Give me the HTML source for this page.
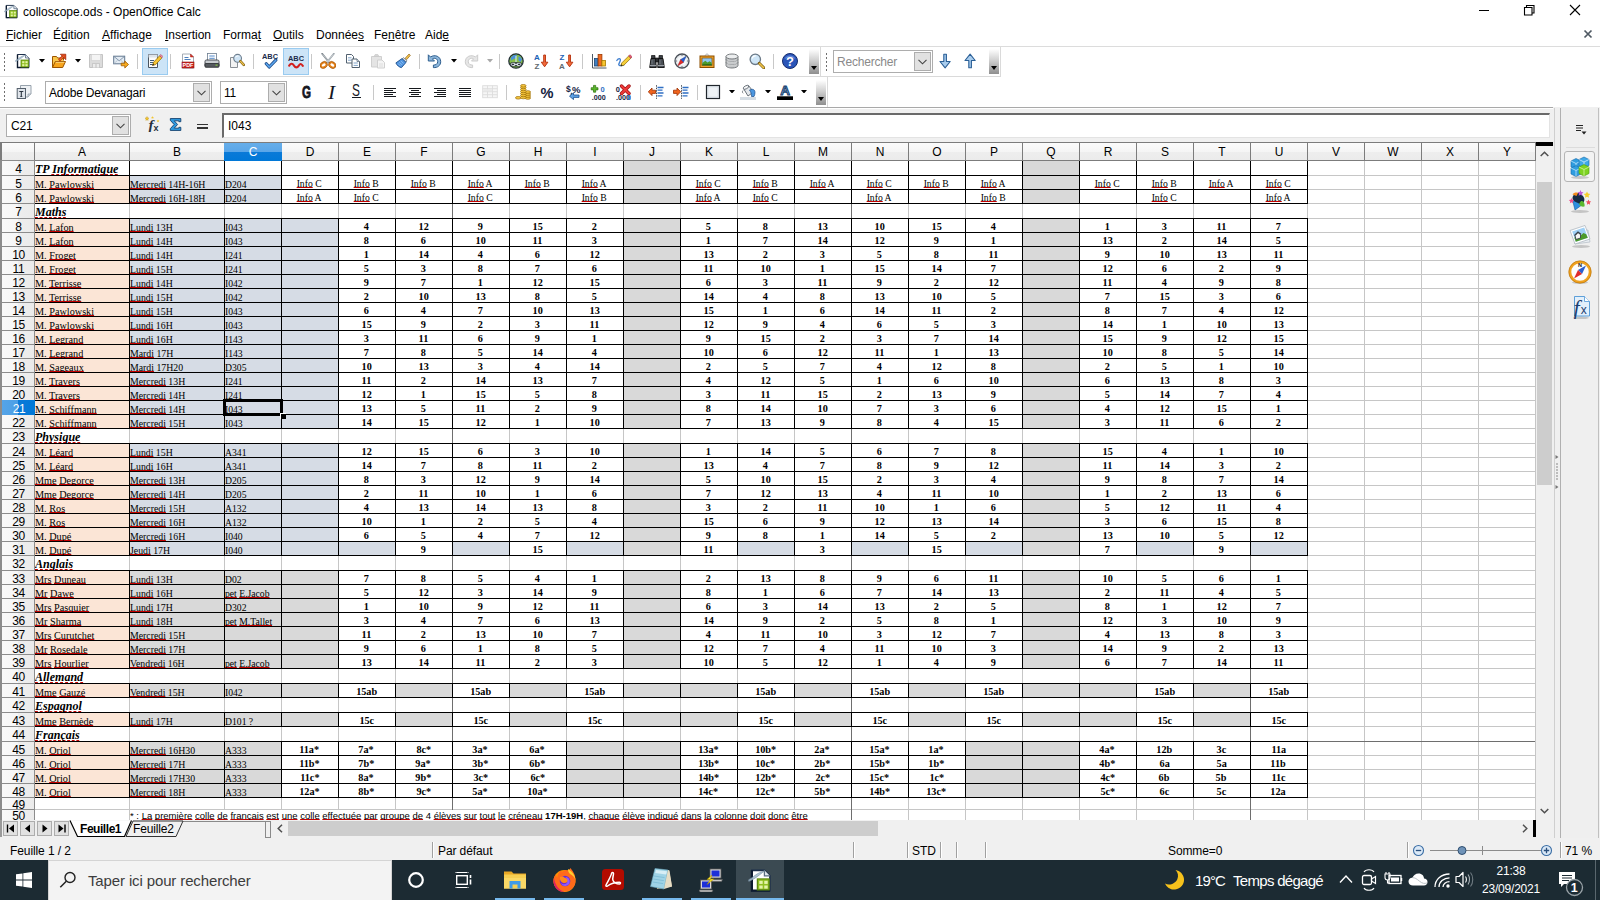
<!DOCTYPE html>
<html lang="fr"><head><meta charset="utf-8"><title>colloscope.ods - OpenOffice Calc</title>
<style>
html,body{margin:0;padding:0;background:#fff;}
#root{position:relative;width:1600px;height:900px;overflow:hidden;background:#f0f0f0;font-family:"Liberation Sans",sans-serif;font-size:12px;color:#000;}
.abs{position:absolute;box-sizing:border-box;}
#gridclip{position:absolute;left:0;top:0;width:1536px;height:820px;overflow:hidden;}
.vl{width:1px;background:#c6c6c6;}
.hl{height:1px;background:#c6c6c6;}
.bk{background:#000;}
.ct{font-family:"Liberation Serif",serif;font-size:9.4px;line-height:1;white-space:nowrap;overflow:visible;display:flex;align-items:flex-end;}
.ct span{display:block;transform:scaleX(1.09);transform-origin:50% 100%;}
.ct.l span{transform-origin:0 100%;position:relative;top:1px;}
.ct.sec span{transform:scaleX(.962);transform-origin:0 100%;}
.ct.lb span{transform:scaleX(1.045);}
.ct.lc span{transform:scaleX(1.03);}
.ct.i span{transform:scaleX(1.03);}
.ct.l{justify-content:flex-start;}
.ct.n{justify-content:center;font-weight:bold;}
.ct.i{justify-content:center;}
.ct.sec{font-weight:bold;font-style:italic;font-size:12.5px;}
.ct u, .note u{text-decoration:underline solid #c40000;text-decoration-thickness:1.2px;text-underline-offset:0.4px;text-decoration-skip-ink:none;}
.note{font-family:"Liberation Sans",sans-serif;font-size:9.5px;line-height:1;white-space:nowrap;display:flex;align-items:flex-end;}
.hdr{background:linear-gradient(#fbfbfb 0,#f5f5f5 50%,#eeeeee 50%,#ebebeb 100%);text-align:center;font-size:12px;line-height:19px;color:#000;}
.hdr.sel{background:linear-gradient(#66aeea 0,#5aa6e8 50%,#0a7ad8 50%,#0078d7 100%);color:#fff;}
.rh{background:linear-gradient(90deg,#f9f9f9 0,#f6f6f6 50%,#eeeeee 50%,#ebebeb 100%);text-align:center;font-size:12px;display:flex;align-items:center;justify-content:center;line-height:1;overflow:hidden;letter-spacing:-0.3px;}
.rh span{position:relative;top:1px;left:0.5px}
.rh.sel{background:linear-gradient(90deg,#55a4e8 0,#4a9fe6 50%,#0a7ad8 50%,#0078d7 100%);color:#fff;}
.title{font-size:12px;line-height:16px;white-space:nowrap;}
.menu{font-size:12px;line-height:16px;white-space:nowrap;}
.menu u{text-decoration:underline;}
.ui{font-size:12px;line-height:14px;white-space:nowrap;}
.tbt{font-size:17px;line-height:20px;color:#15181f;font-family:"Liberation Sans",sans-serif;}
.st{font-size:12px;line-height:16px;white-space:nowrap;letter-spacing:-0.1px}
.ct.sec u{text-decoration:underline dashed #c40000;text-decoration-thickness:1.2px;text-underline-offset:0.6px;}
.ct.n span,.ct.i span{position:relative;left:-0.6px;}

</style></head><body>
<div id="root">
<div id="gridclip">
<div class="abs" style="left:0;top:142px;width:1536px;height:678px;background:#fff"></div>
<div class="abs vl" style="left:34px;top:160px;height:660px"></div>
<div class="abs vl" style="left:129px;top:160px;height:660px"></div>
<div class="abs vl" style="left:224px;top:160px;height:660px"></div>
<div class="abs vl" style="left:281px;top:160px;height:660px"></div>
<div class="abs vl" style="left:338px;top:160px;height:660px"></div>
<div class="abs vl" style="left:395px;top:160px;height:660px"></div>
<div class="abs vl" style="left:452px;top:160px;height:660px"></div>
<div class="abs vl" style="left:509px;top:160px;height:660px"></div>
<div class="abs vl" style="left:566px;top:160px;height:660px"></div>
<div class="abs vl" style="left:623px;top:160px;height:660px"></div>
<div class="abs vl" style="left:680px;top:160px;height:660px"></div>
<div class="abs vl" style="left:737px;top:160px;height:660px"></div>
<div class="abs vl" style="left:794px;top:160px;height:660px"></div>
<div class="abs vl" style="left:851px;top:160px;height:660px"></div>
<div class="abs vl" style="left:908px;top:160px;height:660px"></div>
<div class="abs vl" style="left:965px;top:160px;height:660px"></div>
<div class="abs vl" style="left:1022px;top:160px;height:660px"></div>
<div class="abs vl" style="left:1079px;top:160px;height:660px"></div>
<div class="abs vl" style="left:1136px;top:160px;height:660px"></div>
<div class="abs vl" style="left:1193px;top:160px;height:660px"></div>
<div class="abs vl" style="left:1250px;top:160px;height:660px"></div>
<div class="abs vl" style="left:1307px;top:160px;height:660px"></div>
<div class="abs vl" style="left:1364px;top:160px;height:660px"></div>
<div class="abs vl" style="left:1421px;top:160px;height:660px"></div>
<div class="abs vl" style="left:1478px;top:160px;height:660px"></div>
<div class="abs vl" style="left:1535px;top:160px;height:660px"></div>
<div class="abs hl" style="left:34px;top:175px;width:1502px"></div>
<div class="abs hl" style="left:34px;top:189px;width:1502px"></div>
<div class="abs hl" style="left:34px;top:203px;width:1502px"></div>
<div class="abs hl" style="left:34px;top:218px;width:1502px"></div>
<div class="abs hl" style="left:34px;top:232px;width:1502px"></div>
<div class="abs hl" style="left:34px;top:246px;width:1502px"></div>
<div class="abs hl" style="left:34px;top:260px;width:1502px"></div>
<div class="abs hl" style="left:34px;top:274px;width:1502px"></div>
<div class="abs hl" style="left:34px;top:288px;width:1502px"></div>
<div class="abs hl" style="left:34px;top:302px;width:1502px"></div>
<div class="abs hl" style="left:34px;top:316px;width:1502px"></div>
<div class="abs hl" style="left:34px;top:330px;width:1502px"></div>
<div class="abs hl" style="left:34px;top:344px;width:1502px"></div>
<div class="abs hl" style="left:34px;top:358px;width:1502px"></div>
<div class="abs hl" style="left:34px;top:372px;width:1502px"></div>
<div class="abs hl" style="left:34px;top:386px;width:1502px"></div>
<div class="abs hl" style="left:34px;top:400px;width:1502px"></div>
<div class="abs hl" style="left:34px;top:414px;width:1502px"></div>
<div class="abs hl" style="left:34px;top:428px;width:1502px"></div>
<div class="abs hl" style="left:34px;top:443px;width:1502px"></div>
<div class="abs hl" style="left:34px;top:457px;width:1502px"></div>
<div class="abs hl" style="left:34px;top:471px;width:1502px"></div>
<div class="abs hl" style="left:34px;top:485px;width:1502px"></div>
<div class="abs hl" style="left:34px;top:499px;width:1502px"></div>
<div class="abs hl" style="left:34px;top:513px;width:1502px"></div>
<div class="abs hl" style="left:34px;top:527px;width:1502px"></div>
<div class="abs hl" style="left:34px;top:541px;width:1502px"></div>
<div class="abs hl" style="left:34px;top:555px;width:1502px"></div>
<div class="abs hl" style="left:34px;top:570px;width:1502px"></div>
<div class="abs hl" style="left:34px;top:584px;width:1502px"></div>
<div class="abs hl" style="left:34px;top:598px;width:1502px"></div>
<div class="abs hl" style="left:34px;top:612px;width:1502px"></div>
<div class="abs hl" style="left:34px;top:626px;width:1502px"></div>
<div class="abs hl" style="left:34px;top:640px;width:1502px"></div>
<div class="abs hl" style="left:34px;top:654px;width:1502px"></div>
<div class="abs hl" style="left:34px;top:668px;width:1502px"></div>
<div class="abs hl" style="left:34px;top:683px;width:1502px"></div>
<div class="abs hl" style="left:34px;top:697px;width:1502px"></div>
<div class="abs hl" style="left:34px;top:712px;width:1502px"></div>
<div class="abs hl" style="left:34px;top:726px;width:1502px"></div>
<div class="abs hl" style="left:34px;top:741px;width:1502px"></div>
<div class="abs hl" style="left:34px;top:755px;width:1502px"></div>
<div class="abs hl" style="left:34px;top:769px;width:1502px"></div>
<div class="abs hl" style="left:34px;top:783px;width:1502px"></div>
<div class="abs hl" style="left:34px;top:797px;width:1502px"></div>
<div class="abs hl" style="left:34px;top:809px;width:1502px"></div>
<div class="abs hl" style="left:34px;top:823px;width:1502px"></div>
<div class="abs" style="left:35px;top:176px;width:94px;height:13px;background:#fbe5d6"></div>
<div class="abs" style="left:35px;top:190px;width:94px;height:13px;background:#fbe5d6"></div>
<div class="abs" style="left:35px;top:219px;width:94px;height:13px;background:#fbe5d6"></div>
<div class="abs" style="left:35px;top:233px;width:94px;height:13px;background:#fbe5d6"></div>
<div class="abs" style="left:35px;top:247px;width:94px;height:13px;background:#fbe5d6"></div>
<div class="abs" style="left:35px;top:261px;width:94px;height:13px;background:#fbe5d6"></div>
<div class="abs" style="left:35px;top:275px;width:94px;height:13px;background:#fbe5d6"></div>
<div class="abs" style="left:35px;top:289px;width:94px;height:13px;background:#fbe5d6"></div>
<div class="abs" style="left:35px;top:303px;width:94px;height:13px;background:#fbe5d6"></div>
<div class="abs" style="left:35px;top:317px;width:94px;height:13px;background:#fbe5d6"></div>
<div class="abs" style="left:35px;top:331px;width:94px;height:13px;background:#fbe5d6"></div>
<div class="abs" style="left:35px;top:345px;width:94px;height:13px;background:#fbe5d6"></div>
<div class="abs" style="left:35px;top:359px;width:94px;height:13px;background:#fbe5d6"></div>
<div class="abs" style="left:35px;top:373px;width:94px;height:13px;background:#fbe5d6"></div>
<div class="abs" style="left:35px;top:387px;width:94px;height:13px;background:#fbe5d6"></div>
<div class="abs" style="left:35px;top:401px;width:94px;height:13px;background:#fbe5d6"></div>
<div class="abs" style="left:35px;top:415px;width:94px;height:13px;background:#fbe5d6"></div>
<div class="abs" style="left:35px;top:444px;width:94px;height:13px;background:#fbe5d6"></div>
<div class="abs" style="left:35px;top:458px;width:94px;height:13px;background:#fbe5d6"></div>
<div class="abs" style="left:35px;top:472px;width:94px;height:13px;background:#fbe5d6"></div>
<div class="abs" style="left:35px;top:486px;width:94px;height:13px;background:#fbe5d6"></div>
<div class="abs" style="left:35px;top:500px;width:94px;height:13px;background:#fbe5d6"></div>
<div class="abs" style="left:35px;top:514px;width:94px;height:13px;background:#fbe5d6"></div>
<div class="abs" style="left:35px;top:528px;width:94px;height:13px;background:#fbe5d6"></div>
<div class="abs" style="left:35px;top:542px;width:94px;height:13px;background:#fbe5d6"></div>
<div class="abs" style="left:35px;top:571px;width:94px;height:13px;background:#fbe5d6"></div>
<div class="abs" style="left:35px;top:585px;width:94px;height:13px;background:#fbe5d6"></div>
<div class="abs" style="left:35px;top:599px;width:94px;height:13px;background:#fbe5d6"></div>
<div class="abs" style="left:35px;top:613px;width:94px;height:13px;background:#fbe5d6"></div>
<div class="abs" style="left:35px;top:627px;width:94px;height:13px;background:#fbe5d6"></div>
<div class="abs" style="left:35px;top:641px;width:94px;height:13px;background:#fbe5d6"></div>
<div class="abs" style="left:35px;top:655px;width:94px;height:13px;background:#fbe5d6"></div>
<div class="abs" style="left:35px;top:684px;width:94px;height:13px;background:#fbe5d6"></div>
<div class="abs" style="left:35px;top:713px;width:94px;height:13px;background:#fbe5d6"></div>
<div class="abs" style="left:35px;top:742px;width:94px;height:13px;background:#fbe5d6"></div>
<div class="abs" style="left:35px;top:756px;width:94px;height:13px;background:#fbe5d6"></div>
<div class="abs" style="left:35px;top:770px;width:94px;height:13px;background:#fbe5d6"></div>
<div class="abs" style="left:35px;top:784px;width:94px;height:13px;background:#fbe5d6"></div>
<div class="abs" style="left:130px;top:176px;width:94px;height:13px;background:#d6dce5"></div>
<div class="abs" style="left:225px;top:176px;width:56px;height:13px;background:#d6dce5"></div>
<div class="abs" style="left:130px;top:190px;width:94px;height:13px;background:#d6dce5"></div>
<div class="abs" style="left:225px;top:190px;width:56px;height:13px;background:#d6dce5"></div>
<div class="abs" style="left:130px;top:219px;width:94px;height:13px;background:#d6dce5"></div>
<div class="abs" style="left:225px;top:219px;width:56px;height:13px;background:#d6dce5"></div>
<div class="abs" style="left:282px;top:219px;width:56px;height:13px;background:#d6dce5"></div>
<div class="abs" style="left:130px;top:233px;width:94px;height:13px;background:#d6dce5"></div>
<div class="abs" style="left:225px;top:233px;width:56px;height:13px;background:#d6dce5"></div>
<div class="abs" style="left:282px;top:233px;width:56px;height:13px;background:#d6dce5"></div>
<div class="abs" style="left:130px;top:247px;width:94px;height:13px;background:#d6dce5"></div>
<div class="abs" style="left:225px;top:247px;width:56px;height:13px;background:#d6dce5"></div>
<div class="abs" style="left:282px;top:247px;width:56px;height:13px;background:#d6dce5"></div>
<div class="abs" style="left:130px;top:261px;width:94px;height:13px;background:#d6dce5"></div>
<div class="abs" style="left:225px;top:261px;width:56px;height:13px;background:#d6dce5"></div>
<div class="abs" style="left:282px;top:261px;width:56px;height:13px;background:#d6dce5"></div>
<div class="abs" style="left:130px;top:275px;width:94px;height:13px;background:#d6dce5"></div>
<div class="abs" style="left:225px;top:275px;width:56px;height:13px;background:#d6dce5"></div>
<div class="abs" style="left:282px;top:275px;width:56px;height:13px;background:#d6dce5"></div>
<div class="abs" style="left:130px;top:289px;width:94px;height:13px;background:#d6dce5"></div>
<div class="abs" style="left:225px;top:289px;width:56px;height:13px;background:#d6dce5"></div>
<div class="abs" style="left:282px;top:289px;width:56px;height:13px;background:#d6dce5"></div>
<div class="abs" style="left:130px;top:303px;width:94px;height:13px;background:#d6dce5"></div>
<div class="abs" style="left:225px;top:303px;width:56px;height:13px;background:#d6dce5"></div>
<div class="abs" style="left:282px;top:303px;width:56px;height:13px;background:#d6dce5"></div>
<div class="abs" style="left:130px;top:317px;width:94px;height:13px;background:#d6dce5"></div>
<div class="abs" style="left:225px;top:317px;width:56px;height:13px;background:#d6dce5"></div>
<div class="abs" style="left:282px;top:317px;width:56px;height:13px;background:#d6dce5"></div>
<div class="abs" style="left:130px;top:331px;width:94px;height:13px;background:#d6dce5"></div>
<div class="abs" style="left:225px;top:331px;width:56px;height:13px;background:#d6dce5"></div>
<div class="abs" style="left:282px;top:331px;width:56px;height:13px;background:#d6dce5"></div>
<div class="abs" style="left:130px;top:345px;width:94px;height:13px;background:#d6dce5"></div>
<div class="abs" style="left:225px;top:345px;width:56px;height:13px;background:#d6dce5"></div>
<div class="abs" style="left:282px;top:345px;width:56px;height:13px;background:#d6dce5"></div>
<div class="abs" style="left:130px;top:359px;width:94px;height:13px;background:#d6dce5"></div>
<div class="abs" style="left:225px;top:359px;width:56px;height:13px;background:#d6dce5"></div>
<div class="abs" style="left:282px;top:359px;width:56px;height:13px;background:#d6dce5"></div>
<div class="abs" style="left:130px;top:373px;width:94px;height:13px;background:#d6dce5"></div>
<div class="abs" style="left:225px;top:373px;width:56px;height:13px;background:#d6dce5"></div>
<div class="abs" style="left:282px;top:373px;width:56px;height:13px;background:#d6dce5"></div>
<div class="abs" style="left:130px;top:387px;width:94px;height:13px;background:#d6dce5"></div>
<div class="abs" style="left:225px;top:387px;width:56px;height:13px;background:#d6dce5"></div>
<div class="abs" style="left:282px;top:387px;width:56px;height:13px;background:#d6dce5"></div>
<div class="abs" style="left:130px;top:401px;width:94px;height:13px;background:#d6dce5"></div>
<div class="abs" style="left:225px;top:401px;width:56px;height:13px;background:#d6dce5"></div>
<div class="abs" style="left:282px;top:401px;width:56px;height:13px;background:#d6dce5"></div>
<div class="abs" style="left:130px;top:415px;width:94px;height:13px;background:#d6dce5"></div>
<div class="abs" style="left:225px;top:415px;width:56px;height:13px;background:#d6dce5"></div>
<div class="abs" style="left:282px;top:415px;width:56px;height:13px;background:#d6dce5"></div>
<div class="abs" style="left:130px;top:444px;width:94px;height:13px;background:#d6dce5"></div>
<div class="abs" style="left:225px;top:444px;width:56px;height:13px;background:#d6dce5"></div>
<div class="abs" style="left:282px;top:444px;width:56px;height:13px;background:#d6dce5"></div>
<div class="abs" style="left:130px;top:458px;width:94px;height:13px;background:#d6dce5"></div>
<div class="abs" style="left:225px;top:458px;width:56px;height:13px;background:#d6dce5"></div>
<div class="abs" style="left:282px;top:458px;width:56px;height:13px;background:#d6dce5"></div>
<div class="abs" style="left:130px;top:472px;width:94px;height:13px;background:#d6dce5"></div>
<div class="abs" style="left:225px;top:472px;width:56px;height:13px;background:#d6dce5"></div>
<div class="abs" style="left:282px;top:472px;width:56px;height:13px;background:#d6dce5"></div>
<div class="abs" style="left:130px;top:486px;width:94px;height:13px;background:#d6dce5"></div>
<div class="abs" style="left:225px;top:486px;width:56px;height:13px;background:#d6dce5"></div>
<div class="abs" style="left:282px;top:486px;width:56px;height:13px;background:#d6dce5"></div>
<div class="abs" style="left:130px;top:500px;width:94px;height:13px;background:#d6dce5"></div>
<div class="abs" style="left:225px;top:500px;width:56px;height:13px;background:#d6dce5"></div>
<div class="abs" style="left:282px;top:500px;width:56px;height:13px;background:#d6dce5"></div>
<div class="abs" style="left:130px;top:514px;width:94px;height:13px;background:#d6dce5"></div>
<div class="abs" style="left:225px;top:514px;width:56px;height:13px;background:#d6dce5"></div>
<div class="abs" style="left:282px;top:514px;width:56px;height:13px;background:#d6dce5"></div>
<div class="abs" style="left:130px;top:528px;width:94px;height:13px;background:#d6dce5"></div>
<div class="abs" style="left:225px;top:528px;width:56px;height:13px;background:#d6dce5"></div>
<div class="abs" style="left:282px;top:528px;width:56px;height:13px;background:#d6dce5"></div>
<div class="abs" style="left:130px;top:542px;width:94px;height:13px;background:#d6dce5"></div>
<div class="abs" style="left:225px;top:542px;width:56px;height:13px;background:#d6dce5"></div>
<div class="abs" style="left:282px;top:542px;width:56px;height:13px;background:#d6dce5"></div>
<div class="abs" style="left:130px;top:571px;width:94px;height:13px;background:#d9d9d9"></div>
<div class="abs" style="left:225px;top:571px;width:56px;height:13px;background:#d9d9d9"></div>
<div class="abs" style="left:282px;top:571px;width:56px;height:13px;background:#d9d9d9"></div>
<div class="abs" style="left:130px;top:585px;width:94px;height:13px;background:#d9d9d9"></div>
<div class="abs" style="left:225px;top:585px;width:56px;height:13px;background:#d9d9d9"></div>
<div class="abs" style="left:282px;top:585px;width:56px;height:13px;background:#d9d9d9"></div>
<div class="abs" style="left:130px;top:599px;width:94px;height:13px;background:#d9d9d9"></div>
<div class="abs" style="left:225px;top:599px;width:56px;height:13px;background:#d9d9d9"></div>
<div class="abs" style="left:282px;top:599px;width:56px;height:13px;background:#d9d9d9"></div>
<div class="abs" style="left:130px;top:613px;width:94px;height:13px;background:#d9d9d9"></div>
<div class="abs" style="left:225px;top:613px;width:56px;height:13px;background:#d9d9d9"></div>
<div class="abs" style="left:282px;top:613px;width:56px;height:13px;background:#d9d9d9"></div>
<div class="abs" style="left:130px;top:627px;width:94px;height:13px;background:#d9d9d9"></div>
<div class="abs" style="left:225px;top:627px;width:56px;height:13px;background:#d9d9d9"></div>
<div class="abs" style="left:282px;top:627px;width:56px;height:13px;background:#d9d9d9"></div>
<div class="abs" style="left:130px;top:641px;width:94px;height:13px;background:#d9d9d9"></div>
<div class="abs" style="left:225px;top:641px;width:56px;height:13px;background:#d9d9d9"></div>
<div class="abs" style="left:282px;top:641px;width:56px;height:13px;background:#d9d9d9"></div>
<div class="abs" style="left:130px;top:655px;width:94px;height:13px;background:#d9d9d9"></div>
<div class="abs" style="left:225px;top:655px;width:56px;height:13px;background:#d9d9d9"></div>
<div class="abs" style="left:282px;top:655px;width:56px;height:13px;background:#d9d9d9"></div>
<div class="abs" style="left:130px;top:684px;width:94px;height:13px;background:#d9d9d9"></div>
<div class="abs" style="left:225px;top:684px;width:56px;height:13px;background:#d9d9d9"></div>
<div class="abs" style="left:282px;top:684px;width:56px;height:13px;background:#d9d9d9"></div>
<div class="abs" style="left:130px;top:713px;width:94px;height:13px;background:#d9d9d9"></div>
<div class="abs" style="left:225px;top:713px;width:56px;height:13px;background:#d9d9d9"></div>
<div class="abs" style="left:282px;top:713px;width:56px;height:13px;background:#d9d9d9"></div>
<div class="abs" style="left:130px;top:742px;width:94px;height:13px;background:#d9d9d9"></div>
<div class="abs" style="left:225px;top:742px;width:56px;height:13px;background:#d9d9d9"></div>
<div class="abs" style="left:130px;top:756px;width:94px;height:13px;background:#d9d9d9"></div>
<div class="abs" style="left:225px;top:756px;width:56px;height:13px;background:#d9d9d9"></div>
<div class="abs" style="left:130px;top:770px;width:94px;height:13px;background:#d9d9d9"></div>
<div class="abs" style="left:225px;top:770px;width:56px;height:13px;background:#d9d9d9"></div>
<div class="abs" style="left:130px;top:784px;width:94px;height:13px;background:#d9d9d9"></div>
<div class="abs" style="left:225px;top:784px;width:56px;height:13px;background:#d9d9d9"></div>
<div class="abs" style="left:624px;top:161px;width:56px;height:14px;background:#d9d9d9"></div>
<div class="abs" style="left:1023px;top:161px;width:56px;height:14px;background:#d9d9d9"></div>
<div class="abs" style="left:624px;top:176px;width:56px;height:13px;background:#d9d9d9"></div>
<div class="abs" style="left:1023px;top:176px;width:56px;height:13px;background:#d9d9d9"></div>
<div class="abs" style="left:624px;top:190px;width:56px;height:13px;background:#d9d9d9"></div>
<div class="abs" style="left:1023px;top:190px;width:56px;height:13px;background:#d9d9d9"></div>
<div class="abs" style="left:624px;top:219px;width:56px;height:13px;background:#d9d9d9"></div>
<div class="abs" style="left:1023px;top:219px;width:56px;height:13px;background:#d9d9d9"></div>
<div class="abs" style="left:624px;top:233px;width:56px;height:13px;background:#d9d9d9"></div>
<div class="abs" style="left:1023px;top:233px;width:56px;height:13px;background:#d9d9d9"></div>
<div class="abs" style="left:624px;top:247px;width:56px;height:13px;background:#d9d9d9"></div>
<div class="abs" style="left:1023px;top:247px;width:56px;height:13px;background:#d9d9d9"></div>
<div class="abs" style="left:624px;top:261px;width:56px;height:13px;background:#d9d9d9"></div>
<div class="abs" style="left:1023px;top:261px;width:56px;height:13px;background:#d9d9d9"></div>
<div class="abs" style="left:624px;top:275px;width:56px;height:13px;background:#d9d9d9"></div>
<div class="abs" style="left:1023px;top:275px;width:56px;height:13px;background:#d9d9d9"></div>
<div class="abs" style="left:624px;top:289px;width:56px;height:13px;background:#d9d9d9"></div>
<div class="abs" style="left:1023px;top:289px;width:56px;height:13px;background:#d9d9d9"></div>
<div class="abs" style="left:624px;top:303px;width:56px;height:13px;background:#d9d9d9"></div>
<div class="abs" style="left:1023px;top:303px;width:56px;height:13px;background:#d9d9d9"></div>
<div class="abs" style="left:624px;top:317px;width:56px;height:13px;background:#d9d9d9"></div>
<div class="abs" style="left:1023px;top:317px;width:56px;height:13px;background:#d9d9d9"></div>
<div class="abs" style="left:624px;top:331px;width:56px;height:13px;background:#d9d9d9"></div>
<div class="abs" style="left:1023px;top:331px;width:56px;height:13px;background:#d9d9d9"></div>
<div class="abs" style="left:624px;top:345px;width:56px;height:13px;background:#d9d9d9"></div>
<div class="abs" style="left:1023px;top:345px;width:56px;height:13px;background:#d9d9d9"></div>
<div class="abs" style="left:624px;top:359px;width:56px;height:13px;background:#d9d9d9"></div>
<div class="abs" style="left:1023px;top:359px;width:56px;height:13px;background:#d9d9d9"></div>
<div class="abs" style="left:624px;top:373px;width:56px;height:13px;background:#d9d9d9"></div>
<div class="abs" style="left:1023px;top:373px;width:56px;height:13px;background:#d9d9d9"></div>
<div class="abs" style="left:624px;top:387px;width:56px;height:13px;background:#d9d9d9"></div>
<div class="abs" style="left:1023px;top:387px;width:56px;height:13px;background:#d9d9d9"></div>
<div class="abs" style="left:624px;top:401px;width:56px;height:13px;background:#d9d9d9"></div>
<div class="abs" style="left:1023px;top:401px;width:56px;height:13px;background:#d9d9d9"></div>
<div class="abs" style="left:624px;top:415px;width:56px;height:13px;background:#d9d9d9"></div>
<div class="abs" style="left:1023px;top:415px;width:56px;height:13px;background:#d9d9d9"></div>
<div class="abs" style="left:624px;top:444px;width:56px;height:13px;background:#d9d9d9"></div>
<div class="abs" style="left:1023px;top:444px;width:56px;height:13px;background:#d9d9d9"></div>
<div class="abs" style="left:624px;top:458px;width:56px;height:13px;background:#d9d9d9"></div>
<div class="abs" style="left:1023px;top:458px;width:56px;height:13px;background:#d9d9d9"></div>
<div class="abs" style="left:624px;top:472px;width:56px;height:13px;background:#d9d9d9"></div>
<div class="abs" style="left:1023px;top:472px;width:56px;height:13px;background:#d9d9d9"></div>
<div class="abs" style="left:624px;top:486px;width:56px;height:13px;background:#d9d9d9"></div>
<div class="abs" style="left:1023px;top:486px;width:56px;height:13px;background:#d9d9d9"></div>
<div class="abs" style="left:624px;top:500px;width:56px;height:13px;background:#d9d9d9"></div>
<div class="abs" style="left:1023px;top:500px;width:56px;height:13px;background:#d9d9d9"></div>
<div class="abs" style="left:624px;top:514px;width:56px;height:13px;background:#d9d9d9"></div>
<div class="abs" style="left:1023px;top:514px;width:56px;height:13px;background:#d9d9d9"></div>
<div class="abs" style="left:624px;top:528px;width:56px;height:13px;background:#d9d9d9"></div>
<div class="abs" style="left:1023px;top:528px;width:56px;height:13px;background:#d9d9d9"></div>
<div class="abs" style="left:624px;top:542px;width:56px;height:13px;background:#d9d9d9"></div>
<div class="abs" style="left:1023px;top:542px;width:56px;height:13px;background:#d9d9d9"></div>
<div class="abs" style="left:624px;top:571px;width:56px;height:13px;background:#d9d9d9"></div>
<div class="abs" style="left:1023px;top:571px;width:56px;height:13px;background:#d9d9d9"></div>
<div class="abs" style="left:624px;top:585px;width:56px;height:13px;background:#d9d9d9"></div>
<div class="abs" style="left:1023px;top:585px;width:56px;height:13px;background:#d9d9d9"></div>
<div class="abs" style="left:624px;top:599px;width:56px;height:13px;background:#d9d9d9"></div>
<div class="abs" style="left:1023px;top:599px;width:56px;height:13px;background:#d9d9d9"></div>
<div class="abs" style="left:624px;top:613px;width:56px;height:13px;background:#d9d9d9"></div>
<div class="abs" style="left:1023px;top:613px;width:56px;height:13px;background:#d9d9d9"></div>
<div class="abs" style="left:624px;top:627px;width:56px;height:13px;background:#d9d9d9"></div>
<div class="abs" style="left:1023px;top:627px;width:56px;height:13px;background:#d9d9d9"></div>
<div class="abs" style="left:624px;top:641px;width:56px;height:13px;background:#d9d9d9"></div>
<div class="abs" style="left:1023px;top:641px;width:56px;height:13px;background:#d9d9d9"></div>
<div class="abs" style="left:624px;top:655px;width:56px;height:13px;background:#d9d9d9"></div>
<div class="abs" style="left:1023px;top:655px;width:56px;height:13px;background:#d9d9d9"></div>
<div class="abs" style="left:624px;top:684px;width:56px;height:13px;background:#d9d9d9"></div>
<div class="abs" style="left:1023px;top:684px;width:56px;height:13px;background:#d9d9d9"></div>
<div class="abs" style="left:624px;top:713px;width:56px;height:13px;background:#d9d9d9"></div>
<div class="abs" style="left:1023px;top:713px;width:56px;height:13px;background:#d9d9d9"></div>
<div class="abs" style="left:624px;top:742px;width:56px;height:13px;background:#d9d9d9"></div>
<div class="abs" style="left:1023px;top:742px;width:56px;height:13px;background:#d9d9d9"></div>
<div class="abs" style="left:624px;top:756px;width:56px;height:13px;background:#d9d9d9"></div>
<div class="abs" style="left:1023px;top:756px;width:56px;height:13px;background:#d9d9d9"></div>
<div class="abs" style="left:624px;top:770px;width:56px;height:13px;background:#d9d9d9"></div>
<div class="abs" style="left:1023px;top:770px;width:56px;height:13px;background:#d9d9d9"></div>
<div class="abs" style="left:624px;top:784px;width:56px;height:13px;background:#d9d9d9"></div>
<div class="abs" style="left:1023px;top:784px;width:56px;height:13px;background:#d9d9d9"></div>
<div class="abs" style="left:567px;top:742px;width:56px;height:13px;background:#d9d9d9"></div>
<div class="abs" style="left:966px;top:742px;width:56px;height:13px;background:#d9d9d9"></div>
<div class="abs" style="left:567px;top:756px;width:56px;height:13px;background:#d9d9d9"></div>
<div class="abs" style="left:966px;top:756px;width:56px;height:13px;background:#d9d9d9"></div>
<div class="abs" style="left:567px;top:770px;width:56px;height:13px;background:#d9d9d9"></div>
<div class="abs" style="left:966px;top:770px;width:56px;height:13px;background:#d9d9d9"></div>
<div class="abs" style="left:567px;top:784px;width:56px;height:13px;background:#d9d9d9"></div>
<div class="abs" style="left:966px;top:784px;width:56px;height:13px;background:#d9d9d9"></div>
<div class="abs" style="left:681px;top:684px;width:56px;height:13px;background:#d9d9d9"></div>
<div class="abs" style="left:1080px;top:684px;width:56px;height:13px;background:#d9d9d9"></div>
<div class="abs" style="left:681px;top:713px;width:56px;height:13px;background:#d9d9d9"></div>
<div class="abs" style="left:1080px;top:713px;width:56px;height:13px;background:#d9d9d9"></div>
<div class="abs" style="left:339px;top:542px;width:56px;height:13px;background:#d6dce5"></div>
<div class="abs" style="left:453px;top:542px;width:56px;height:13px;background:#d6dce5"></div>
<div class="abs" style="left:567px;top:542px;width:56px;height:13px;background:#d6dce5"></div>
<div class="abs" style="left:738px;top:542px;width:56px;height:13px;background:#d6dce5"></div>
<div class="abs" style="left:852px;top:542px;width:56px;height:13px;background:#d6dce5"></div>
<div class="abs" style="left:966px;top:542px;width:56px;height:13px;background:#d6dce5"></div>
<div class="abs" style="left:1137px;top:542px;width:56px;height:13px;background:#d6dce5"></div>
<div class="abs" style="left:1251px;top:542px;width:56px;height:13px;background:#d6dce5"></div>
<div class="abs" style="left:396px;top:684px;width:56px;height:13px;background:#d9d9d9"></div>
<div class="abs" style="left:510px;top:684px;width:56px;height:13px;background:#d9d9d9"></div>
<div class="abs" style="left:681px;top:684px;width:56px;height:13px;background:#d9d9d9"></div>
<div class="abs" style="left:795px;top:684px;width:56px;height:13px;background:#d9d9d9"></div>
<div class="abs" style="left:909px;top:684px;width:56px;height:13px;background:#d9d9d9"></div>
<div class="abs" style="left:1080px;top:684px;width:56px;height:13px;background:#d9d9d9"></div>
<div class="abs" style="left:1194px;top:684px;width:56px;height:13px;background:#d9d9d9"></div>
<div class="abs" style="left:396px;top:713px;width:56px;height:13px;background:#d9d9d9"></div>
<div class="abs" style="left:510px;top:713px;width:56px;height:13px;background:#d9d9d9"></div>
<div class="abs" style="left:681px;top:713px;width:56px;height:13px;background:#d9d9d9"></div>
<div class="abs" style="left:795px;top:713px;width:56px;height:13px;background:#d9d9d9"></div>
<div class="abs" style="left:909px;top:713px;width:56px;height:13px;background:#d9d9d9"></div>
<div class="abs" style="left:1080px;top:713px;width:56px;height:13px;background:#d9d9d9"></div>
<div class="abs" style="left:1194px;top:713px;width:56px;height:13px;background:#d9d9d9"></div>
<div class="abs" style="left:452px;top:160px;width:1px;height:660px;background:#6e6e6e;z-index:0"></div>
<div class="abs" style="left:851px;top:160px;width:1px;height:660px;background:#6e6e6e;z-index:0"></div>
<div class="abs" style="left:1250px;top:160px;width:1px;height:660px;background:#6e6e6e;z-index:0"></div>
<div class="abs bk" style="left:34px;top:160px;width:1274px;height:1px"></div>
<div class="abs bk" style="left:34px;top:175px;width:1274px;height:1px"></div>
<div class="abs bk" style="left:34px;top:160px;width:1px;height:16px"></div>
<div class="abs bk" style="left:129px;top:160px;width:1px;height:16px"></div>
<div class="abs bk" style="left:224px;top:160px;width:1px;height:16px"></div>
<div class="abs bk" style="left:281px;top:160px;width:1px;height:16px"></div>
<div class="abs bk" style="left:338px;top:160px;width:1px;height:16px"></div>
<div class="abs bk" style="left:395px;top:160px;width:1px;height:16px"></div>
<div class="abs bk" style="left:452px;top:160px;width:1px;height:16px"></div>
<div class="abs bk" style="left:509px;top:160px;width:1px;height:16px"></div>
<div class="abs bk" style="left:566px;top:160px;width:1px;height:16px"></div>
<div class="abs bk" style="left:623px;top:160px;width:1px;height:16px"></div>
<div class="abs bk" style="left:680px;top:160px;width:1px;height:16px"></div>
<div class="abs bk" style="left:737px;top:160px;width:1px;height:16px"></div>
<div class="abs bk" style="left:794px;top:160px;width:1px;height:16px"></div>
<div class="abs bk" style="left:851px;top:160px;width:1px;height:16px"></div>
<div class="abs bk" style="left:908px;top:160px;width:1px;height:16px"></div>
<div class="abs bk" style="left:965px;top:160px;width:1px;height:16px"></div>
<div class="abs bk" style="left:1022px;top:160px;width:1px;height:16px"></div>
<div class="abs bk" style="left:1079px;top:160px;width:1px;height:16px"></div>
<div class="abs bk" style="left:1136px;top:160px;width:1px;height:16px"></div>
<div class="abs bk" style="left:1193px;top:160px;width:1px;height:16px"></div>
<div class="abs bk" style="left:1250px;top:160px;width:1px;height:16px"></div>
<div class="abs bk" style="left:1307px;top:160px;width:1px;height:16px"></div>
<div class="abs bk" style="left:34px;top:175px;width:1274px;height:1px"></div>
<div class="abs bk" style="left:34px;top:189px;width:1274px;height:1px"></div>
<div class="abs bk" style="left:34px;top:175px;width:1px;height:15px"></div>
<div class="abs bk" style="left:129px;top:175px;width:1px;height:15px"></div>
<div class="abs bk" style="left:224px;top:175px;width:1px;height:15px"></div>
<div class="abs bk" style="left:281px;top:175px;width:1px;height:15px"></div>
<div class="abs bk" style="left:338px;top:175px;width:1px;height:15px"></div>
<div class="abs bk" style="left:395px;top:175px;width:1px;height:15px"></div>
<div class="abs bk" style="left:452px;top:175px;width:1px;height:15px"></div>
<div class="abs bk" style="left:509px;top:175px;width:1px;height:15px"></div>
<div class="abs bk" style="left:566px;top:175px;width:1px;height:15px"></div>
<div class="abs bk" style="left:623px;top:175px;width:1px;height:15px"></div>
<div class="abs bk" style="left:680px;top:175px;width:1px;height:15px"></div>
<div class="abs bk" style="left:737px;top:175px;width:1px;height:15px"></div>
<div class="abs bk" style="left:794px;top:175px;width:1px;height:15px"></div>
<div class="abs bk" style="left:851px;top:175px;width:1px;height:15px"></div>
<div class="abs bk" style="left:908px;top:175px;width:1px;height:15px"></div>
<div class="abs bk" style="left:965px;top:175px;width:1px;height:15px"></div>
<div class="abs bk" style="left:1022px;top:175px;width:1px;height:15px"></div>
<div class="abs bk" style="left:1079px;top:175px;width:1px;height:15px"></div>
<div class="abs bk" style="left:1136px;top:175px;width:1px;height:15px"></div>
<div class="abs bk" style="left:1193px;top:175px;width:1px;height:15px"></div>
<div class="abs bk" style="left:1250px;top:175px;width:1px;height:15px"></div>
<div class="abs bk" style="left:1307px;top:175px;width:1px;height:15px"></div>
<div class="abs bk" style="left:34px;top:189px;width:1274px;height:1px"></div>
<div class="abs bk" style="left:34px;top:203px;width:1274px;height:1px"></div>
<div class="abs bk" style="left:34px;top:189px;width:1px;height:15px"></div>
<div class="abs bk" style="left:129px;top:189px;width:1px;height:15px"></div>
<div class="abs bk" style="left:224px;top:189px;width:1px;height:15px"></div>
<div class="abs bk" style="left:281px;top:189px;width:1px;height:15px"></div>
<div class="abs bk" style="left:338px;top:189px;width:1px;height:15px"></div>
<div class="abs bk" style="left:395px;top:189px;width:1px;height:15px"></div>
<div class="abs bk" style="left:452px;top:189px;width:1px;height:15px"></div>
<div class="abs bk" style="left:509px;top:189px;width:1px;height:15px"></div>
<div class="abs bk" style="left:566px;top:189px;width:1px;height:15px"></div>
<div class="abs bk" style="left:623px;top:189px;width:1px;height:15px"></div>
<div class="abs bk" style="left:680px;top:189px;width:1px;height:15px"></div>
<div class="abs bk" style="left:737px;top:189px;width:1px;height:15px"></div>
<div class="abs bk" style="left:794px;top:189px;width:1px;height:15px"></div>
<div class="abs bk" style="left:851px;top:189px;width:1px;height:15px"></div>
<div class="abs bk" style="left:908px;top:189px;width:1px;height:15px"></div>
<div class="abs bk" style="left:965px;top:189px;width:1px;height:15px"></div>
<div class="abs bk" style="left:1022px;top:189px;width:1px;height:15px"></div>
<div class="abs bk" style="left:1079px;top:189px;width:1px;height:15px"></div>
<div class="abs bk" style="left:1136px;top:189px;width:1px;height:15px"></div>
<div class="abs bk" style="left:1193px;top:189px;width:1px;height:15px"></div>
<div class="abs bk" style="left:1250px;top:189px;width:1px;height:15px"></div>
<div class="abs bk" style="left:1307px;top:189px;width:1px;height:15px"></div>
<div class="abs bk" style="left:34px;top:218px;width:1274px;height:1px"></div>
<div class="abs bk" style="left:34px;top:232px;width:1274px;height:1px"></div>
<div class="abs bk" style="left:34px;top:218px;width:1px;height:15px"></div>
<div class="abs bk" style="left:129px;top:218px;width:1px;height:15px"></div>
<div class="abs bk" style="left:224px;top:218px;width:1px;height:15px"></div>
<div class="abs bk" style="left:281px;top:218px;width:1px;height:15px"></div>
<div class="abs bk" style="left:338px;top:218px;width:1px;height:15px"></div>
<div class="abs bk" style="left:395px;top:218px;width:1px;height:15px"></div>
<div class="abs bk" style="left:452px;top:218px;width:1px;height:15px"></div>
<div class="abs bk" style="left:509px;top:218px;width:1px;height:15px"></div>
<div class="abs bk" style="left:566px;top:218px;width:1px;height:15px"></div>
<div class="abs bk" style="left:623px;top:218px;width:1px;height:15px"></div>
<div class="abs bk" style="left:680px;top:218px;width:1px;height:15px"></div>
<div class="abs bk" style="left:737px;top:218px;width:1px;height:15px"></div>
<div class="abs bk" style="left:794px;top:218px;width:1px;height:15px"></div>
<div class="abs bk" style="left:851px;top:218px;width:1px;height:15px"></div>
<div class="abs bk" style="left:908px;top:218px;width:1px;height:15px"></div>
<div class="abs bk" style="left:965px;top:218px;width:1px;height:15px"></div>
<div class="abs bk" style="left:1022px;top:218px;width:1px;height:15px"></div>
<div class="abs bk" style="left:1079px;top:218px;width:1px;height:15px"></div>
<div class="abs bk" style="left:1136px;top:218px;width:1px;height:15px"></div>
<div class="abs bk" style="left:1193px;top:218px;width:1px;height:15px"></div>
<div class="abs bk" style="left:1250px;top:218px;width:1px;height:15px"></div>
<div class="abs bk" style="left:1307px;top:218px;width:1px;height:15px"></div>
<div class="abs bk" style="left:34px;top:232px;width:1274px;height:1px"></div>
<div class="abs bk" style="left:34px;top:246px;width:1274px;height:1px"></div>
<div class="abs bk" style="left:34px;top:232px;width:1px;height:15px"></div>
<div class="abs bk" style="left:129px;top:232px;width:1px;height:15px"></div>
<div class="abs bk" style="left:224px;top:232px;width:1px;height:15px"></div>
<div class="abs bk" style="left:281px;top:232px;width:1px;height:15px"></div>
<div class="abs bk" style="left:338px;top:232px;width:1px;height:15px"></div>
<div class="abs bk" style="left:395px;top:232px;width:1px;height:15px"></div>
<div class="abs bk" style="left:452px;top:232px;width:1px;height:15px"></div>
<div class="abs bk" style="left:509px;top:232px;width:1px;height:15px"></div>
<div class="abs bk" style="left:566px;top:232px;width:1px;height:15px"></div>
<div class="abs bk" style="left:623px;top:232px;width:1px;height:15px"></div>
<div class="abs bk" style="left:680px;top:232px;width:1px;height:15px"></div>
<div class="abs bk" style="left:737px;top:232px;width:1px;height:15px"></div>
<div class="abs bk" style="left:794px;top:232px;width:1px;height:15px"></div>
<div class="abs bk" style="left:851px;top:232px;width:1px;height:15px"></div>
<div class="abs bk" style="left:908px;top:232px;width:1px;height:15px"></div>
<div class="abs bk" style="left:965px;top:232px;width:1px;height:15px"></div>
<div class="abs bk" style="left:1022px;top:232px;width:1px;height:15px"></div>
<div class="abs bk" style="left:1079px;top:232px;width:1px;height:15px"></div>
<div class="abs bk" style="left:1136px;top:232px;width:1px;height:15px"></div>
<div class="abs bk" style="left:1193px;top:232px;width:1px;height:15px"></div>
<div class="abs bk" style="left:1250px;top:232px;width:1px;height:15px"></div>
<div class="abs bk" style="left:1307px;top:232px;width:1px;height:15px"></div>
<div class="abs bk" style="left:34px;top:246px;width:1274px;height:1px"></div>
<div class="abs bk" style="left:34px;top:260px;width:1274px;height:1px"></div>
<div class="abs bk" style="left:34px;top:246px;width:1px;height:15px"></div>
<div class="abs bk" style="left:129px;top:246px;width:1px;height:15px"></div>
<div class="abs bk" style="left:224px;top:246px;width:1px;height:15px"></div>
<div class="abs bk" style="left:281px;top:246px;width:1px;height:15px"></div>
<div class="abs bk" style="left:338px;top:246px;width:1px;height:15px"></div>
<div class="abs bk" style="left:395px;top:246px;width:1px;height:15px"></div>
<div class="abs bk" style="left:452px;top:246px;width:1px;height:15px"></div>
<div class="abs bk" style="left:509px;top:246px;width:1px;height:15px"></div>
<div class="abs bk" style="left:566px;top:246px;width:1px;height:15px"></div>
<div class="abs bk" style="left:623px;top:246px;width:1px;height:15px"></div>
<div class="abs bk" style="left:680px;top:246px;width:1px;height:15px"></div>
<div class="abs bk" style="left:737px;top:246px;width:1px;height:15px"></div>
<div class="abs bk" style="left:794px;top:246px;width:1px;height:15px"></div>
<div class="abs bk" style="left:851px;top:246px;width:1px;height:15px"></div>
<div class="abs bk" style="left:908px;top:246px;width:1px;height:15px"></div>
<div class="abs bk" style="left:965px;top:246px;width:1px;height:15px"></div>
<div class="abs bk" style="left:1022px;top:246px;width:1px;height:15px"></div>
<div class="abs bk" style="left:1079px;top:246px;width:1px;height:15px"></div>
<div class="abs bk" style="left:1136px;top:246px;width:1px;height:15px"></div>
<div class="abs bk" style="left:1193px;top:246px;width:1px;height:15px"></div>
<div class="abs bk" style="left:1250px;top:246px;width:1px;height:15px"></div>
<div class="abs bk" style="left:1307px;top:246px;width:1px;height:15px"></div>
<div class="abs bk" style="left:34px;top:260px;width:1274px;height:1px"></div>
<div class="abs bk" style="left:34px;top:274px;width:1274px;height:1px"></div>
<div class="abs bk" style="left:34px;top:260px;width:1px;height:15px"></div>
<div class="abs bk" style="left:129px;top:260px;width:1px;height:15px"></div>
<div class="abs bk" style="left:224px;top:260px;width:1px;height:15px"></div>
<div class="abs bk" style="left:281px;top:260px;width:1px;height:15px"></div>
<div class="abs bk" style="left:338px;top:260px;width:1px;height:15px"></div>
<div class="abs bk" style="left:395px;top:260px;width:1px;height:15px"></div>
<div class="abs bk" style="left:452px;top:260px;width:1px;height:15px"></div>
<div class="abs bk" style="left:509px;top:260px;width:1px;height:15px"></div>
<div class="abs bk" style="left:566px;top:260px;width:1px;height:15px"></div>
<div class="abs bk" style="left:623px;top:260px;width:1px;height:15px"></div>
<div class="abs bk" style="left:680px;top:260px;width:1px;height:15px"></div>
<div class="abs bk" style="left:737px;top:260px;width:1px;height:15px"></div>
<div class="abs bk" style="left:794px;top:260px;width:1px;height:15px"></div>
<div class="abs bk" style="left:851px;top:260px;width:1px;height:15px"></div>
<div class="abs bk" style="left:908px;top:260px;width:1px;height:15px"></div>
<div class="abs bk" style="left:965px;top:260px;width:1px;height:15px"></div>
<div class="abs bk" style="left:1022px;top:260px;width:1px;height:15px"></div>
<div class="abs bk" style="left:1079px;top:260px;width:1px;height:15px"></div>
<div class="abs bk" style="left:1136px;top:260px;width:1px;height:15px"></div>
<div class="abs bk" style="left:1193px;top:260px;width:1px;height:15px"></div>
<div class="abs bk" style="left:1250px;top:260px;width:1px;height:15px"></div>
<div class="abs bk" style="left:1307px;top:260px;width:1px;height:15px"></div>
<div class="abs bk" style="left:34px;top:274px;width:1274px;height:1px"></div>
<div class="abs bk" style="left:34px;top:288px;width:1274px;height:1px"></div>
<div class="abs bk" style="left:34px;top:274px;width:1px;height:15px"></div>
<div class="abs bk" style="left:129px;top:274px;width:1px;height:15px"></div>
<div class="abs bk" style="left:224px;top:274px;width:1px;height:15px"></div>
<div class="abs bk" style="left:281px;top:274px;width:1px;height:15px"></div>
<div class="abs bk" style="left:338px;top:274px;width:1px;height:15px"></div>
<div class="abs bk" style="left:395px;top:274px;width:1px;height:15px"></div>
<div class="abs bk" style="left:452px;top:274px;width:1px;height:15px"></div>
<div class="abs bk" style="left:509px;top:274px;width:1px;height:15px"></div>
<div class="abs bk" style="left:566px;top:274px;width:1px;height:15px"></div>
<div class="abs bk" style="left:623px;top:274px;width:1px;height:15px"></div>
<div class="abs bk" style="left:680px;top:274px;width:1px;height:15px"></div>
<div class="abs bk" style="left:737px;top:274px;width:1px;height:15px"></div>
<div class="abs bk" style="left:794px;top:274px;width:1px;height:15px"></div>
<div class="abs bk" style="left:851px;top:274px;width:1px;height:15px"></div>
<div class="abs bk" style="left:908px;top:274px;width:1px;height:15px"></div>
<div class="abs bk" style="left:965px;top:274px;width:1px;height:15px"></div>
<div class="abs bk" style="left:1022px;top:274px;width:1px;height:15px"></div>
<div class="abs bk" style="left:1079px;top:274px;width:1px;height:15px"></div>
<div class="abs bk" style="left:1136px;top:274px;width:1px;height:15px"></div>
<div class="abs bk" style="left:1193px;top:274px;width:1px;height:15px"></div>
<div class="abs bk" style="left:1250px;top:274px;width:1px;height:15px"></div>
<div class="abs bk" style="left:1307px;top:274px;width:1px;height:15px"></div>
<div class="abs bk" style="left:34px;top:288px;width:1274px;height:1px"></div>
<div class="abs bk" style="left:34px;top:302px;width:1274px;height:1px"></div>
<div class="abs bk" style="left:34px;top:288px;width:1px;height:15px"></div>
<div class="abs bk" style="left:129px;top:288px;width:1px;height:15px"></div>
<div class="abs bk" style="left:224px;top:288px;width:1px;height:15px"></div>
<div class="abs bk" style="left:281px;top:288px;width:1px;height:15px"></div>
<div class="abs bk" style="left:338px;top:288px;width:1px;height:15px"></div>
<div class="abs bk" style="left:395px;top:288px;width:1px;height:15px"></div>
<div class="abs bk" style="left:452px;top:288px;width:1px;height:15px"></div>
<div class="abs bk" style="left:509px;top:288px;width:1px;height:15px"></div>
<div class="abs bk" style="left:566px;top:288px;width:1px;height:15px"></div>
<div class="abs bk" style="left:623px;top:288px;width:1px;height:15px"></div>
<div class="abs bk" style="left:680px;top:288px;width:1px;height:15px"></div>
<div class="abs bk" style="left:737px;top:288px;width:1px;height:15px"></div>
<div class="abs bk" style="left:794px;top:288px;width:1px;height:15px"></div>
<div class="abs bk" style="left:851px;top:288px;width:1px;height:15px"></div>
<div class="abs bk" style="left:908px;top:288px;width:1px;height:15px"></div>
<div class="abs bk" style="left:965px;top:288px;width:1px;height:15px"></div>
<div class="abs bk" style="left:1022px;top:288px;width:1px;height:15px"></div>
<div class="abs bk" style="left:1079px;top:288px;width:1px;height:15px"></div>
<div class="abs bk" style="left:1136px;top:288px;width:1px;height:15px"></div>
<div class="abs bk" style="left:1193px;top:288px;width:1px;height:15px"></div>
<div class="abs bk" style="left:1250px;top:288px;width:1px;height:15px"></div>
<div class="abs bk" style="left:1307px;top:288px;width:1px;height:15px"></div>
<div class="abs bk" style="left:34px;top:302px;width:1274px;height:1px"></div>
<div class="abs bk" style="left:34px;top:316px;width:1274px;height:1px"></div>
<div class="abs bk" style="left:34px;top:302px;width:1px;height:15px"></div>
<div class="abs bk" style="left:129px;top:302px;width:1px;height:15px"></div>
<div class="abs bk" style="left:224px;top:302px;width:1px;height:15px"></div>
<div class="abs bk" style="left:281px;top:302px;width:1px;height:15px"></div>
<div class="abs bk" style="left:338px;top:302px;width:1px;height:15px"></div>
<div class="abs bk" style="left:395px;top:302px;width:1px;height:15px"></div>
<div class="abs bk" style="left:452px;top:302px;width:1px;height:15px"></div>
<div class="abs bk" style="left:509px;top:302px;width:1px;height:15px"></div>
<div class="abs bk" style="left:566px;top:302px;width:1px;height:15px"></div>
<div class="abs bk" style="left:623px;top:302px;width:1px;height:15px"></div>
<div class="abs bk" style="left:680px;top:302px;width:1px;height:15px"></div>
<div class="abs bk" style="left:737px;top:302px;width:1px;height:15px"></div>
<div class="abs bk" style="left:794px;top:302px;width:1px;height:15px"></div>
<div class="abs bk" style="left:851px;top:302px;width:1px;height:15px"></div>
<div class="abs bk" style="left:908px;top:302px;width:1px;height:15px"></div>
<div class="abs bk" style="left:965px;top:302px;width:1px;height:15px"></div>
<div class="abs bk" style="left:1022px;top:302px;width:1px;height:15px"></div>
<div class="abs bk" style="left:1079px;top:302px;width:1px;height:15px"></div>
<div class="abs bk" style="left:1136px;top:302px;width:1px;height:15px"></div>
<div class="abs bk" style="left:1193px;top:302px;width:1px;height:15px"></div>
<div class="abs bk" style="left:1250px;top:302px;width:1px;height:15px"></div>
<div class="abs bk" style="left:1307px;top:302px;width:1px;height:15px"></div>
<div class="abs bk" style="left:34px;top:316px;width:1274px;height:1px"></div>
<div class="abs bk" style="left:34px;top:330px;width:1274px;height:1px"></div>
<div class="abs bk" style="left:34px;top:316px;width:1px;height:15px"></div>
<div class="abs bk" style="left:129px;top:316px;width:1px;height:15px"></div>
<div class="abs bk" style="left:224px;top:316px;width:1px;height:15px"></div>
<div class="abs bk" style="left:281px;top:316px;width:1px;height:15px"></div>
<div class="abs bk" style="left:338px;top:316px;width:1px;height:15px"></div>
<div class="abs bk" style="left:395px;top:316px;width:1px;height:15px"></div>
<div class="abs bk" style="left:452px;top:316px;width:1px;height:15px"></div>
<div class="abs bk" style="left:509px;top:316px;width:1px;height:15px"></div>
<div class="abs bk" style="left:566px;top:316px;width:1px;height:15px"></div>
<div class="abs bk" style="left:623px;top:316px;width:1px;height:15px"></div>
<div class="abs bk" style="left:680px;top:316px;width:1px;height:15px"></div>
<div class="abs bk" style="left:737px;top:316px;width:1px;height:15px"></div>
<div class="abs bk" style="left:794px;top:316px;width:1px;height:15px"></div>
<div class="abs bk" style="left:851px;top:316px;width:1px;height:15px"></div>
<div class="abs bk" style="left:908px;top:316px;width:1px;height:15px"></div>
<div class="abs bk" style="left:965px;top:316px;width:1px;height:15px"></div>
<div class="abs bk" style="left:1022px;top:316px;width:1px;height:15px"></div>
<div class="abs bk" style="left:1079px;top:316px;width:1px;height:15px"></div>
<div class="abs bk" style="left:1136px;top:316px;width:1px;height:15px"></div>
<div class="abs bk" style="left:1193px;top:316px;width:1px;height:15px"></div>
<div class="abs bk" style="left:1250px;top:316px;width:1px;height:15px"></div>
<div class="abs bk" style="left:1307px;top:316px;width:1px;height:15px"></div>
<div class="abs bk" style="left:34px;top:330px;width:1274px;height:1px"></div>
<div class="abs bk" style="left:34px;top:344px;width:1274px;height:1px"></div>
<div class="abs bk" style="left:34px;top:330px;width:1px;height:15px"></div>
<div class="abs bk" style="left:129px;top:330px;width:1px;height:15px"></div>
<div class="abs bk" style="left:224px;top:330px;width:1px;height:15px"></div>
<div class="abs bk" style="left:281px;top:330px;width:1px;height:15px"></div>
<div class="abs bk" style="left:338px;top:330px;width:1px;height:15px"></div>
<div class="abs bk" style="left:395px;top:330px;width:1px;height:15px"></div>
<div class="abs bk" style="left:452px;top:330px;width:1px;height:15px"></div>
<div class="abs bk" style="left:509px;top:330px;width:1px;height:15px"></div>
<div class="abs bk" style="left:566px;top:330px;width:1px;height:15px"></div>
<div class="abs bk" style="left:623px;top:330px;width:1px;height:15px"></div>
<div class="abs bk" style="left:680px;top:330px;width:1px;height:15px"></div>
<div class="abs bk" style="left:737px;top:330px;width:1px;height:15px"></div>
<div class="abs bk" style="left:794px;top:330px;width:1px;height:15px"></div>
<div class="abs bk" style="left:851px;top:330px;width:1px;height:15px"></div>
<div class="abs bk" style="left:908px;top:330px;width:1px;height:15px"></div>
<div class="abs bk" style="left:965px;top:330px;width:1px;height:15px"></div>
<div class="abs bk" style="left:1022px;top:330px;width:1px;height:15px"></div>
<div class="abs bk" style="left:1079px;top:330px;width:1px;height:15px"></div>
<div class="abs bk" style="left:1136px;top:330px;width:1px;height:15px"></div>
<div class="abs bk" style="left:1193px;top:330px;width:1px;height:15px"></div>
<div class="abs bk" style="left:1250px;top:330px;width:1px;height:15px"></div>
<div class="abs bk" style="left:1307px;top:330px;width:1px;height:15px"></div>
<div class="abs bk" style="left:34px;top:344px;width:1274px;height:1px"></div>
<div class="abs bk" style="left:34px;top:358px;width:1274px;height:1px"></div>
<div class="abs bk" style="left:34px;top:344px;width:1px;height:15px"></div>
<div class="abs bk" style="left:129px;top:344px;width:1px;height:15px"></div>
<div class="abs bk" style="left:224px;top:344px;width:1px;height:15px"></div>
<div class="abs bk" style="left:281px;top:344px;width:1px;height:15px"></div>
<div class="abs bk" style="left:338px;top:344px;width:1px;height:15px"></div>
<div class="abs bk" style="left:395px;top:344px;width:1px;height:15px"></div>
<div class="abs bk" style="left:452px;top:344px;width:1px;height:15px"></div>
<div class="abs bk" style="left:509px;top:344px;width:1px;height:15px"></div>
<div class="abs bk" style="left:566px;top:344px;width:1px;height:15px"></div>
<div class="abs bk" style="left:623px;top:344px;width:1px;height:15px"></div>
<div class="abs bk" style="left:680px;top:344px;width:1px;height:15px"></div>
<div class="abs bk" style="left:737px;top:344px;width:1px;height:15px"></div>
<div class="abs bk" style="left:794px;top:344px;width:1px;height:15px"></div>
<div class="abs bk" style="left:851px;top:344px;width:1px;height:15px"></div>
<div class="abs bk" style="left:908px;top:344px;width:1px;height:15px"></div>
<div class="abs bk" style="left:965px;top:344px;width:1px;height:15px"></div>
<div class="abs bk" style="left:1022px;top:344px;width:1px;height:15px"></div>
<div class="abs bk" style="left:1079px;top:344px;width:1px;height:15px"></div>
<div class="abs bk" style="left:1136px;top:344px;width:1px;height:15px"></div>
<div class="abs bk" style="left:1193px;top:344px;width:1px;height:15px"></div>
<div class="abs bk" style="left:1250px;top:344px;width:1px;height:15px"></div>
<div class="abs bk" style="left:1307px;top:344px;width:1px;height:15px"></div>
<div class="abs bk" style="left:34px;top:358px;width:1274px;height:1px"></div>
<div class="abs bk" style="left:34px;top:372px;width:1274px;height:1px"></div>
<div class="abs bk" style="left:34px;top:358px;width:1px;height:15px"></div>
<div class="abs bk" style="left:129px;top:358px;width:1px;height:15px"></div>
<div class="abs bk" style="left:224px;top:358px;width:1px;height:15px"></div>
<div class="abs bk" style="left:281px;top:358px;width:1px;height:15px"></div>
<div class="abs bk" style="left:338px;top:358px;width:1px;height:15px"></div>
<div class="abs bk" style="left:395px;top:358px;width:1px;height:15px"></div>
<div class="abs bk" style="left:452px;top:358px;width:1px;height:15px"></div>
<div class="abs bk" style="left:509px;top:358px;width:1px;height:15px"></div>
<div class="abs bk" style="left:566px;top:358px;width:1px;height:15px"></div>
<div class="abs bk" style="left:623px;top:358px;width:1px;height:15px"></div>
<div class="abs bk" style="left:680px;top:358px;width:1px;height:15px"></div>
<div class="abs bk" style="left:737px;top:358px;width:1px;height:15px"></div>
<div class="abs bk" style="left:794px;top:358px;width:1px;height:15px"></div>
<div class="abs bk" style="left:851px;top:358px;width:1px;height:15px"></div>
<div class="abs bk" style="left:908px;top:358px;width:1px;height:15px"></div>
<div class="abs bk" style="left:965px;top:358px;width:1px;height:15px"></div>
<div class="abs bk" style="left:1022px;top:358px;width:1px;height:15px"></div>
<div class="abs bk" style="left:1079px;top:358px;width:1px;height:15px"></div>
<div class="abs bk" style="left:1136px;top:358px;width:1px;height:15px"></div>
<div class="abs bk" style="left:1193px;top:358px;width:1px;height:15px"></div>
<div class="abs bk" style="left:1250px;top:358px;width:1px;height:15px"></div>
<div class="abs bk" style="left:1307px;top:358px;width:1px;height:15px"></div>
<div class="abs bk" style="left:34px;top:372px;width:1274px;height:1px"></div>
<div class="abs bk" style="left:34px;top:386px;width:1274px;height:1px"></div>
<div class="abs bk" style="left:34px;top:372px;width:1px;height:15px"></div>
<div class="abs bk" style="left:129px;top:372px;width:1px;height:15px"></div>
<div class="abs bk" style="left:224px;top:372px;width:1px;height:15px"></div>
<div class="abs bk" style="left:281px;top:372px;width:1px;height:15px"></div>
<div class="abs bk" style="left:338px;top:372px;width:1px;height:15px"></div>
<div class="abs bk" style="left:395px;top:372px;width:1px;height:15px"></div>
<div class="abs bk" style="left:452px;top:372px;width:1px;height:15px"></div>
<div class="abs bk" style="left:509px;top:372px;width:1px;height:15px"></div>
<div class="abs bk" style="left:566px;top:372px;width:1px;height:15px"></div>
<div class="abs bk" style="left:623px;top:372px;width:1px;height:15px"></div>
<div class="abs bk" style="left:680px;top:372px;width:1px;height:15px"></div>
<div class="abs bk" style="left:737px;top:372px;width:1px;height:15px"></div>
<div class="abs bk" style="left:794px;top:372px;width:1px;height:15px"></div>
<div class="abs bk" style="left:851px;top:372px;width:1px;height:15px"></div>
<div class="abs bk" style="left:908px;top:372px;width:1px;height:15px"></div>
<div class="abs bk" style="left:965px;top:372px;width:1px;height:15px"></div>
<div class="abs bk" style="left:1022px;top:372px;width:1px;height:15px"></div>
<div class="abs bk" style="left:1079px;top:372px;width:1px;height:15px"></div>
<div class="abs bk" style="left:1136px;top:372px;width:1px;height:15px"></div>
<div class="abs bk" style="left:1193px;top:372px;width:1px;height:15px"></div>
<div class="abs bk" style="left:1250px;top:372px;width:1px;height:15px"></div>
<div class="abs bk" style="left:1307px;top:372px;width:1px;height:15px"></div>
<div class="abs bk" style="left:34px;top:386px;width:1274px;height:1px"></div>
<div class="abs bk" style="left:34px;top:400px;width:1274px;height:1px"></div>
<div class="abs bk" style="left:34px;top:386px;width:1px;height:15px"></div>
<div class="abs bk" style="left:129px;top:386px;width:1px;height:15px"></div>
<div class="abs bk" style="left:224px;top:386px;width:1px;height:15px"></div>
<div class="abs bk" style="left:281px;top:386px;width:1px;height:15px"></div>
<div class="abs bk" style="left:338px;top:386px;width:1px;height:15px"></div>
<div class="abs bk" style="left:395px;top:386px;width:1px;height:15px"></div>
<div class="abs bk" style="left:452px;top:386px;width:1px;height:15px"></div>
<div class="abs bk" style="left:509px;top:386px;width:1px;height:15px"></div>
<div class="abs bk" style="left:566px;top:386px;width:1px;height:15px"></div>
<div class="abs bk" style="left:623px;top:386px;width:1px;height:15px"></div>
<div class="abs bk" style="left:680px;top:386px;width:1px;height:15px"></div>
<div class="abs bk" style="left:737px;top:386px;width:1px;height:15px"></div>
<div class="abs bk" style="left:794px;top:386px;width:1px;height:15px"></div>
<div class="abs bk" style="left:851px;top:386px;width:1px;height:15px"></div>
<div class="abs bk" style="left:908px;top:386px;width:1px;height:15px"></div>
<div class="abs bk" style="left:965px;top:386px;width:1px;height:15px"></div>
<div class="abs bk" style="left:1022px;top:386px;width:1px;height:15px"></div>
<div class="abs bk" style="left:1079px;top:386px;width:1px;height:15px"></div>
<div class="abs bk" style="left:1136px;top:386px;width:1px;height:15px"></div>
<div class="abs bk" style="left:1193px;top:386px;width:1px;height:15px"></div>
<div class="abs bk" style="left:1250px;top:386px;width:1px;height:15px"></div>
<div class="abs bk" style="left:1307px;top:386px;width:1px;height:15px"></div>
<div class="abs bk" style="left:34px;top:400px;width:1274px;height:1px"></div>
<div class="abs bk" style="left:34px;top:414px;width:1274px;height:1px"></div>
<div class="abs bk" style="left:34px;top:400px;width:1px;height:15px"></div>
<div class="abs bk" style="left:129px;top:400px;width:1px;height:15px"></div>
<div class="abs bk" style="left:224px;top:400px;width:1px;height:15px"></div>
<div class="abs bk" style="left:281px;top:400px;width:1px;height:15px"></div>
<div class="abs bk" style="left:338px;top:400px;width:1px;height:15px"></div>
<div class="abs bk" style="left:395px;top:400px;width:1px;height:15px"></div>
<div class="abs bk" style="left:452px;top:400px;width:1px;height:15px"></div>
<div class="abs bk" style="left:509px;top:400px;width:1px;height:15px"></div>
<div class="abs bk" style="left:566px;top:400px;width:1px;height:15px"></div>
<div class="abs bk" style="left:623px;top:400px;width:1px;height:15px"></div>
<div class="abs bk" style="left:680px;top:400px;width:1px;height:15px"></div>
<div class="abs bk" style="left:737px;top:400px;width:1px;height:15px"></div>
<div class="abs bk" style="left:794px;top:400px;width:1px;height:15px"></div>
<div class="abs bk" style="left:851px;top:400px;width:1px;height:15px"></div>
<div class="abs bk" style="left:908px;top:400px;width:1px;height:15px"></div>
<div class="abs bk" style="left:965px;top:400px;width:1px;height:15px"></div>
<div class="abs bk" style="left:1022px;top:400px;width:1px;height:15px"></div>
<div class="abs bk" style="left:1079px;top:400px;width:1px;height:15px"></div>
<div class="abs bk" style="left:1136px;top:400px;width:1px;height:15px"></div>
<div class="abs bk" style="left:1193px;top:400px;width:1px;height:15px"></div>
<div class="abs bk" style="left:1250px;top:400px;width:1px;height:15px"></div>
<div class="abs bk" style="left:1307px;top:400px;width:1px;height:15px"></div>
<div class="abs bk" style="left:34px;top:414px;width:1274px;height:1px"></div>
<div class="abs bk" style="left:34px;top:428px;width:1274px;height:1px"></div>
<div class="abs bk" style="left:34px;top:414px;width:1px;height:15px"></div>
<div class="abs bk" style="left:129px;top:414px;width:1px;height:15px"></div>
<div class="abs bk" style="left:224px;top:414px;width:1px;height:15px"></div>
<div class="abs bk" style="left:281px;top:414px;width:1px;height:15px"></div>
<div class="abs bk" style="left:338px;top:414px;width:1px;height:15px"></div>
<div class="abs bk" style="left:395px;top:414px;width:1px;height:15px"></div>
<div class="abs bk" style="left:452px;top:414px;width:1px;height:15px"></div>
<div class="abs bk" style="left:509px;top:414px;width:1px;height:15px"></div>
<div class="abs bk" style="left:566px;top:414px;width:1px;height:15px"></div>
<div class="abs bk" style="left:623px;top:414px;width:1px;height:15px"></div>
<div class="abs bk" style="left:680px;top:414px;width:1px;height:15px"></div>
<div class="abs bk" style="left:737px;top:414px;width:1px;height:15px"></div>
<div class="abs bk" style="left:794px;top:414px;width:1px;height:15px"></div>
<div class="abs bk" style="left:851px;top:414px;width:1px;height:15px"></div>
<div class="abs bk" style="left:908px;top:414px;width:1px;height:15px"></div>
<div class="abs bk" style="left:965px;top:414px;width:1px;height:15px"></div>
<div class="abs bk" style="left:1022px;top:414px;width:1px;height:15px"></div>
<div class="abs bk" style="left:1079px;top:414px;width:1px;height:15px"></div>
<div class="abs bk" style="left:1136px;top:414px;width:1px;height:15px"></div>
<div class="abs bk" style="left:1193px;top:414px;width:1px;height:15px"></div>
<div class="abs bk" style="left:1250px;top:414px;width:1px;height:15px"></div>
<div class="abs bk" style="left:1307px;top:414px;width:1px;height:15px"></div>
<div class="abs bk" style="left:34px;top:443px;width:1274px;height:1px"></div>
<div class="abs bk" style="left:34px;top:457px;width:1274px;height:1px"></div>
<div class="abs bk" style="left:34px;top:443px;width:1px;height:15px"></div>
<div class="abs bk" style="left:129px;top:443px;width:1px;height:15px"></div>
<div class="abs bk" style="left:224px;top:443px;width:1px;height:15px"></div>
<div class="abs bk" style="left:281px;top:443px;width:1px;height:15px"></div>
<div class="abs bk" style="left:338px;top:443px;width:1px;height:15px"></div>
<div class="abs bk" style="left:395px;top:443px;width:1px;height:15px"></div>
<div class="abs bk" style="left:452px;top:443px;width:1px;height:15px"></div>
<div class="abs bk" style="left:509px;top:443px;width:1px;height:15px"></div>
<div class="abs bk" style="left:566px;top:443px;width:1px;height:15px"></div>
<div class="abs bk" style="left:623px;top:443px;width:1px;height:15px"></div>
<div class="abs bk" style="left:680px;top:443px;width:1px;height:15px"></div>
<div class="abs bk" style="left:737px;top:443px;width:1px;height:15px"></div>
<div class="abs bk" style="left:794px;top:443px;width:1px;height:15px"></div>
<div class="abs bk" style="left:851px;top:443px;width:1px;height:15px"></div>
<div class="abs bk" style="left:908px;top:443px;width:1px;height:15px"></div>
<div class="abs bk" style="left:965px;top:443px;width:1px;height:15px"></div>
<div class="abs bk" style="left:1022px;top:443px;width:1px;height:15px"></div>
<div class="abs bk" style="left:1079px;top:443px;width:1px;height:15px"></div>
<div class="abs bk" style="left:1136px;top:443px;width:1px;height:15px"></div>
<div class="abs bk" style="left:1193px;top:443px;width:1px;height:15px"></div>
<div class="abs bk" style="left:1250px;top:443px;width:1px;height:15px"></div>
<div class="abs bk" style="left:1307px;top:443px;width:1px;height:15px"></div>
<div class="abs bk" style="left:34px;top:457px;width:1274px;height:1px"></div>
<div class="abs bk" style="left:34px;top:471px;width:1274px;height:1px"></div>
<div class="abs bk" style="left:34px;top:457px;width:1px;height:15px"></div>
<div class="abs bk" style="left:129px;top:457px;width:1px;height:15px"></div>
<div class="abs bk" style="left:224px;top:457px;width:1px;height:15px"></div>
<div class="abs bk" style="left:281px;top:457px;width:1px;height:15px"></div>
<div class="abs bk" style="left:338px;top:457px;width:1px;height:15px"></div>
<div class="abs bk" style="left:395px;top:457px;width:1px;height:15px"></div>
<div class="abs bk" style="left:452px;top:457px;width:1px;height:15px"></div>
<div class="abs bk" style="left:509px;top:457px;width:1px;height:15px"></div>
<div class="abs bk" style="left:566px;top:457px;width:1px;height:15px"></div>
<div class="abs bk" style="left:623px;top:457px;width:1px;height:15px"></div>
<div class="abs bk" style="left:680px;top:457px;width:1px;height:15px"></div>
<div class="abs bk" style="left:737px;top:457px;width:1px;height:15px"></div>
<div class="abs bk" style="left:794px;top:457px;width:1px;height:15px"></div>
<div class="abs bk" style="left:851px;top:457px;width:1px;height:15px"></div>
<div class="abs bk" style="left:908px;top:457px;width:1px;height:15px"></div>
<div class="abs bk" style="left:965px;top:457px;width:1px;height:15px"></div>
<div class="abs bk" style="left:1022px;top:457px;width:1px;height:15px"></div>
<div class="abs bk" style="left:1079px;top:457px;width:1px;height:15px"></div>
<div class="abs bk" style="left:1136px;top:457px;width:1px;height:15px"></div>
<div class="abs bk" style="left:1193px;top:457px;width:1px;height:15px"></div>
<div class="abs bk" style="left:1250px;top:457px;width:1px;height:15px"></div>
<div class="abs bk" style="left:1307px;top:457px;width:1px;height:15px"></div>
<div class="abs bk" style="left:34px;top:471px;width:1274px;height:1px"></div>
<div class="abs bk" style="left:34px;top:485px;width:1274px;height:1px"></div>
<div class="abs bk" style="left:34px;top:471px;width:1px;height:15px"></div>
<div class="abs bk" style="left:129px;top:471px;width:1px;height:15px"></div>
<div class="abs bk" style="left:224px;top:471px;width:1px;height:15px"></div>
<div class="abs bk" style="left:281px;top:471px;width:1px;height:15px"></div>
<div class="abs bk" style="left:338px;top:471px;width:1px;height:15px"></div>
<div class="abs bk" style="left:395px;top:471px;width:1px;height:15px"></div>
<div class="abs bk" style="left:452px;top:471px;width:1px;height:15px"></div>
<div class="abs bk" style="left:509px;top:471px;width:1px;height:15px"></div>
<div class="abs bk" style="left:566px;top:471px;width:1px;height:15px"></div>
<div class="abs bk" style="left:623px;top:471px;width:1px;height:15px"></div>
<div class="abs bk" style="left:680px;top:471px;width:1px;height:15px"></div>
<div class="abs bk" style="left:737px;top:471px;width:1px;height:15px"></div>
<div class="abs bk" style="left:794px;top:471px;width:1px;height:15px"></div>
<div class="abs bk" style="left:851px;top:471px;width:1px;height:15px"></div>
<div class="abs bk" style="left:908px;top:471px;width:1px;height:15px"></div>
<div class="abs bk" style="left:965px;top:471px;width:1px;height:15px"></div>
<div class="abs bk" style="left:1022px;top:471px;width:1px;height:15px"></div>
<div class="abs bk" style="left:1079px;top:471px;width:1px;height:15px"></div>
<div class="abs bk" style="left:1136px;top:471px;width:1px;height:15px"></div>
<div class="abs bk" style="left:1193px;top:471px;width:1px;height:15px"></div>
<div class="abs bk" style="left:1250px;top:471px;width:1px;height:15px"></div>
<div class="abs bk" style="left:1307px;top:471px;width:1px;height:15px"></div>
<div class="abs bk" style="left:34px;top:485px;width:1274px;height:1px"></div>
<div class="abs bk" style="left:34px;top:499px;width:1274px;height:1px"></div>
<div class="abs bk" style="left:34px;top:485px;width:1px;height:15px"></div>
<div class="abs bk" style="left:129px;top:485px;width:1px;height:15px"></div>
<div class="abs bk" style="left:224px;top:485px;width:1px;height:15px"></div>
<div class="abs bk" style="left:281px;top:485px;width:1px;height:15px"></div>
<div class="abs bk" style="left:338px;top:485px;width:1px;height:15px"></div>
<div class="abs bk" style="left:395px;top:485px;width:1px;height:15px"></div>
<div class="abs bk" style="left:452px;top:485px;width:1px;height:15px"></div>
<div class="abs bk" style="left:509px;top:485px;width:1px;height:15px"></div>
<div class="abs bk" style="left:566px;top:485px;width:1px;height:15px"></div>
<div class="abs bk" style="left:623px;top:485px;width:1px;height:15px"></div>
<div class="abs bk" style="left:680px;top:485px;width:1px;height:15px"></div>
<div class="abs bk" style="left:737px;top:485px;width:1px;height:15px"></div>
<div class="abs bk" style="left:794px;top:485px;width:1px;height:15px"></div>
<div class="abs bk" style="left:851px;top:485px;width:1px;height:15px"></div>
<div class="abs bk" style="left:908px;top:485px;width:1px;height:15px"></div>
<div class="abs bk" style="left:965px;top:485px;width:1px;height:15px"></div>
<div class="abs bk" style="left:1022px;top:485px;width:1px;height:15px"></div>
<div class="abs bk" style="left:1079px;top:485px;width:1px;height:15px"></div>
<div class="abs bk" style="left:1136px;top:485px;width:1px;height:15px"></div>
<div class="abs bk" style="left:1193px;top:485px;width:1px;height:15px"></div>
<div class="abs bk" style="left:1250px;top:485px;width:1px;height:15px"></div>
<div class="abs bk" style="left:1307px;top:485px;width:1px;height:15px"></div>
<div class="abs bk" style="left:34px;top:499px;width:1274px;height:1px"></div>
<div class="abs bk" style="left:34px;top:513px;width:1274px;height:1px"></div>
<div class="abs bk" style="left:34px;top:499px;width:1px;height:15px"></div>
<div class="abs bk" style="left:129px;top:499px;width:1px;height:15px"></div>
<div class="abs bk" style="left:224px;top:499px;width:1px;height:15px"></div>
<div class="abs bk" style="left:281px;top:499px;width:1px;height:15px"></div>
<div class="abs bk" style="left:338px;top:499px;width:1px;height:15px"></div>
<div class="abs bk" style="left:395px;top:499px;width:1px;height:15px"></div>
<div class="abs bk" style="left:452px;top:499px;width:1px;height:15px"></div>
<div class="abs bk" style="left:509px;top:499px;width:1px;height:15px"></div>
<div class="abs bk" style="left:566px;top:499px;width:1px;height:15px"></div>
<div class="abs bk" style="left:623px;top:499px;width:1px;height:15px"></div>
<div class="abs bk" style="left:680px;top:499px;width:1px;height:15px"></div>
<div class="abs bk" style="left:737px;top:499px;width:1px;height:15px"></div>
<div class="abs bk" style="left:794px;top:499px;width:1px;height:15px"></div>
<div class="abs bk" style="left:851px;top:499px;width:1px;height:15px"></div>
<div class="abs bk" style="left:908px;top:499px;width:1px;height:15px"></div>
<div class="abs bk" style="left:965px;top:499px;width:1px;height:15px"></div>
<div class="abs bk" style="left:1022px;top:499px;width:1px;height:15px"></div>
<div class="abs bk" style="left:1079px;top:499px;width:1px;height:15px"></div>
<div class="abs bk" style="left:1136px;top:499px;width:1px;height:15px"></div>
<div class="abs bk" style="left:1193px;top:499px;width:1px;height:15px"></div>
<div class="abs bk" style="left:1250px;top:499px;width:1px;height:15px"></div>
<div class="abs bk" style="left:1307px;top:499px;width:1px;height:15px"></div>
<div class="abs bk" style="left:34px;top:513px;width:1274px;height:1px"></div>
<div class="abs bk" style="left:34px;top:527px;width:1274px;height:1px"></div>
<div class="abs bk" style="left:34px;top:513px;width:1px;height:15px"></div>
<div class="abs bk" style="left:129px;top:513px;width:1px;height:15px"></div>
<div class="abs bk" style="left:224px;top:513px;width:1px;height:15px"></div>
<div class="abs bk" style="left:281px;top:513px;width:1px;height:15px"></div>
<div class="abs bk" style="left:338px;top:513px;width:1px;height:15px"></div>
<div class="abs bk" style="left:395px;top:513px;width:1px;height:15px"></div>
<div class="abs bk" style="left:452px;top:513px;width:1px;height:15px"></div>
<div class="abs bk" style="left:509px;top:513px;width:1px;height:15px"></div>
<div class="abs bk" style="left:566px;top:513px;width:1px;height:15px"></div>
<div class="abs bk" style="left:623px;top:513px;width:1px;height:15px"></div>
<div class="abs bk" style="left:680px;top:513px;width:1px;height:15px"></div>
<div class="abs bk" style="left:737px;top:513px;width:1px;height:15px"></div>
<div class="abs bk" style="left:794px;top:513px;width:1px;height:15px"></div>
<div class="abs bk" style="left:851px;top:513px;width:1px;height:15px"></div>
<div class="abs bk" style="left:908px;top:513px;width:1px;height:15px"></div>
<div class="abs bk" style="left:965px;top:513px;width:1px;height:15px"></div>
<div class="abs bk" style="left:1022px;top:513px;width:1px;height:15px"></div>
<div class="abs bk" style="left:1079px;top:513px;width:1px;height:15px"></div>
<div class="abs bk" style="left:1136px;top:513px;width:1px;height:15px"></div>
<div class="abs bk" style="left:1193px;top:513px;width:1px;height:15px"></div>
<div class="abs bk" style="left:1250px;top:513px;width:1px;height:15px"></div>
<div class="abs bk" style="left:1307px;top:513px;width:1px;height:15px"></div>
<div class="abs bk" style="left:34px;top:527px;width:1274px;height:1px"></div>
<div class="abs bk" style="left:34px;top:541px;width:1274px;height:1px"></div>
<div class="abs bk" style="left:34px;top:527px;width:1px;height:15px"></div>
<div class="abs bk" style="left:129px;top:527px;width:1px;height:15px"></div>
<div class="abs bk" style="left:224px;top:527px;width:1px;height:15px"></div>
<div class="abs bk" style="left:281px;top:527px;width:1px;height:15px"></div>
<div class="abs bk" style="left:338px;top:527px;width:1px;height:15px"></div>
<div class="abs bk" style="left:395px;top:527px;width:1px;height:15px"></div>
<div class="abs bk" style="left:452px;top:527px;width:1px;height:15px"></div>
<div class="abs bk" style="left:509px;top:527px;width:1px;height:15px"></div>
<div class="abs bk" style="left:566px;top:527px;width:1px;height:15px"></div>
<div class="abs bk" style="left:623px;top:527px;width:1px;height:15px"></div>
<div class="abs bk" style="left:680px;top:527px;width:1px;height:15px"></div>
<div class="abs bk" style="left:737px;top:527px;width:1px;height:15px"></div>
<div class="abs bk" style="left:794px;top:527px;width:1px;height:15px"></div>
<div class="abs bk" style="left:851px;top:527px;width:1px;height:15px"></div>
<div class="abs bk" style="left:908px;top:527px;width:1px;height:15px"></div>
<div class="abs bk" style="left:965px;top:527px;width:1px;height:15px"></div>
<div class="abs bk" style="left:1022px;top:527px;width:1px;height:15px"></div>
<div class="abs bk" style="left:1079px;top:527px;width:1px;height:15px"></div>
<div class="abs bk" style="left:1136px;top:527px;width:1px;height:15px"></div>
<div class="abs bk" style="left:1193px;top:527px;width:1px;height:15px"></div>
<div class="abs bk" style="left:1250px;top:527px;width:1px;height:15px"></div>
<div class="abs bk" style="left:1307px;top:527px;width:1px;height:15px"></div>
<div class="abs bk" style="left:34px;top:541px;width:1274px;height:1px"></div>
<div class="abs bk" style="left:34px;top:555px;width:1274px;height:1px"></div>
<div class="abs bk" style="left:34px;top:541px;width:1px;height:15px"></div>
<div class="abs bk" style="left:129px;top:541px;width:1px;height:15px"></div>
<div class="abs bk" style="left:224px;top:541px;width:1px;height:15px"></div>
<div class="abs bk" style="left:281px;top:541px;width:1px;height:15px"></div>
<div class="abs bk" style="left:338px;top:541px;width:1px;height:15px"></div>
<div class="abs bk" style="left:395px;top:541px;width:1px;height:15px"></div>
<div class="abs bk" style="left:452px;top:541px;width:1px;height:15px"></div>
<div class="abs bk" style="left:509px;top:541px;width:1px;height:15px"></div>
<div class="abs bk" style="left:566px;top:541px;width:1px;height:15px"></div>
<div class="abs bk" style="left:623px;top:541px;width:1px;height:15px"></div>
<div class="abs bk" style="left:680px;top:541px;width:1px;height:15px"></div>
<div class="abs bk" style="left:737px;top:541px;width:1px;height:15px"></div>
<div class="abs bk" style="left:794px;top:541px;width:1px;height:15px"></div>
<div class="abs bk" style="left:851px;top:541px;width:1px;height:15px"></div>
<div class="abs bk" style="left:908px;top:541px;width:1px;height:15px"></div>
<div class="abs bk" style="left:965px;top:541px;width:1px;height:15px"></div>
<div class="abs bk" style="left:1022px;top:541px;width:1px;height:15px"></div>
<div class="abs bk" style="left:1079px;top:541px;width:1px;height:15px"></div>
<div class="abs bk" style="left:1136px;top:541px;width:1px;height:15px"></div>
<div class="abs bk" style="left:1193px;top:541px;width:1px;height:15px"></div>
<div class="abs bk" style="left:1250px;top:541px;width:1px;height:15px"></div>
<div class="abs bk" style="left:1307px;top:541px;width:1px;height:15px"></div>
<div class="abs bk" style="left:34px;top:570px;width:1274px;height:1px"></div>
<div class="abs bk" style="left:34px;top:584px;width:1274px;height:1px"></div>
<div class="abs bk" style="left:34px;top:570px;width:1px;height:15px"></div>
<div class="abs bk" style="left:129px;top:570px;width:1px;height:15px"></div>
<div class="abs bk" style="left:224px;top:570px;width:1px;height:15px"></div>
<div class="abs bk" style="left:281px;top:570px;width:1px;height:15px"></div>
<div class="abs bk" style="left:338px;top:570px;width:1px;height:15px"></div>
<div class="abs bk" style="left:395px;top:570px;width:1px;height:15px"></div>
<div class="abs bk" style="left:452px;top:570px;width:1px;height:15px"></div>
<div class="abs bk" style="left:509px;top:570px;width:1px;height:15px"></div>
<div class="abs bk" style="left:566px;top:570px;width:1px;height:15px"></div>
<div class="abs bk" style="left:623px;top:570px;width:1px;height:15px"></div>
<div class="abs bk" style="left:680px;top:570px;width:1px;height:15px"></div>
<div class="abs bk" style="left:737px;top:570px;width:1px;height:15px"></div>
<div class="abs bk" style="left:794px;top:570px;width:1px;height:15px"></div>
<div class="abs bk" style="left:851px;top:570px;width:1px;height:15px"></div>
<div class="abs bk" style="left:908px;top:570px;width:1px;height:15px"></div>
<div class="abs bk" style="left:965px;top:570px;width:1px;height:15px"></div>
<div class="abs bk" style="left:1022px;top:570px;width:1px;height:15px"></div>
<div class="abs bk" style="left:1079px;top:570px;width:1px;height:15px"></div>
<div class="abs bk" style="left:1136px;top:570px;width:1px;height:15px"></div>
<div class="abs bk" style="left:1193px;top:570px;width:1px;height:15px"></div>
<div class="abs bk" style="left:1250px;top:570px;width:1px;height:15px"></div>
<div class="abs bk" style="left:1307px;top:570px;width:1px;height:15px"></div>
<div class="abs bk" style="left:34px;top:584px;width:1274px;height:1px"></div>
<div class="abs bk" style="left:34px;top:598px;width:1274px;height:1px"></div>
<div class="abs bk" style="left:34px;top:584px;width:1px;height:15px"></div>
<div class="abs bk" style="left:129px;top:584px;width:1px;height:15px"></div>
<div class="abs bk" style="left:224px;top:584px;width:1px;height:15px"></div>
<div class="abs bk" style="left:281px;top:584px;width:1px;height:15px"></div>
<div class="abs bk" style="left:338px;top:584px;width:1px;height:15px"></div>
<div class="abs bk" style="left:395px;top:584px;width:1px;height:15px"></div>
<div class="abs bk" style="left:452px;top:584px;width:1px;height:15px"></div>
<div class="abs bk" style="left:509px;top:584px;width:1px;height:15px"></div>
<div class="abs bk" style="left:566px;top:584px;width:1px;height:15px"></div>
<div class="abs bk" style="left:623px;top:584px;width:1px;height:15px"></div>
<div class="abs bk" style="left:680px;top:584px;width:1px;height:15px"></div>
<div class="abs bk" style="left:737px;top:584px;width:1px;height:15px"></div>
<div class="abs bk" style="left:794px;top:584px;width:1px;height:15px"></div>
<div class="abs bk" style="left:851px;top:584px;width:1px;height:15px"></div>
<div class="abs bk" style="left:908px;top:584px;width:1px;height:15px"></div>
<div class="abs bk" style="left:965px;top:584px;width:1px;height:15px"></div>
<div class="abs bk" style="left:1022px;top:584px;width:1px;height:15px"></div>
<div class="abs bk" style="left:1079px;top:584px;width:1px;height:15px"></div>
<div class="abs bk" style="left:1136px;top:584px;width:1px;height:15px"></div>
<div class="abs bk" style="left:1193px;top:584px;width:1px;height:15px"></div>
<div class="abs bk" style="left:1250px;top:584px;width:1px;height:15px"></div>
<div class="abs bk" style="left:1307px;top:584px;width:1px;height:15px"></div>
<div class="abs bk" style="left:34px;top:598px;width:1274px;height:1px"></div>
<div class="abs bk" style="left:34px;top:612px;width:1274px;height:1px"></div>
<div class="abs bk" style="left:34px;top:598px;width:1px;height:15px"></div>
<div class="abs bk" style="left:129px;top:598px;width:1px;height:15px"></div>
<div class="abs bk" style="left:224px;top:598px;width:1px;height:15px"></div>
<div class="abs bk" style="left:281px;top:598px;width:1px;height:15px"></div>
<div class="abs bk" style="left:338px;top:598px;width:1px;height:15px"></div>
<div class="abs bk" style="left:395px;top:598px;width:1px;height:15px"></div>
<div class="abs bk" style="left:452px;top:598px;width:1px;height:15px"></div>
<div class="abs bk" style="left:509px;top:598px;width:1px;height:15px"></div>
<div class="abs bk" style="left:566px;top:598px;width:1px;height:15px"></div>
<div class="abs bk" style="left:623px;top:598px;width:1px;height:15px"></div>
<div class="abs bk" style="left:680px;top:598px;width:1px;height:15px"></div>
<div class="abs bk" style="left:737px;top:598px;width:1px;height:15px"></div>
<div class="abs bk" style="left:794px;top:598px;width:1px;height:15px"></div>
<div class="abs bk" style="left:851px;top:598px;width:1px;height:15px"></div>
<div class="abs bk" style="left:908px;top:598px;width:1px;height:15px"></div>
<div class="abs bk" style="left:965px;top:598px;width:1px;height:15px"></div>
<div class="abs bk" style="left:1022px;top:598px;width:1px;height:15px"></div>
<div class="abs bk" style="left:1079px;top:598px;width:1px;height:15px"></div>
<div class="abs bk" style="left:1136px;top:598px;width:1px;height:15px"></div>
<div class="abs bk" style="left:1193px;top:598px;width:1px;height:15px"></div>
<div class="abs bk" style="left:1250px;top:598px;width:1px;height:15px"></div>
<div class="abs bk" style="left:1307px;top:598px;width:1px;height:15px"></div>
<div class="abs bk" style="left:34px;top:612px;width:1274px;height:1px"></div>
<div class="abs bk" style="left:34px;top:626px;width:1274px;height:1px"></div>
<div class="abs bk" style="left:34px;top:612px;width:1px;height:15px"></div>
<div class="abs bk" style="left:129px;top:612px;width:1px;height:15px"></div>
<div class="abs bk" style="left:224px;top:612px;width:1px;height:15px"></div>
<div class="abs bk" style="left:281px;top:612px;width:1px;height:15px"></div>
<div class="abs bk" style="left:338px;top:612px;width:1px;height:15px"></div>
<div class="abs bk" style="left:395px;top:612px;width:1px;height:15px"></div>
<div class="abs bk" style="left:452px;top:612px;width:1px;height:15px"></div>
<div class="abs bk" style="left:509px;top:612px;width:1px;height:15px"></div>
<div class="abs bk" style="left:566px;top:612px;width:1px;height:15px"></div>
<div class="abs bk" style="left:623px;top:612px;width:1px;height:15px"></div>
<div class="abs bk" style="left:680px;top:612px;width:1px;height:15px"></div>
<div class="abs bk" style="left:737px;top:612px;width:1px;height:15px"></div>
<div class="abs bk" style="left:794px;top:612px;width:1px;height:15px"></div>
<div class="abs bk" style="left:851px;top:612px;width:1px;height:15px"></div>
<div class="abs bk" style="left:908px;top:612px;width:1px;height:15px"></div>
<div class="abs bk" style="left:965px;top:612px;width:1px;height:15px"></div>
<div class="abs bk" style="left:1022px;top:612px;width:1px;height:15px"></div>
<div class="abs bk" style="left:1079px;top:612px;width:1px;height:15px"></div>
<div class="abs bk" style="left:1136px;top:612px;width:1px;height:15px"></div>
<div class="abs bk" style="left:1193px;top:612px;width:1px;height:15px"></div>
<div class="abs bk" style="left:1250px;top:612px;width:1px;height:15px"></div>
<div class="abs bk" style="left:1307px;top:612px;width:1px;height:15px"></div>
<div class="abs bk" style="left:34px;top:626px;width:1274px;height:1px"></div>
<div class="abs bk" style="left:34px;top:640px;width:1274px;height:1px"></div>
<div class="abs bk" style="left:34px;top:626px;width:1px;height:15px"></div>
<div class="abs bk" style="left:129px;top:626px;width:1px;height:15px"></div>
<div class="abs bk" style="left:224px;top:626px;width:1px;height:15px"></div>
<div class="abs bk" style="left:281px;top:626px;width:1px;height:15px"></div>
<div class="abs bk" style="left:338px;top:626px;width:1px;height:15px"></div>
<div class="abs bk" style="left:395px;top:626px;width:1px;height:15px"></div>
<div class="abs bk" style="left:452px;top:626px;width:1px;height:15px"></div>
<div class="abs bk" style="left:509px;top:626px;width:1px;height:15px"></div>
<div class="abs bk" style="left:566px;top:626px;width:1px;height:15px"></div>
<div class="abs bk" style="left:623px;top:626px;width:1px;height:15px"></div>
<div class="abs bk" style="left:680px;top:626px;width:1px;height:15px"></div>
<div class="abs bk" style="left:737px;top:626px;width:1px;height:15px"></div>
<div class="abs bk" style="left:794px;top:626px;width:1px;height:15px"></div>
<div class="abs bk" style="left:851px;top:626px;width:1px;height:15px"></div>
<div class="abs bk" style="left:908px;top:626px;width:1px;height:15px"></div>
<div class="abs bk" style="left:965px;top:626px;width:1px;height:15px"></div>
<div class="abs bk" style="left:1022px;top:626px;width:1px;height:15px"></div>
<div class="abs bk" style="left:1079px;top:626px;width:1px;height:15px"></div>
<div class="abs bk" style="left:1136px;top:626px;width:1px;height:15px"></div>
<div class="abs bk" style="left:1193px;top:626px;width:1px;height:15px"></div>
<div class="abs bk" style="left:1250px;top:626px;width:1px;height:15px"></div>
<div class="abs bk" style="left:1307px;top:626px;width:1px;height:15px"></div>
<div class="abs bk" style="left:34px;top:640px;width:1274px;height:1px"></div>
<div class="abs bk" style="left:34px;top:654px;width:1274px;height:1px"></div>
<div class="abs bk" style="left:34px;top:640px;width:1px;height:15px"></div>
<div class="abs bk" style="left:129px;top:640px;width:1px;height:15px"></div>
<div class="abs bk" style="left:224px;top:640px;width:1px;height:15px"></div>
<div class="abs bk" style="left:281px;top:640px;width:1px;height:15px"></div>
<div class="abs bk" style="left:338px;top:640px;width:1px;height:15px"></div>
<div class="abs bk" style="left:395px;top:640px;width:1px;height:15px"></div>
<div class="abs bk" style="left:452px;top:640px;width:1px;height:15px"></div>
<div class="abs bk" style="left:509px;top:640px;width:1px;height:15px"></div>
<div class="abs bk" style="left:566px;top:640px;width:1px;height:15px"></div>
<div class="abs bk" style="left:623px;top:640px;width:1px;height:15px"></div>
<div class="abs bk" style="left:680px;top:640px;width:1px;height:15px"></div>
<div class="abs bk" style="left:737px;top:640px;width:1px;height:15px"></div>
<div class="abs bk" style="left:794px;top:640px;width:1px;height:15px"></div>
<div class="abs bk" style="left:851px;top:640px;width:1px;height:15px"></div>
<div class="abs bk" style="left:908px;top:640px;width:1px;height:15px"></div>
<div class="abs bk" style="left:965px;top:640px;width:1px;height:15px"></div>
<div class="abs bk" style="left:1022px;top:640px;width:1px;height:15px"></div>
<div class="abs bk" style="left:1079px;top:640px;width:1px;height:15px"></div>
<div class="abs bk" style="left:1136px;top:640px;width:1px;height:15px"></div>
<div class="abs bk" style="left:1193px;top:640px;width:1px;height:15px"></div>
<div class="abs bk" style="left:1250px;top:640px;width:1px;height:15px"></div>
<div class="abs bk" style="left:1307px;top:640px;width:1px;height:15px"></div>
<div class="abs bk" style="left:34px;top:654px;width:1274px;height:1px"></div>
<div class="abs bk" style="left:34px;top:668px;width:1274px;height:1px"></div>
<div class="abs bk" style="left:34px;top:654px;width:1px;height:15px"></div>
<div class="abs bk" style="left:129px;top:654px;width:1px;height:15px"></div>
<div class="abs bk" style="left:224px;top:654px;width:1px;height:15px"></div>
<div class="abs bk" style="left:281px;top:654px;width:1px;height:15px"></div>
<div class="abs bk" style="left:338px;top:654px;width:1px;height:15px"></div>
<div class="abs bk" style="left:395px;top:654px;width:1px;height:15px"></div>
<div class="abs bk" style="left:452px;top:654px;width:1px;height:15px"></div>
<div class="abs bk" style="left:509px;top:654px;width:1px;height:15px"></div>
<div class="abs bk" style="left:566px;top:654px;width:1px;height:15px"></div>
<div class="abs bk" style="left:623px;top:654px;width:1px;height:15px"></div>
<div class="abs bk" style="left:680px;top:654px;width:1px;height:15px"></div>
<div class="abs bk" style="left:737px;top:654px;width:1px;height:15px"></div>
<div class="abs bk" style="left:794px;top:654px;width:1px;height:15px"></div>
<div class="abs bk" style="left:851px;top:654px;width:1px;height:15px"></div>
<div class="abs bk" style="left:908px;top:654px;width:1px;height:15px"></div>
<div class="abs bk" style="left:965px;top:654px;width:1px;height:15px"></div>
<div class="abs bk" style="left:1022px;top:654px;width:1px;height:15px"></div>
<div class="abs bk" style="left:1079px;top:654px;width:1px;height:15px"></div>
<div class="abs bk" style="left:1136px;top:654px;width:1px;height:15px"></div>
<div class="abs bk" style="left:1193px;top:654px;width:1px;height:15px"></div>
<div class="abs bk" style="left:1250px;top:654px;width:1px;height:15px"></div>
<div class="abs bk" style="left:1307px;top:654px;width:1px;height:15px"></div>
<div class="abs bk" style="left:34px;top:683px;width:1274px;height:1px"></div>
<div class="abs bk" style="left:34px;top:697px;width:1274px;height:1px"></div>
<div class="abs bk" style="left:34px;top:683px;width:1px;height:15px"></div>
<div class="abs bk" style="left:129px;top:683px;width:1px;height:15px"></div>
<div class="abs bk" style="left:224px;top:683px;width:1px;height:15px"></div>
<div class="abs bk" style="left:281px;top:683px;width:1px;height:15px"></div>
<div class="abs bk" style="left:338px;top:683px;width:1px;height:15px"></div>
<div class="abs bk" style="left:395px;top:683px;width:1px;height:15px"></div>
<div class="abs bk" style="left:452px;top:683px;width:1px;height:15px"></div>
<div class="abs bk" style="left:509px;top:683px;width:1px;height:15px"></div>
<div class="abs bk" style="left:566px;top:683px;width:1px;height:15px"></div>
<div class="abs bk" style="left:623px;top:683px;width:1px;height:15px"></div>
<div class="abs bk" style="left:680px;top:683px;width:1px;height:15px"></div>
<div class="abs bk" style="left:737px;top:683px;width:1px;height:15px"></div>
<div class="abs bk" style="left:794px;top:683px;width:1px;height:15px"></div>
<div class="abs bk" style="left:851px;top:683px;width:1px;height:15px"></div>
<div class="abs bk" style="left:908px;top:683px;width:1px;height:15px"></div>
<div class="abs bk" style="left:965px;top:683px;width:1px;height:15px"></div>
<div class="abs bk" style="left:1022px;top:683px;width:1px;height:15px"></div>
<div class="abs bk" style="left:1079px;top:683px;width:1px;height:15px"></div>
<div class="abs bk" style="left:1136px;top:683px;width:1px;height:15px"></div>
<div class="abs bk" style="left:1193px;top:683px;width:1px;height:15px"></div>
<div class="abs bk" style="left:1250px;top:683px;width:1px;height:15px"></div>
<div class="abs bk" style="left:1307px;top:683px;width:1px;height:15px"></div>
<div class="abs bk" style="left:34px;top:712px;width:1274px;height:1px"></div>
<div class="abs bk" style="left:34px;top:726px;width:1274px;height:1px"></div>
<div class="abs bk" style="left:34px;top:712px;width:1px;height:15px"></div>
<div class="abs bk" style="left:129px;top:712px;width:1px;height:15px"></div>
<div class="abs bk" style="left:224px;top:712px;width:1px;height:15px"></div>
<div class="abs bk" style="left:281px;top:712px;width:1px;height:15px"></div>
<div class="abs bk" style="left:338px;top:712px;width:1px;height:15px"></div>
<div class="abs bk" style="left:395px;top:712px;width:1px;height:15px"></div>
<div class="abs bk" style="left:452px;top:712px;width:1px;height:15px"></div>
<div class="abs bk" style="left:509px;top:712px;width:1px;height:15px"></div>
<div class="abs bk" style="left:566px;top:712px;width:1px;height:15px"></div>
<div class="abs bk" style="left:623px;top:712px;width:1px;height:15px"></div>
<div class="abs bk" style="left:680px;top:712px;width:1px;height:15px"></div>
<div class="abs bk" style="left:737px;top:712px;width:1px;height:15px"></div>
<div class="abs bk" style="left:794px;top:712px;width:1px;height:15px"></div>
<div class="abs bk" style="left:851px;top:712px;width:1px;height:15px"></div>
<div class="abs bk" style="left:908px;top:712px;width:1px;height:15px"></div>
<div class="abs bk" style="left:965px;top:712px;width:1px;height:15px"></div>
<div class="abs bk" style="left:1022px;top:712px;width:1px;height:15px"></div>
<div class="abs bk" style="left:1079px;top:712px;width:1px;height:15px"></div>
<div class="abs bk" style="left:1136px;top:712px;width:1px;height:15px"></div>
<div class="abs bk" style="left:1193px;top:712px;width:1px;height:15px"></div>
<div class="abs bk" style="left:1250px;top:712px;width:1px;height:15px"></div>
<div class="abs bk" style="left:1307px;top:712px;width:1px;height:15px"></div>
<div class="abs bk" style="left:34px;top:741px;width:1274px;height:1px"></div>
<div class="abs bk" style="left:34px;top:755px;width:1274px;height:1px"></div>
<div class="abs bk" style="left:34px;top:741px;width:1px;height:15px"></div>
<div class="abs bk" style="left:129px;top:741px;width:1px;height:15px"></div>
<div class="abs bk" style="left:224px;top:741px;width:1px;height:15px"></div>
<div class="abs bk" style="left:281px;top:741px;width:1px;height:15px"></div>
<div class="abs bk" style="left:338px;top:741px;width:1px;height:15px"></div>
<div class="abs bk" style="left:395px;top:741px;width:1px;height:15px"></div>
<div class="abs bk" style="left:452px;top:741px;width:1px;height:15px"></div>
<div class="abs bk" style="left:509px;top:741px;width:1px;height:15px"></div>
<div class="abs bk" style="left:566px;top:741px;width:1px;height:15px"></div>
<div class="abs bk" style="left:623px;top:741px;width:1px;height:15px"></div>
<div class="abs bk" style="left:680px;top:741px;width:1px;height:15px"></div>
<div class="abs bk" style="left:737px;top:741px;width:1px;height:15px"></div>
<div class="abs bk" style="left:794px;top:741px;width:1px;height:15px"></div>
<div class="abs bk" style="left:851px;top:741px;width:1px;height:15px"></div>
<div class="abs bk" style="left:908px;top:741px;width:1px;height:15px"></div>
<div class="abs bk" style="left:965px;top:741px;width:1px;height:15px"></div>
<div class="abs bk" style="left:1022px;top:741px;width:1px;height:15px"></div>
<div class="abs bk" style="left:1079px;top:741px;width:1px;height:15px"></div>
<div class="abs bk" style="left:1136px;top:741px;width:1px;height:15px"></div>
<div class="abs bk" style="left:1193px;top:741px;width:1px;height:15px"></div>
<div class="abs bk" style="left:1250px;top:741px;width:1px;height:15px"></div>
<div class="abs bk" style="left:1307px;top:741px;width:1px;height:15px"></div>
<div class="abs bk" style="left:34px;top:755px;width:1274px;height:1px"></div>
<div class="abs bk" style="left:34px;top:769px;width:1274px;height:1px"></div>
<div class="abs bk" style="left:34px;top:755px;width:1px;height:15px"></div>
<div class="abs bk" style="left:129px;top:755px;width:1px;height:15px"></div>
<div class="abs bk" style="left:224px;top:755px;width:1px;height:15px"></div>
<div class="abs bk" style="left:281px;top:755px;width:1px;height:15px"></div>
<div class="abs bk" style="left:338px;top:755px;width:1px;height:15px"></div>
<div class="abs bk" style="left:395px;top:755px;width:1px;height:15px"></div>
<div class="abs bk" style="left:452px;top:755px;width:1px;height:15px"></div>
<div class="abs bk" style="left:509px;top:755px;width:1px;height:15px"></div>
<div class="abs bk" style="left:566px;top:755px;width:1px;height:15px"></div>
<div class="abs bk" style="left:623px;top:755px;width:1px;height:15px"></div>
<div class="abs bk" style="left:680px;top:755px;width:1px;height:15px"></div>
<div class="abs bk" style="left:737px;top:755px;width:1px;height:15px"></div>
<div class="abs bk" style="left:794px;top:755px;width:1px;height:15px"></div>
<div class="abs bk" style="left:851px;top:755px;width:1px;height:15px"></div>
<div class="abs bk" style="left:908px;top:755px;width:1px;height:15px"></div>
<div class="abs bk" style="left:965px;top:755px;width:1px;height:15px"></div>
<div class="abs bk" style="left:1022px;top:755px;width:1px;height:15px"></div>
<div class="abs bk" style="left:1079px;top:755px;width:1px;height:15px"></div>
<div class="abs bk" style="left:1136px;top:755px;width:1px;height:15px"></div>
<div class="abs bk" style="left:1193px;top:755px;width:1px;height:15px"></div>
<div class="abs bk" style="left:1250px;top:755px;width:1px;height:15px"></div>
<div class="abs bk" style="left:1307px;top:755px;width:1px;height:15px"></div>
<div class="abs bk" style="left:34px;top:769px;width:1274px;height:1px"></div>
<div class="abs bk" style="left:34px;top:783px;width:1274px;height:1px"></div>
<div class="abs bk" style="left:34px;top:769px;width:1px;height:15px"></div>
<div class="abs bk" style="left:129px;top:769px;width:1px;height:15px"></div>
<div class="abs bk" style="left:224px;top:769px;width:1px;height:15px"></div>
<div class="abs bk" style="left:281px;top:769px;width:1px;height:15px"></div>
<div class="abs bk" style="left:338px;top:769px;width:1px;height:15px"></div>
<div class="abs bk" style="left:395px;top:769px;width:1px;height:15px"></div>
<div class="abs bk" style="left:452px;top:769px;width:1px;height:15px"></div>
<div class="abs bk" style="left:509px;top:769px;width:1px;height:15px"></div>
<div class="abs bk" style="left:566px;top:769px;width:1px;height:15px"></div>
<div class="abs bk" style="left:623px;top:769px;width:1px;height:15px"></div>
<div class="abs bk" style="left:680px;top:769px;width:1px;height:15px"></div>
<div class="abs bk" style="left:737px;top:769px;width:1px;height:15px"></div>
<div class="abs bk" style="left:794px;top:769px;width:1px;height:15px"></div>
<div class="abs bk" style="left:851px;top:769px;width:1px;height:15px"></div>
<div class="abs bk" style="left:908px;top:769px;width:1px;height:15px"></div>
<div class="abs bk" style="left:965px;top:769px;width:1px;height:15px"></div>
<div class="abs bk" style="left:1022px;top:769px;width:1px;height:15px"></div>
<div class="abs bk" style="left:1079px;top:769px;width:1px;height:15px"></div>
<div class="abs bk" style="left:1136px;top:769px;width:1px;height:15px"></div>
<div class="abs bk" style="left:1193px;top:769px;width:1px;height:15px"></div>
<div class="abs bk" style="left:1250px;top:769px;width:1px;height:15px"></div>
<div class="abs bk" style="left:1307px;top:769px;width:1px;height:15px"></div>
<div class="abs bk" style="left:34px;top:783px;width:1274px;height:1px"></div>
<div class="abs bk" style="left:34px;top:797px;width:1274px;height:1px"></div>
<div class="abs bk" style="left:34px;top:783px;width:1px;height:15px"></div>
<div class="abs bk" style="left:129px;top:783px;width:1px;height:15px"></div>
<div class="abs bk" style="left:224px;top:783px;width:1px;height:15px"></div>
<div class="abs bk" style="left:281px;top:783px;width:1px;height:15px"></div>
<div class="abs bk" style="left:338px;top:783px;width:1px;height:15px"></div>
<div class="abs bk" style="left:395px;top:783px;width:1px;height:15px"></div>
<div class="abs bk" style="left:452px;top:783px;width:1px;height:15px"></div>
<div class="abs bk" style="left:509px;top:783px;width:1px;height:15px"></div>
<div class="abs bk" style="left:566px;top:783px;width:1px;height:15px"></div>
<div class="abs bk" style="left:623px;top:783px;width:1px;height:15px"></div>
<div class="abs bk" style="left:680px;top:783px;width:1px;height:15px"></div>
<div class="abs bk" style="left:737px;top:783px;width:1px;height:15px"></div>
<div class="abs bk" style="left:794px;top:783px;width:1px;height:15px"></div>
<div class="abs bk" style="left:851px;top:783px;width:1px;height:15px"></div>
<div class="abs bk" style="left:908px;top:783px;width:1px;height:15px"></div>
<div class="abs bk" style="left:965px;top:783px;width:1px;height:15px"></div>
<div class="abs bk" style="left:1022px;top:783px;width:1px;height:15px"></div>
<div class="abs bk" style="left:1079px;top:783px;width:1px;height:15px"></div>
<div class="abs bk" style="left:1136px;top:783px;width:1px;height:15px"></div>
<div class="abs bk" style="left:1193px;top:783px;width:1px;height:15px"></div>
<div class="abs bk" style="left:1250px;top:783px;width:1px;height:15px"></div>
<div class="abs bk" style="left:1307px;top:783px;width:1px;height:15px"></div>
<div class="abs" style="left:1308px;top:741px;width:227px;height:1px;background:#6e6e6e"></div>
<div class="abs ct sec" style="left:34.5px;top:160px;width:200px;height:15px"><span>TP <u>Informatique</u></span></div>
<div class="abs ct sec" style="left:34.5px;top:203px;width:200px;height:15px"><span><u>Maths</u></span></div>
<div class="abs ct sec" style="left:34.5px;top:428px;width:200px;height:15px"><span><u>Physique</u></span></div>
<div class="abs ct sec" style="left:34.5px;top:555px;width:200px;height:15px"><span><u>Anglais</u></span></div>
<div class="abs ct sec" style="left:34.5px;top:668px;width:200px;height:15px"><span><u>Allemand</u></span></div>
<div class="abs ct sec" style="left:34.5px;top:697px;width:200px;height:15px"><span><u>Espagnol</u></span></div>
<div class="abs ct sec" style="left:34.5px;top:726px;width:200px;height:15px"><span><u>Français</u></span></div>
<div class="abs ct l" style="left:35px;top:175px;width:94px;height:14px"><span>M. <u>Pawlowski</u></span></div>
<div class="abs ct l lb" style="left:130px;top:175px;width:94px;height:14px"><span><u>Mercredi</u> 14H-16H</span></div>
<div class="abs ct l lc" style="left:225px;top:175px;width:56px;height:14px"><span>D204</span></div>
<div class="abs ct l" style="left:35px;top:189px;width:94px;height:14px"><span>M. <u>Pawlowski</u></span></div>
<div class="abs ct l lb" style="left:130px;top:189px;width:94px;height:14px"><span><u>Mercredi</u> 16H-18H</span></div>
<div class="abs ct l lc" style="left:225px;top:189px;width:56px;height:14px"><span>D204</span></div>
<div class="abs ct l" style="left:35px;top:218px;width:94px;height:14px"><span>M. <u>Lafon</u></span></div>
<div class="abs ct l lb" style="left:130px;top:218px;width:94px;height:14px"><span><u>Lundi</u> 13H</span></div>
<div class="abs ct l lc" style="left:225px;top:218px;width:56px;height:14px"><span>I043</span></div>
<div class="abs ct l" style="left:35px;top:232px;width:94px;height:14px"><span>M. <u>Lafon</u></span></div>
<div class="abs ct l lb" style="left:130px;top:232px;width:94px;height:14px"><span><u>Lundi</u> 14H</span></div>
<div class="abs ct l lc" style="left:225px;top:232px;width:56px;height:14px"><span>I043</span></div>
<div class="abs ct l" style="left:35px;top:246px;width:94px;height:14px"><span>M. <u>Froget</u></span></div>
<div class="abs ct l lb" style="left:130px;top:246px;width:94px;height:14px"><span><u>Lundi</u> 14H</span></div>
<div class="abs ct l lc" style="left:225px;top:246px;width:56px;height:14px"><span>I241</span></div>
<div class="abs ct l" style="left:35px;top:260px;width:94px;height:14px"><span>M. <u>Froget</u></span></div>
<div class="abs ct l lb" style="left:130px;top:260px;width:94px;height:14px"><span><u>Lundi</u> 15H</span></div>
<div class="abs ct l lc" style="left:225px;top:260px;width:56px;height:14px"><span>I241</span></div>
<div class="abs ct l" style="left:35px;top:274px;width:94px;height:14px"><span>M. <u>Terrisse</u></span></div>
<div class="abs ct l lb" style="left:130px;top:274px;width:94px;height:14px"><span><u>Lundi</u> 14H</span></div>
<div class="abs ct l lc" style="left:225px;top:274px;width:56px;height:14px"><span>I042</span></div>
<div class="abs ct l" style="left:35px;top:288px;width:94px;height:14px"><span>M. <u>Terrisse</u></span></div>
<div class="abs ct l lb" style="left:130px;top:288px;width:94px;height:14px"><span><u>Lundi</u> 15H</span></div>
<div class="abs ct l lc" style="left:225px;top:288px;width:56px;height:14px"><span>I042</span></div>
<div class="abs ct l" style="left:35px;top:302px;width:94px;height:14px"><span>M. <u>Pawlowski</u></span></div>
<div class="abs ct l lb" style="left:130px;top:302px;width:94px;height:14px"><span><u>Lundi</u> 15H</span></div>
<div class="abs ct l lc" style="left:225px;top:302px;width:56px;height:14px"><span>I043</span></div>
<div class="abs ct l" style="left:35px;top:316px;width:94px;height:14px"><span>M. <u>Pawlowski</u></span></div>
<div class="abs ct l lb" style="left:130px;top:316px;width:94px;height:14px"><span><u>Lundi</u> 16H</span></div>
<div class="abs ct l lc" style="left:225px;top:316px;width:56px;height:14px"><span>I043</span></div>
<div class="abs ct l" style="left:35px;top:330px;width:94px;height:14px"><span>M. <u>Legrand</u></span></div>
<div class="abs ct l lb" style="left:130px;top:330px;width:94px;height:14px"><span><u>Lundi</u> 16H</span></div>
<div class="abs ct l lc" style="left:225px;top:330px;width:56px;height:14px"><span>I143</span></div>
<div class="abs ct l" style="left:35px;top:344px;width:94px;height:14px"><span>M. <u>Legrand</u></span></div>
<div class="abs ct l lb" style="left:130px;top:344px;width:94px;height:14px"><span><u>Mardi</u> 17H</span></div>
<div class="abs ct l lc" style="left:225px;top:344px;width:56px;height:14px"><span>I143</span></div>
<div class="abs ct l" style="left:35px;top:358px;width:94px;height:14px"><span>M. <u>Sageaux</u></span></div>
<div class="abs ct l lb" style="left:130px;top:358px;width:94px;height:14px"><span><u>Mardi</u> 17H20</span></div>
<div class="abs ct l lc" style="left:225px;top:358px;width:56px;height:14px"><span>D305</span></div>
<div class="abs ct l" style="left:35px;top:372px;width:94px;height:14px"><span>M. <u>Travers</u></span></div>
<div class="abs ct l lb" style="left:130px;top:372px;width:94px;height:14px"><span><u>Mercredi</u> 13H</span></div>
<div class="abs ct l lc" style="left:225px;top:372px;width:56px;height:14px"><span>I241</span></div>
<div class="abs ct l" style="left:35px;top:386px;width:94px;height:14px"><span>M. <u>Travers</u></span></div>
<div class="abs ct l lb" style="left:130px;top:386px;width:94px;height:14px"><span><u>Mercredi</u> 14H</span></div>
<div class="abs ct l lc" style="left:225px;top:386px;width:56px;height:14px"><span>I241</span></div>
<div class="abs ct l" style="left:35px;top:400px;width:94px;height:14px"><span>M. <u>Schiffmann</u></span></div>
<div class="abs ct l lb" style="left:130px;top:400px;width:94px;height:14px"><span><u>Mercredi</u> 14H</span></div>
<div class="abs ct l lc" style="left:225px;top:400px;width:56px;height:14px"><span>I043</span></div>
<div class="abs ct l" style="left:35px;top:414px;width:94px;height:14px"><span>M. <u>Schiffmann</u></span></div>
<div class="abs ct l lb" style="left:130px;top:414px;width:94px;height:14px"><span><u>Mercredi</u> 15H</span></div>
<div class="abs ct l lc" style="left:225px;top:414px;width:56px;height:14px"><span>I043</span></div>
<div class="abs ct l" style="left:35px;top:443px;width:94px;height:14px"><span>M. <u>Léard</u></span></div>
<div class="abs ct l lb" style="left:130px;top:443px;width:94px;height:14px"><span><u>Lundi</u> 15H</span></div>
<div class="abs ct l lc" style="left:225px;top:443px;width:56px;height:14px"><span>A341</span></div>
<div class="abs ct l" style="left:35px;top:457px;width:94px;height:14px"><span>M. <u>Léard</u></span></div>
<div class="abs ct l lb" style="left:130px;top:457px;width:94px;height:14px"><span><u>Lundi</u> 16H</span></div>
<div class="abs ct l lc" style="left:225px;top:457px;width:56px;height:14px"><span>A341</span></div>
<div class="abs ct l" style="left:35px;top:471px;width:94px;height:14px"><span><u>Mme</u> <u>Degorce</u></span></div>
<div class="abs ct l lb" style="left:130px;top:471px;width:94px;height:14px"><span><u>Mercredi</u> 13H</span></div>
<div class="abs ct l lc" style="left:225px;top:471px;width:56px;height:14px"><span>D205</span></div>
<div class="abs ct l" style="left:35px;top:485px;width:94px;height:14px"><span><u>Mme</u> <u>Degorce</u></span></div>
<div class="abs ct l lb" style="left:130px;top:485px;width:94px;height:14px"><span><u>Mercredi</u> 14H</span></div>
<div class="abs ct l lc" style="left:225px;top:485px;width:56px;height:14px"><span>D205</span></div>
<div class="abs ct l" style="left:35px;top:499px;width:94px;height:14px"><span>M. <u>Ros</u></span></div>
<div class="abs ct l lb" style="left:130px;top:499px;width:94px;height:14px"><span><u>Mercredi</u> 15H</span></div>
<div class="abs ct l lc" style="left:225px;top:499px;width:56px;height:14px"><span>A132</span></div>
<div class="abs ct l" style="left:35px;top:513px;width:94px;height:14px"><span>M. <u>Ros</u></span></div>
<div class="abs ct l lb" style="left:130px;top:513px;width:94px;height:14px"><span><u>Mercredi</u> 16H</span></div>
<div class="abs ct l lc" style="left:225px;top:513px;width:56px;height:14px"><span>A132</span></div>
<div class="abs ct l" style="left:35px;top:527px;width:94px;height:14px"><span>M. <u>Dupé</u></span></div>
<div class="abs ct l lb" style="left:130px;top:527px;width:94px;height:14px"><span><u>Mercredi</u> 16H</span></div>
<div class="abs ct l lc" style="left:225px;top:527px;width:56px;height:14px"><span>I040</span></div>
<div class="abs ct l" style="left:35px;top:541px;width:94px;height:14px"><span>M. <u>Dupé</u></span></div>
<div class="abs ct l lb" style="left:130px;top:541px;width:94px;height:14px"><span><u>Jeudi</u> 17H</span></div>
<div class="abs ct l lc" style="left:225px;top:541px;width:56px;height:14px"><span>I040</span></div>
<div class="abs ct l" style="left:35px;top:570px;width:94px;height:14px"><span><u>Mrs</u> <u>Duneau</u></span></div>
<div class="abs ct l lb" style="left:130px;top:570px;width:94px;height:14px"><span><u>Lundi</u> 13H</span></div>
<div class="abs ct l lc" style="left:225px;top:570px;width:56px;height:14px"><span>D02</span></div>
<div class="abs ct l" style="left:35px;top:584px;width:94px;height:14px"><span><u>Mr</u> <u>Dawe</u></span></div>
<div class="abs ct l lb" style="left:130px;top:584px;width:94px;height:14px"><span><u>Lundi</u> 16H</span></div>
<div class="abs ct l lc" style="left:225px;top:584px;width:56px;height:14px"><span><u>pet</u> <u>E.Jacob</u></span></div>
<div class="abs ct l" style="left:35px;top:598px;width:94px;height:14px"><span><u>Mrs</u> <u>Pasquier</u></span></div>
<div class="abs ct l lb" style="left:130px;top:598px;width:94px;height:14px"><span><u>Lundi</u> 17H</span></div>
<div class="abs ct l lc" style="left:225px;top:598px;width:56px;height:14px"><span>D302</span></div>
<div class="abs ct l" style="left:35px;top:612px;width:94px;height:14px"><span><u>Mr</u> <u>Sharma</u></span></div>
<div class="abs ct l lb" style="left:130px;top:612px;width:94px;height:14px"><span><u>Lundi</u> 18H</span></div>
<div class="abs ct l lc" style="left:225px;top:612px;width:56px;height:14px"><span><u>pet</u> <u>M.Tallet</u></span></div>
<div class="abs ct l" style="left:35px;top:626px;width:94px;height:14px"><span><u>Mrs</u> <u>Curutchet</u></span></div>
<div class="abs ct l lb" style="left:130px;top:626px;width:94px;height:14px"><span><u>Mercredi</u> 15H</span></div>
<div class="abs ct l" style="left:35px;top:640px;width:94px;height:14px"><span><u>Mr</u> <u>Rosedale</u></span></div>
<div class="abs ct l lb" style="left:130px;top:640px;width:94px;height:14px"><span><u>Mercredi</u> 17H</span></div>
<div class="abs ct l" style="left:35px;top:654px;width:94px;height:14px"><span><u>Mrs</u> <u>Hourlier</u></span></div>
<div class="abs ct l lb" style="left:130px;top:654px;width:94px;height:14px"><span><u>Vendredi</u> 16H</span></div>
<div class="abs ct l lc" style="left:225px;top:654px;width:56px;height:14px"><span><u>pet</u> <u>E.Jacob</u></span></div>
<div class="abs ct l" style="left:35px;top:683px;width:94px;height:14px"><span><u>Mme</u> <u>Gauzé</u></span></div>
<div class="abs ct l lb" style="left:130px;top:683px;width:94px;height:14px"><span><u>Vendredi</u> 15H</span></div>
<div class="abs ct l lc" style="left:225px;top:683px;width:56px;height:14px"><span>I042</span></div>
<div class="abs ct l" style="left:35px;top:712px;width:94px;height:14px"><span><u>Mme</u> <u>Bernède</u></span></div>
<div class="abs ct l lb" style="left:130px;top:712px;width:94px;height:14px"><span><u>Lundi</u> 17H</span></div>
<div class="abs ct l lc" style="left:225px;top:712px;width:56px;height:14px"><span>D101 ?</span></div>
<div class="abs ct l" style="left:35px;top:741px;width:94px;height:14px"><span>M. <u>Oriol</u></span></div>
<div class="abs ct l lb" style="left:130px;top:741px;width:94px;height:14px"><span><u>Mercredi</u> 16H30</span></div>
<div class="abs ct l lc" style="left:225px;top:741px;width:56px;height:14px"><span>A333</span></div>
<div class="abs ct l" style="left:35px;top:755px;width:94px;height:14px"><span>M. <u>Oriol</u></span></div>
<div class="abs ct l lb" style="left:130px;top:755px;width:94px;height:14px"><span><u>Mercredi</u> 17H</span></div>
<div class="abs ct l lc" style="left:225px;top:755px;width:56px;height:14px"><span>A333</span></div>
<div class="abs ct l" style="left:35px;top:769px;width:94px;height:14px"><span>M. <u>Oriol</u></span></div>
<div class="abs ct l lb" style="left:130px;top:769px;width:94px;height:14px"><span><u>Mercredi</u> 17H30</span></div>
<div class="abs ct l lc" style="left:225px;top:769px;width:56px;height:14px"><span>A333</span></div>
<div class="abs ct l" style="left:35px;top:783px;width:94px;height:14px"><span>M. <u>Oriol</u></span></div>
<div class="abs ct l lb" style="left:130px;top:783px;width:94px;height:14px"><span><u>Mercredi</u> 18H</span></div>
<div class="abs ct l lc" style="left:225px;top:783px;width:56px;height:14px"><span>A333</span></div>
<div class="abs ct n" style="left:339px;top:218px;width:56px;height:14px"><span>4</span></div>
<div class="abs ct n" style="left:396px;top:218px;width:56px;height:14px"><span>12</span></div>
<div class="abs ct n" style="left:453px;top:218px;width:56px;height:14px"><span>9</span></div>
<div class="abs ct n" style="left:510px;top:218px;width:56px;height:14px"><span>15</span></div>
<div class="abs ct n" style="left:567px;top:218px;width:56px;height:14px"><span>2</span></div>
<div class="abs ct n" style="left:681px;top:218px;width:56px;height:14px"><span>5</span></div>
<div class="abs ct n" style="left:738px;top:218px;width:56px;height:14px"><span>8</span></div>
<div class="abs ct n" style="left:795px;top:218px;width:56px;height:14px"><span>13</span></div>
<div class="abs ct n" style="left:852px;top:218px;width:56px;height:14px"><span>10</span></div>
<div class="abs ct n" style="left:909px;top:218px;width:56px;height:14px"><span>15</span></div>
<div class="abs ct n" style="left:966px;top:218px;width:56px;height:14px"><span>4</span></div>
<div class="abs ct n" style="left:1080px;top:218px;width:56px;height:14px"><span>1</span></div>
<div class="abs ct n" style="left:1137px;top:218px;width:56px;height:14px"><span>3</span></div>
<div class="abs ct n" style="left:1194px;top:218px;width:56px;height:14px"><span>11</span></div>
<div class="abs ct n" style="left:1251px;top:218px;width:56px;height:14px"><span>7</span></div>
<div class="abs ct n" style="left:339px;top:232px;width:56px;height:14px"><span>8</span></div>
<div class="abs ct n" style="left:396px;top:232px;width:56px;height:14px"><span>6</span></div>
<div class="abs ct n" style="left:453px;top:232px;width:56px;height:14px"><span>10</span></div>
<div class="abs ct n" style="left:510px;top:232px;width:56px;height:14px"><span>11</span></div>
<div class="abs ct n" style="left:567px;top:232px;width:56px;height:14px"><span>3</span></div>
<div class="abs ct n" style="left:681px;top:232px;width:56px;height:14px"><span>1</span></div>
<div class="abs ct n" style="left:738px;top:232px;width:56px;height:14px"><span>7</span></div>
<div class="abs ct n" style="left:795px;top:232px;width:56px;height:14px"><span>14</span></div>
<div class="abs ct n" style="left:852px;top:232px;width:56px;height:14px"><span>12</span></div>
<div class="abs ct n" style="left:909px;top:232px;width:56px;height:14px"><span>9</span></div>
<div class="abs ct n" style="left:966px;top:232px;width:56px;height:14px"><span>1</span></div>
<div class="abs ct n" style="left:1080px;top:232px;width:56px;height:14px"><span>13</span></div>
<div class="abs ct n" style="left:1137px;top:232px;width:56px;height:14px"><span>2</span></div>
<div class="abs ct n" style="left:1194px;top:232px;width:56px;height:14px"><span>14</span></div>
<div class="abs ct n" style="left:1251px;top:232px;width:56px;height:14px"><span>5</span></div>
<div class="abs ct n" style="left:339px;top:246px;width:56px;height:14px"><span>1</span></div>
<div class="abs ct n" style="left:396px;top:246px;width:56px;height:14px"><span>14</span></div>
<div class="abs ct n" style="left:453px;top:246px;width:56px;height:14px"><span>4</span></div>
<div class="abs ct n" style="left:510px;top:246px;width:56px;height:14px"><span>6</span></div>
<div class="abs ct n" style="left:567px;top:246px;width:56px;height:14px"><span>12</span></div>
<div class="abs ct n" style="left:681px;top:246px;width:56px;height:14px"><span>13</span></div>
<div class="abs ct n" style="left:738px;top:246px;width:56px;height:14px"><span>2</span></div>
<div class="abs ct n" style="left:795px;top:246px;width:56px;height:14px"><span>3</span></div>
<div class="abs ct n" style="left:852px;top:246px;width:56px;height:14px"><span>5</span></div>
<div class="abs ct n" style="left:909px;top:246px;width:56px;height:14px"><span>8</span></div>
<div class="abs ct n" style="left:966px;top:246px;width:56px;height:14px"><span>11</span></div>
<div class="abs ct n" style="left:1080px;top:246px;width:56px;height:14px"><span>9</span></div>
<div class="abs ct n" style="left:1137px;top:246px;width:56px;height:14px"><span>10</span></div>
<div class="abs ct n" style="left:1194px;top:246px;width:56px;height:14px"><span>13</span></div>
<div class="abs ct n" style="left:1251px;top:246px;width:56px;height:14px"><span>11</span></div>
<div class="abs ct n" style="left:339px;top:260px;width:56px;height:14px"><span>5</span></div>
<div class="abs ct n" style="left:396px;top:260px;width:56px;height:14px"><span>3</span></div>
<div class="abs ct n" style="left:453px;top:260px;width:56px;height:14px"><span>8</span></div>
<div class="abs ct n" style="left:510px;top:260px;width:56px;height:14px"><span>7</span></div>
<div class="abs ct n" style="left:567px;top:260px;width:56px;height:14px"><span>6</span></div>
<div class="abs ct n" style="left:681px;top:260px;width:56px;height:14px"><span>11</span></div>
<div class="abs ct n" style="left:738px;top:260px;width:56px;height:14px"><span>10</span></div>
<div class="abs ct n" style="left:795px;top:260px;width:56px;height:14px"><span>1</span></div>
<div class="abs ct n" style="left:852px;top:260px;width:56px;height:14px"><span>15</span></div>
<div class="abs ct n" style="left:909px;top:260px;width:56px;height:14px"><span>14</span></div>
<div class="abs ct n" style="left:966px;top:260px;width:56px;height:14px"><span>7</span></div>
<div class="abs ct n" style="left:1080px;top:260px;width:56px;height:14px"><span>12</span></div>
<div class="abs ct n" style="left:1137px;top:260px;width:56px;height:14px"><span>6</span></div>
<div class="abs ct n" style="left:1194px;top:260px;width:56px;height:14px"><span>2</span></div>
<div class="abs ct n" style="left:1251px;top:260px;width:56px;height:14px"><span>9</span></div>
<div class="abs ct n" style="left:339px;top:274px;width:56px;height:14px"><span>9</span></div>
<div class="abs ct n" style="left:396px;top:274px;width:56px;height:14px"><span>7</span></div>
<div class="abs ct n" style="left:453px;top:274px;width:56px;height:14px"><span>1</span></div>
<div class="abs ct n" style="left:510px;top:274px;width:56px;height:14px"><span>12</span></div>
<div class="abs ct n" style="left:567px;top:274px;width:56px;height:14px"><span>15</span></div>
<div class="abs ct n" style="left:681px;top:274px;width:56px;height:14px"><span>6</span></div>
<div class="abs ct n" style="left:738px;top:274px;width:56px;height:14px"><span>3</span></div>
<div class="abs ct n" style="left:795px;top:274px;width:56px;height:14px"><span>11</span></div>
<div class="abs ct n" style="left:852px;top:274px;width:56px;height:14px"><span>9</span></div>
<div class="abs ct n" style="left:909px;top:274px;width:56px;height:14px"><span>2</span></div>
<div class="abs ct n" style="left:966px;top:274px;width:56px;height:14px"><span>12</span></div>
<div class="abs ct n" style="left:1080px;top:274px;width:56px;height:14px"><span>11</span></div>
<div class="abs ct n" style="left:1137px;top:274px;width:56px;height:14px"><span>4</span></div>
<div class="abs ct n" style="left:1194px;top:274px;width:56px;height:14px"><span>9</span></div>
<div class="abs ct n" style="left:1251px;top:274px;width:56px;height:14px"><span>8</span></div>
<div class="abs ct n" style="left:339px;top:288px;width:56px;height:14px"><span>2</span></div>
<div class="abs ct n" style="left:396px;top:288px;width:56px;height:14px"><span>10</span></div>
<div class="abs ct n" style="left:453px;top:288px;width:56px;height:14px"><span>13</span></div>
<div class="abs ct n" style="left:510px;top:288px;width:56px;height:14px"><span>8</span></div>
<div class="abs ct n" style="left:567px;top:288px;width:56px;height:14px"><span>5</span></div>
<div class="abs ct n" style="left:681px;top:288px;width:56px;height:14px"><span>14</span></div>
<div class="abs ct n" style="left:738px;top:288px;width:56px;height:14px"><span>4</span></div>
<div class="abs ct n" style="left:795px;top:288px;width:56px;height:14px"><span>8</span></div>
<div class="abs ct n" style="left:852px;top:288px;width:56px;height:14px"><span>13</span></div>
<div class="abs ct n" style="left:909px;top:288px;width:56px;height:14px"><span>10</span></div>
<div class="abs ct n" style="left:966px;top:288px;width:56px;height:14px"><span>5</span></div>
<div class="abs ct n" style="left:1080px;top:288px;width:56px;height:14px"><span>7</span></div>
<div class="abs ct n" style="left:1137px;top:288px;width:56px;height:14px"><span>15</span></div>
<div class="abs ct n" style="left:1194px;top:288px;width:56px;height:14px"><span>3</span></div>
<div class="abs ct n" style="left:1251px;top:288px;width:56px;height:14px"><span>6</span></div>
<div class="abs ct n" style="left:339px;top:302px;width:56px;height:14px"><span>6</span></div>
<div class="abs ct n" style="left:396px;top:302px;width:56px;height:14px"><span>4</span></div>
<div class="abs ct n" style="left:453px;top:302px;width:56px;height:14px"><span>7</span></div>
<div class="abs ct n" style="left:510px;top:302px;width:56px;height:14px"><span>10</span></div>
<div class="abs ct n" style="left:567px;top:302px;width:56px;height:14px"><span>13</span></div>
<div class="abs ct n" style="left:681px;top:302px;width:56px;height:14px"><span>15</span></div>
<div class="abs ct n" style="left:738px;top:302px;width:56px;height:14px"><span>1</span></div>
<div class="abs ct n" style="left:795px;top:302px;width:56px;height:14px"><span>6</span></div>
<div class="abs ct n" style="left:852px;top:302px;width:56px;height:14px"><span>14</span></div>
<div class="abs ct n" style="left:909px;top:302px;width:56px;height:14px"><span>11</span></div>
<div class="abs ct n" style="left:966px;top:302px;width:56px;height:14px"><span>2</span></div>
<div class="abs ct n" style="left:1080px;top:302px;width:56px;height:14px"><span>8</span></div>
<div class="abs ct n" style="left:1137px;top:302px;width:56px;height:14px"><span>7</span></div>
<div class="abs ct n" style="left:1194px;top:302px;width:56px;height:14px"><span>4</span></div>
<div class="abs ct n" style="left:1251px;top:302px;width:56px;height:14px"><span>12</span></div>
<div class="abs ct n" style="left:339px;top:316px;width:56px;height:14px"><span>15</span></div>
<div class="abs ct n" style="left:396px;top:316px;width:56px;height:14px"><span>9</span></div>
<div class="abs ct n" style="left:453px;top:316px;width:56px;height:14px"><span>2</span></div>
<div class="abs ct n" style="left:510px;top:316px;width:56px;height:14px"><span>3</span></div>
<div class="abs ct n" style="left:567px;top:316px;width:56px;height:14px"><span>11</span></div>
<div class="abs ct n" style="left:681px;top:316px;width:56px;height:14px"><span>12</span></div>
<div class="abs ct n" style="left:738px;top:316px;width:56px;height:14px"><span>9</span></div>
<div class="abs ct n" style="left:795px;top:316px;width:56px;height:14px"><span>4</span></div>
<div class="abs ct n" style="left:852px;top:316px;width:56px;height:14px"><span>6</span></div>
<div class="abs ct n" style="left:909px;top:316px;width:56px;height:14px"><span>5</span></div>
<div class="abs ct n" style="left:966px;top:316px;width:56px;height:14px"><span>3</span></div>
<div class="abs ct n" style="left:1080px;top:316px;width:56px;height:14px"><span>14</span></div>
<div class="abs ct n" style="left:1137px;top:316px;width:56px;height:14px"><span>1</span></div>
<div class="abs ct n" style="left:1194px;top:316px;width:56px;height:14px"><span>10</span></div>
<div class="abs ct n" style="left:1251px;top:316px;width:56px;height:14px"><span>13</span></div>
<div class="abs ct n" style="left:339px;top:330px;width:56px;height:14px"><span>3</span></div>
<div class="abs ct n" style="left:396px;top:330px;width:56px;height:14px"><span>11</span></div>
<div class="abs ct n" style="left:453px;top:330px;width:56px;height:14px"><span>6</span></div>
<div class="abs ct n" style="left:510px;top:330px;width:56px;height:14px"><span>9</span></div>
<div class="abs ct n" style="left:567px;top:330px;width:56px;height:14px"><span>1</span></div>
<div class="abs ct n" style="left:681px;top:330px;width:56px;height:14px"><span>9</span></div>
<div class="abs ct n" style="left:738px;top:330px;width:56px;height:14px"><span>15</span></div>
<div class="abs ct n" style="left:795px;top:330px;width:56px;height:14px"><span>2</span></div>
<div class="abs ct n" style="left:852px;top:330px;width:56px;height:14px"><span>3</span></div>
<div class="abs ct n" style="left:909px;top:330px;width:56px;height:14px"><span>7</span></div>
<div class="abs ct n" style="left:966px;top:330px;width:56px;height:14px"><span>14</span></div>
<div class="abs ct n" style="left:1080px;top:330px;width:56px;height:14px"><span>15</span></div>
<div class="abs ct n" style="left:1137px;top:330px;width:56px;height:14px"><span>9</span></div>
<div class="abs ct n" style="left:1194px;top:330px;width:56px;height:14px"><span>12</span></div>
<div class="abs ct n" style="left:1251px;top:330px;width:56px;height:14px"><span>15</span></div>
<div class="abs ct n" style="left:339px;top:344px;width:56px;height:14px"><span>7</span></div>
<div class="abs ct n" style="left:396px;top:344px;width:56px;height:14px"><span>8</span></div>
<div class="abs ct n" style="left:453px;top:344px;width:56px;height:14px"><span>5</span></div>
<div class="abs ct n" style="left:510px;top:344px;width:56px;height:14px"><span>14</span></div>
<div class="abs ct n" style="left:567px;top:344px;width:56px;height:14px"><span>4</span></div>
<div class="abs ct n" style="left:681px;top:344px;width:56px;height:14px"><span>10</span></div>
<div class="abs ct n" style="left:738px;top:344px;width:56px;height:14px"><span>6</span></div>
<div class="abs ct n" style="left:795px;top:344px;width:56px;height:14px"><span>12</span></div>
<div class="abs ct n" style="left:852px;top:344px;width:56px;height:14px"><span>11</span></div>
<div class="abs ct n" style="left:909px;top:344px;width:56px;height:14px"><span>1</span></div>
<div class="abs ct n" style="left:966px;top:344px;width:56px;height:14px"><span>13</span></div>
<div class="abs ct n" style="left:1080px;top:344px;width:56px;height:14px"><span>10</span></div>
<div class="abs ct n" style="left:1137px;top:344px;width:56px;height:14px"><span>8</span></div>
<div class="abs ct n" style="left:1194px;top:344px;width:56px;height:14px"><span>5</span></div>
<div class="abs ct n" style="left:1251px;top:344px;width:56px;height:14px"><span>14</span></div>
<div class="abs ct n" style="left:339px;top:358px;width:56px;height:14px"><span>10</span></div>
<div class="abs ct n" style="left:396px;top:358px;width:56px;height:14px"><span>13</span></div>
<div class="abs ct n" style="left:453px;top:358px;width:56px;height:14px"><span>3</span></div>
<div class="abs ct n" style="left:510px;top:358px;width:56px;height:14px"><span>4</span></div>
<div class="abs ct n" style="left:567px;top:358px;width:56px;height:14px"><span>14</span></div>
<div class="abs ct n" style="left:681px;top:358px;width:56px;height:14px"><span>2</span></div>
<div class="abs ct n" style="left:738px;top:358px;width:56px;height:14px"><span>5</span></div>
<div class="abs ct n" style="left:795px;top:358px;width:56px;height:14px"><span>7</span></div>
<div class="abs ct n" style="left:852px;top:358px;width:56px;height:14px"><span>4</span></div>
<div class="abs ct n" style="left:909px;top:358px;width:56px;height:14px"><span>12</span></div>
<div class="abs ct n" style="left:966px;top:358px;width:56px;height:14px"><span>8</span></div>
<div class="abs ct n" style="left:1080px;top:358px;width:56px;height:14px"><span>2</span></div>
<div class="abs ct n" style="left:1137px;top:358px;width:56px;height:14px"><span>5</span></div>
<div class="abs ct n" style="left:1194px;top:358px;width:56px;height:14px"><span>1</span></div>
<div class="abs ct n" style="left:1251px;top:358px;width:56px;height:14px"><span>10</span></div>
<div class="abs ct n" style="left:339px;top:372px;width:56px;height:14px"><span>11</span></div>
<div class="abs ct n" style="left:396px;top:372px;width:56px;height:14px"><span>2</span></div>
<div class="abs ct n" style="left:453px;top:372px;width:56px;height:14px"><span>14</span></div>
<div class="abs ct n" style="left:510px;top:372px;width:56px;height:14px"><span>13</span></div>
<div class="abs ct n" style="left:567px;top:372px;width:56px;height:14px"><span>7</span></div>
<div class="abs ct n" style="left:681px;top:372px;width:56px;height:14px"><span>4</span></div>
<div class="abs ct n" style="left:738px;top:372px;width:56px;height:14px"><span>12</span></div>
<div class="abs ct n" style="left:795px;top:372px;width:56px;height:14px"><span>5</span></div>
<div class="abs ct n" style="left:852px;top:372px;width:56px;height:14px"><span>1</span></div>
<div class="abs ct n" style="left:909px;top:372px;width:56px;height:14px"><span>6</span></div>
<div class="abs ct n" style="left:966px;top:372px;width:56px;height:14px"><span>10</span></div>
<div class="abs ct n" style="left:1080px;top:372px;width:56px;height:14px"><span>6</span></div>
<div class="abs ct n" style="left:1137px;top:372px;width:56px;height:14px"><span>13</span></div>
<div class="abs ct n" style="left:1194px;top:372px;width:56px;height:14px"><span>8</span></div>
<div class="abs ct n" style="left:1251px;top:372px;width:56px;height:14px"><span>3</span></div>
<div class="abs ct n" style="left:339px;top:386px;width:56px;height:14px"><span>12</span></div>
<div class="abs ct n" style="left:396px;top:386px;width:56px;height:14px"><span>1</span></div>
<div class="abs ct n" style="left:453px;top:386px;width:56px;height:14px"><span>15</span></div>
<div class="abs ct n" style="left:510px;top:386px;width:56px;height:14px"><span>5</span></div>
<div class="abs ct n" style="left:567px;top:386px;width:56px;height:14px"><span>8</span></div>
<div class="abs ct n" style="left:681px;top:386px;width:56px;height:14px"><span>3</span></div>
<div class="abs ct n" style="left:738px;top:386px;width:56px;height:14px"><span>11</span></div>
<div class="abs ct n" style="left:795px;top:386px;width:56px;height:14px"><span>15</span></div>
<div class="abs ct n" style="left:852px;top:386px;width:56px;height:14px"><span>2</span></div>
<div class="abs ct n" style="left:909px;top:386px;width:56px;height:14px"><span>13</span></div>
<div class="abs ct n" style="left:966px;top:386px;width:56px;height:14px"><span>9</span></div>
<div class="abs ct n" style="left:1080px;top:386px;width:56px;height:14px"><span>5</span></div>
<div class="abs ct n" style="left:1137px;top:386px;width:56px;height:14px"><span>14</span></div>
<div class="abs ct n" style="left:1194px;top:386px;width:56px;height:14px"><span>7</span></div>
<div class="abs ct n" style="left:1251px;top:386px;width:56px;height:14px"><span>4</span></div>
<div class="abs ct n" style="left:339px;top:400px;width:56px;height:14px"><span>13</span></div>
<div class="abs ct n" style="left:396px;top:400px;width:56px;height:14px"><span>5</span></div>
<div class="abs ct n" style="left:453px;top:400px;width:56px;height:14px"><span>11</span></div>
<div class="abs ct n" style="left:510px;top:400px;width:56px;height:14px"><span>2</span></div>
<div class="abs ct n" style="left:567px;top:400px;width:56px;height:14px"><span>9</span></div>
<div class="abs ct n" style="left:681px;top:400px;width:56px;height:14px"><span>8</span></div>
<div class="abs ct n" style="left:738px;top:400px;width:56px;height:14px"><span>14</span></div>
<div class="abs ct n" style="left:795px;top:400px;width:56px;height:14px"><span>10</span></div>
<div class="abs ct n" style="left:852px;top:400px;width:56px;height:14px"><span>7</span></div>
<div class="abs ct n" style="left:909px;top:400px;width:56px;height:14px"><span>3</span></div>
<div class="abs ct n" style="left:966px;top:400px;width:56px;height:14px"><span>6</span></div>
<div class="abs ct n" style="left:1080px;top:400px;width:56px;height:14px"><span>4</span></div>
<div class="abs ct n" style="left:1137px;top:400px;width:56px;height:14px"><span>12</span></div>
<div class="abs ct n" style="left:1194px;top:400px;width:56px;height:14px"><span>15</span></div>
<div class="abs ct n" style="left:1251px;top:400px;width:56px;height:14px"><span>1</span></div>
<div class="abs ct n" style="left:339px;top:414px;width:56px;height:14px"><span>14</span></div>
<div class="abs ct n" style="left:396px;top:414px;width:56px;height:14px"><span>15</span></div>
<div class="abs ct n" style="left:453px;top:414px;width:56px;height:14px"><span>12</span></div>
<div class="abs ct n" style="left:510px;top:414px;width:56px;height:14px"><span>1</span></div>
<div class="abs ct n" style="left:567px;top:414px;width:56px;height:14px"><span>10</span></div>
<div class="abs ct n" style="left:681px;top:414px;width:56px;height:14px"><span>7</span></div>
<div class="abs ct n" style="left:738px;top:414px;width:56px;height:14px"><span>13</span></div>
<div class="abs ct n" style="left:795px;top:414px;width:56px;height:14px"><span>9</span></div>
<div class="abs ct n" style="left:852px;top:414px;width:56px;height:14px"><span>8</span></div>
<div class="abs ct n" style="left:909px;top:414px;width:56px;height:14px"><span>4</span></div>
<div class="abs ct n" style="left:966px;top:414px;width:56px;height:14px"><span>15</span></div>
<div class="abs ct n" style="left:1080px;top:414px;width:56px;height:14px"><span>3</span></div>
<div class="abs ct n" style="left:1137px;top:414px;width:56px;height:14px"><span>11</span></div>
<div class="abs ct n" style="left:1194px;top:414px;width:56px;height:14px"><span>6</span></div>
<div class="abs ct n" style="left:1251px;top:414px;width:56px;height:14px"><span>2</span></div>
<div class="abs ct n" style="left:339px;top:443px;width:56px;height:14px"><span>12</span></div>
<div class="abs ct n" style="left:396px;top:443px;width:56px;height:14px"><span>15</span></div>
<div class="abs ct n" style="left:453px;top:443px;width:56px;height:14px"><span>6</span></div>
<div class="abs ct n" style="left:510px;top:443px;width:56px;height:14px"><span>3</span></div>
<div class="abs ct n" style="left:567px;top:443px;width:56px;height:14px"><span>10</span></div>
<div class="abs ct n" style="left:681px;top:443px;width:56px;height:14px"><span>1</span></div>
<div class="abs ct n" style="left:738px;top:443px;width:56px;height:14px"><span>14</span></div>
<div class="abs ct n" style="left:795px;top:443px;width:56px;height:14px"><span>5</span></div>
<div class="abs ct n" style="left:852px;top:443px;width:56px;height:14px"><span>6</span></div>
<div class="abs ct n" style="left:909px;top:443px;width:56px;height:14px"><span>7</span></div>
<div class="abs ct n" style="left:966px;top:443px;width:56px;height:14px"><span>8</span></div>
<div class="abs ct n" style="left:1080px;top:443px;width:56px;height:14px"><span>15</span></div>
<div class="abs ct n" style="left:1137px;top:443px;width:56px;height:14px"><span>4</span></div>
<div class="abs ct n" style="left:1194px;top:443px;width:56px;height:14px"><span>1</span></div>
<div class="abs ct n" style="left:1251px;top:443px;width:56px;height:14px"><span>10</span></div>
<div class="abs ct n" style="left:339px;top:457px;width:56px;height:14px"><span>14</span></div>
<div class="abs ct n" style="left:396px;top:457px;width:56px;height:14px"><span>7</span></div>
<div class="abs ct n" style="left:453px;top:457px;width:56px;height:14px"><span>8</span></div>
<div class="abs ct n" style="left:510px;top:457px;width:56px;height:14px"><span>11</span></div>
<div class="abs ct n" style="left:567px;top:457px;width:56px;height:14px"><span>2</span></div>
<div class="abs ct n" style="left:681px;top:457px;width:56px;height:14px"><span>13</span></div>
<div class="abs ct n" style="left:738px;top:457px;width:56px;height:14px"><span>4</span></div>
<div class="abs ct n" style="left:795px;top:457px;width:56px;height:14px"><span>7</span></div>
<div class="abs ct n" style="left:852px;top:457px;width:56px;height:14px"><span>8</span></div>
<div class="abs ct n" style="left:909px;top:457px;width:56px;height:14px"><span>9</span></div>
<div class="abs ct n" style="left:966px;top:457px;width:56px;height:14px"><span>12</span></div>
<div class="abs ct n" style="left:1080px;top:457px;width:56px;height:14px"><span>11</span></div>
<div class="abs ct n" style="left:1137px;top:457px;width:56px;height:14px"><span>14</span></div>
<div class="abs ct n" style="left:1194px;top:457px;width:56px;height:14px"><span>3</span></div>
<div class="abs ct n" style="left:1251px;top:457px;width:56px;height:14px"><span>2</span></div>
<div class="abs ct n" style="left:339px;top:471px;width:56px;height:14px"><span>8</span></div>
<div class="abs ct n" style="left:396px;top:471px;width:56px;height:14px"><span>3</span></div>
<div class="abs ct n" style="left:453px;top:471px;width:56px;height:14px"><span>12</span></div>
<div class="abs ct n" style="left:510px;top:471px;width:56px;height:14px"><span>9</span></div>
<div class="abs ct n" style="left:567px;top:471px;width:56px;height:14px"><span>14</span></div>
<div class="abs ct n" style="left:681px;top:471px;width:56px;height:14px"><span>5</span></div>
<div class="abs ct n" style="left:738px;top:471px;width:56px;height:14px"><span>10</span></div>
<div class="abs ct n" style="left:795px;top:471px;width:56px;height:14px"><span>15</span></div>
<div class="abs ct n" style="left:852px;top:471px;width:56px;height:14px"><span>2</span></div>
<div class="abs ct n" style="left:909px;top:471px;width:56px;height:14px"><span>3</span></div>
<div class="abs ct n" style="left:966px;top:471px;width:56px;height:14px"><span>4</span></div>
<div class="abs ct n" style="left:1080px;top:471px;width:56px;height:14px"><span>9</span></div>
<div class="abs ct n" style="left:1137px;top:471px;width:56px;height:14px"><span>8</span></div>
<div class="abs ct n" style="left:1194px;top:471px;width:56px;height:14px"><span>7</span></div>
<div class="abs ct n" style="left:1251px;top:471px;width:56px;height:14px"><span>14</span></div>
<div class="abs ct n" style="left:339px;top:485px;width:56px;height:14px"><span>2</span></div>
<div class="abs ct n" style="left:396px;top:485px;width:56px;height:14px"><span>11</span></div>
<div class="abs ct n" style="left:453px;top:485px;width:56px;height:14px"><span>10</span></div>
<div class="abs ct n" style="left:510px;top:485px;width:56px;height:14px"><span>1</span></div>
<div class="abs ct n" style="left:567px;top:485px;width:56px;height:14px"><span>6</span></div>
<div class="abs ct n" style="left:681px;top:485px;width:56px;height:14px"><span>7</span></div>
<div class="abs ct n" style="left:738px;top:485px;width:56px;height:14px"><span>12</span></div>
<div class="abs ct n" style="left:795px;top:485px;width:56px;height:14px"><span>13</span></div>
<div class="abs ct n" style="left:852px;top:485px;width:56px;height:14px"><span>4</span></div>
<div class="abs ct n" style="left:909px;top:485px;width:56px;height:14px"><span>11</span></div>
<div class="abs ct n" style="left:966px;top:485px;width:56px;height:14px"><span>10</span></div>
<div class="abs ct n" style="left:1080px;top:485px;width:56px;height:14px"><span>1</span></div>
<div class="abs ct n" style="left:1137px;top:485px;width:56px;height:14px"><span>2</span></div>
<div class="abs ct n" style="left:1194px;top:485px;width:56px;height:14px"><span>13</span></div>
<div class="abs ct n" style="left:1251px;top:485px;width:56px;height:14px"><span>6</span></div>
<div class="abs ct n" style="left:339px;top:499px;width:56px;height:14px"><span>4</span></div>
<div class="abs ct n" style="left:396px;top:499px;width:56px;height:14px"><span>13</span></div>
<div class="abs ct n" style="left:453px;top:499px;width:56px;height:14px"><span>14</span></div>
<div class="abs ct n" style="left:510px;top:499px;width:56px;height:14px"><span>13</span></div>
<div class="abs ct n" style="left:567px;top:499px;width:56px;height:14px"><span>8</span></div>
<div class="abs ct n" style="left:681px;top:499px;width:56px;height:14px"><span>3</span></div>
<div class="abs ct n" style="left:738px;top:499px;width:56px;height:14px"><span>2</span></div>
<div class="abs ct n" style="left:795px;top:499px;width:56px;height:14px"><span>11</span></div>
<div class="abs ct n" style="left:852px;top:499px;width:56px;height:14px"><span>10</span></div>
<div class="abs ct n" style="left:909px;top:499px;width:56px;height:14px"><span>1</span></div>
<div class="abs ct n" style="left:966px;top:499px;width:56px;height:14px"><span>6</span></div>
<div class="abs ct n" style="left:1080px;top:499px;width:56px;height:14px"><span>5</span></div>
<div class="abs ct n" style="left:1137px;top:499px;width:56px;height:14px"><span>12</span></div>
<div class="abs ct n" style="left:1194px;top:499px;width:56px;height:14px"><span>11</span></div>
<div class="abs ct n" style="left:1251px;top:499px;width:56px;height:14px"><span>4</span></div>
<div class="abs ct n" style="left:339px;top:513px;width:56px;height:14px"><span>10</span></div>
<div class="abs ct n" style="left:396px;top:513px;width:56px;height:14px"><span>1</span></div>
<div class="abs ct n" style="left:453px;top:513px;width:56px;height:14px"><span>2</span></div>
<div class="abs ct n" style="left:510px;top:513px;width:56px;height:14px"><span>5</span></div>
<div class="abs ct n" style="left:567px;top:513px;width:56px;height:14px"><span>4</span></div>
<div class="abs ct n" style="left:681px;top:513px;width:56px;height:14px"><span>15</span></div>
<div class="abs ct n" style="left:738px;top:513px;width:56px;height:14px"><span>6</span></div>
<div class="abs ct n" style="left:795px;top:513px;width:56px;height:14px"><span>9</span></div>
<div class="abs ct n" style="left:852px;top:513px;width:56px;height:14px"><span>12</span></div>
<div class="abs ct n" style="left:909px;top:513px;width:56px;height:14px"><span>13</span></div>
<div class="abs ct n" style="left:966px;top:513px;width:56px;height:14px"><span>14</span></div>
<div class="abs ct n" style="left:1080px;top:513px;width:56px;height:14px"><span>3</span></div>
<div class="abs ct n" style="left:1137px;top:513px;width:56px;height:14px"><span>6</span></div>
<div class="abs ct n" style="left:1194px;top:513px;width:56px;height:14px"><span>15</span></div>
<div class="abs ct n" style="left:1251px;top:513px;width:56px;height:14px"><span>8</span></div>
<div class="abs ct n" style="left:339px;top:527px;width:56px;height:14px"><span>6</span></div>
<div class="abs ct n" style="left:396px;top:527px;width:56px;height:14px"><span>5</span></div>
<div class="abs ct n" style="left:453px;top:527px;width:56px;height:14px"><span>4</span></div>
<div class="abs ct n" style="left:510px;top:527px;width:56px;height:14px"><span>7</span></div>
<div class="abs ct n" style="left:567px;top:527px;width:56px;height:14px"><span>12</span></div>
<div class="abs ct n" style="left:681px;top:527px;width:56px;height:14px"><span>9</span></div>
<div class="abs ct n" style="left:738px;top:527px;width:56px;height:14px"><span>8</span></div>
<div class="abs ct n" style="left:795px;top:527px;width:56px;height:14px"><span>1</span></div>
<div class="abs ct n" style="left:852px;top:527px;width:56px;height:14px"><span>14</span></div>
<div class="abs ct n" style="left:909px;top:527px;width:56px;height:14px"><span>5</span></div>
<div class="abs ct n" style="left:966px;top:527px;width:56px;height:14px"><span>2</span></div>
<div class="abs ct n" style="left:1080px;top:527px;width:56px;height:14px"><span>13</span></div>
<div class="abs ct n" style="left:1137px;top:527px;width:56px;height:14px"><span>10</span></div>
<div class="abs ct n" style="left:1194px;top:527px;width:56px;height:14px"><span>5</span></div>
<div class="abs ct n" style="left:1251px;top:527px;width:56px;height:14px"><span>12</span></div>
<div class="abs ct n" style="left:396px;top:541px;width:56px;height:14px"><span>9</span></div>
<div class="abs ct n" style="left:510px;top:541px;width:56px;height:14px"><span>15</span></div>
<div class="abs ct n" style="left:681px;top:541px;width:56px;height:14px"><span>11</span></div>
<div class="abs ct n" style="left:795px;top:541px;width:56px;height:14px"><span>3</span></div>
<div class="abs ct n" style="left:909px;top:541px;width:56px;height:14px"><span>15</span></div>
<div class="abs ct n" style="left:1080px;top:541px;width:56px;height:14px"><span>7</span></div>
<div class="abs ct n" style="left:1194px;top:541px;width:56px;height:14px"><span>9</span></div>
<div class="abs ct n" style="left:339px;top:570px;width:56px;height:14px"><span>7</span></div>
<div class="abs ct n" style="left:396px;top:570px;width:56px;height:14px"><span>8</span></div>
<div class="abs ct n" style="left:453px;top:570px;width:56px;height:14px"><span>5</span></div>
<div class="abs ct n" style="left:510px;top:570px;width:56px;height:14px"><span>4</span></div>
<div class="abs ct n" style="left:567px;top:570px;width:56px;height:14px"><span>1</span></div>
<div class="abs ct n" style="left:681px;top:570px;width:56px;height:14px"><span>2</span></div>
<div class="abs ct n" style="left:738px;top:570px;width:56px;height:14px"><span>13</span></div>
<div class="abs ct n" style="left:795px;top:570px;width:56px;height:14px"><span>8</span></div>
<div class="abs ct n" style="left:852px;top:570px;width:56px;height:14px"><span>9</span></div>
<div class="abs ct n" style="left:909px;top:570px;width:56px;height:14px"><span>6</span></div>
<div class="abs ct n" style="left:966px;top:570px;width:56px;height:14px"><span>11</span></div>
<div class="abs ct n" style="left:1080px;top:570px;width:56px;height:14px"><span>10</span></div>
<div class="abs ct n" style="left:1137px;top:570px;width:56px;height:14px"><span>5</span></div>
<div class="abs ct n" style="left:1194px;top:570px;width:56px;height:14px"><span>6</span></div>
<div class="abs ct n" style="left:1251px;top:570px;width:56px;height:14px"><span>1</span></div>
<div class="abs ct n" style="left:339px;top:584px;width:56px;height:14px"><span>5</span></div>
<div class="abs ct n" style="left:396px;top:584px;width:56px;height:14px"><span>12</span></div>
<div class="abs ct n" style="left:453px;top:584px;width:56px;height:14px"><span>3</span></div>
<div class="abs ct n" style="left:510px;top:584px;width:56px;height:14px"><span>14</span></div>
<div class="abs ct n" style="left:567px;top:584px;width:56px;height:14px"><span>9</span></div>
<div class="abs ct n" style="left:681px;top:584px;width:56px;height:14px"><span>8</span></div>
<div class="abs ct n" style="left:738px;top:584px;width:56px;height:14px"><span>1</span></div>
<div class="abs ct n" style="left:795px;top:584px;width:56px;height:14px"><span>6</span></div>
<div class="abs ct n" style="left:852px;top:584px;width:56px;height:14px"><span>7</span></div>
<div class="abs ct n" style="left:909px;top:584px;width:56px;height:14px"><span>14</span></div>
<div class="abs ct n" style="left:966px;top:584px;width:56px;height:14px"><span>13</span></div>
<div class="abs ct n" style="left:1080px;top:584px;width:56px;height:14px"><span>2</span></div>
<div class="abs ct n" style="left:1137px;top:584px;width:56px;height:14px"><span>11</span></div>
<div class="abs ct n" style="left:1194px;top:584px;width:56px;height:14px"><span>4</span></div>
<div class="abs ct n" style="left:1251px;top:584px;width:56px;height:14px"><span>5</span></div>
<div class="abs ct n" style="left:339px;top:598px;width:56px;height:14px"><span>1</span></div>
<div class="abs ct n" style="left:396px;top:598px;width:56px;height:14px"><span>10</span></div>
<div class="abs ct n" style="left:453px;top:598px;width:56px;height:14px"><span>9</span></div>
<div class="abs ct n" style="left:510px;top:598px;width:56px;height:14px"><span>12</span></div>
<div class="abs ct n" style="left:567px;top:598px;width:56px;height:14px"><span>11</span></div>
<div class="abs ct n" style="left:681px;top:598px;width:56px;height:14px"><span>6</span></div>
<div class="abs ct n" style="left:738px;top:598px;width:56px;height:14px"><span>3</span></div>
<div class="abs ct n" style="left:795px;top:598px;width:56px;height:14px"><span>14</span></div>
<div class="abs ct n" style="left:852px;top:598px;width:56px;height:14px"><span>13</span></div>
<div class="abs ct n" style="left:909px;top:598px;width:56px;height:14px"><span>2</span></div>
<div class="abs ct n" style="left:966px;top:598px;width:56px;height:14px"><span>5</span></div>
<div class="abs ct n" style="left:1080px;top:598px;width:56px;height:14px"><span>8</span></div>
<div class="abs ct n" style="left:1137px;top:598px;width:56px;height:14px"><span>1</span></div>
<div class="abs ct n" style="left:1194px;top:598px;width:56px;height:14px"><span>12</span></div>
<div class="abs ct n" style="left:1251px;top:598px;width:56px;height:14px"><span>7</span></div>
<div class="abs ct n" style="left:339px;top:612px;width:56px;height:14px"><span>3</span></div>
<div class="abs ct n" style="left:396px;top:612px;width:56px;height:14px"><span>4</span></div>
<div class="abs ct n" style="left:453px;top:612px;width:56px;height:14px"><span>7</span></div>
<div class="abs ct n" style="left:510px;top:612px;width:56px;height:14px"><span>6</span></div>
<div class="abs ct n" style="left:567px;top:612px;width:56px;height:14px"><span>13</span></div>
<div class="abs ct n" style="left:681px;top:612px;width:56px;height:14px"><span>14</span></div>
<div class="abs ct n" style="left:738px;top:612px;width:56px;height:14px"><span>9</span></div>
<div class="abs ct n" style="left:795px;top:612px;width:56px;height:14px"><span>2</span></div>
<div class="abs ct n" style="left:852px;top:612px;width:56px;height:14px"><span>5</span></div>
<div class="abs ct n" style="left:909px;top:612px;width:56px;height:14px"><span>8</span></div>
<div class="abs ct n" style="left:966px;top:612px;width:56px;height:14px"><span>1</span></div>
<div class="abs ct n" style="left:1080px;top:612px;width:56px;height:14px"><span>12</span></div>
<div class="abs ct n" style="left:1137px;top:612px;width:56px;height:14px"><span>3</span></div>
<div class="abs ct n" style="left:1194px;top:612px;width:56px;height:14px"><span>10</span></div>
<div class="abs ct n" style="left:1251px;top:612px;width:56px;height:14px"><span>9</span></div>
<div class="abs ct n" style="left:339px;top:626px;width:56px;height:14px"><span>11</span></div>
<div class="abs ct n" style="left:396px;top:626px;width:56px;height:14px"><span>2</span></div>
<div class="abs ct n" style="left:453px;top:626px;width:56px;height:14px"><span>13</span></div>
<div class="abs ct n" style="left:510px;top:626px;width:56px;height:14px"><span>10</span></div>
<div class="abs ct n" style="left:567px;top:626px;width:56px;height:14px"><span>7</span></div>
<div class="abs ct n" style="left:681px;top:626px;width:56px;height:14px"><span>4</span></div>
<div class="abs ct n" style="left:738px;top:626px;width:56px;height:14px"><span>11</span></div>
<div class="abs ct n" style="left:795px;top:626px;width:56px;height:14px"><span>10</span></div>
<div class="abs ct n" style="left:852px;top:626px;width:56px;height:14px"><span>3</span></div>
<div class="abs ct n" style="left:909px;top:626px;width:56px;height:14px"><span>12</span></div>
<div class="abs ct n" style="left:966px;top:626px;width:56px;height:14px"><span>7</span></div>
<div class="abs ct n" style="left:1080px;top:626px;width:56px;height:14px"><span>4</span></div>
<div class="abs ct n" style="left:1137px;top:626px;width:56px;height:14px"><span>13</span></div>
<div class="abs ct n" style="left:1194px;top:626px;width:56px;height:14px"><span>8</span></div>
<div class="abs ct n" style="left:1251px;top:626px;width:56px;height:14px"><span>3</span></div>
<div class="abs ct n" style="left:339px;top:640px;width:56px;height:14px"><span>9</span></div>
<div class="abs ct n" style="left:396px;top:640px;width:56px;height:14px"><span>6</span></div>
<div class="abs ct n" style="left:453px;top:640px;width:56px;height:14px"><span>1</span></div>
<div class="abs ct n" style="left:510px;top:640px;width:56px;height:14px"><span>8</span></div>
<div class="abs ct n" style="left:567px;top:640px;width:56px;height:14px"><span>5</span></div>
<div class="abs ct n" style="left:681px;top:640px;width:56px;height:14px"><span>12</span></div>
<div class="abs ct n" style="left:738px;top:640px;width:56px;height:14px"><span>7</span></div>
<div class="abs ct n" style="left:795px;top:640px;width:56px;height:14px"><span>4</span></div>
<div class="abs ct n" style="left:852px;top:640px;width:56px;height:14px"><span>11</span></div>
<div class="abs ct n" style="left:909px;top:640px;width:56px;height:14px"><span>10</span></div>
<div class="abs ct n" style="left:966px;top:640px;width:56px;height:14px"><span>3</span></div>
<div class="abs ct n" style="left:1080px;top:640px;width:56px;height:14px"><span>14</span></div>
<div class="abs ct n" style="left:1137px;top:640px;width:56px;height:14px"><span>9</span></div>
<div class="abs ct n" style="left:1194px;top:640px;width:56px;height:14px"><span>2</span></div>
<div class="abs ct n" style="left:1251px;top:640px;width:56px;height:14px"><span>13</span></div>
<div class="abs ct n" style="left:339px;top:654px;width:56px;height:14px"><span>13</span></div>
<div class="abs ct n" style="left:396px;top:654px;width:56px;height:14px"><span>14</span></div>
<div class="abs ct n" style="left:453px;top:654px;width:56px;height:14px"><span>11</span></div>
<div class="abs ct n" style="left:510px;top:654px;width:56px;height:14px"><span>2</span></div>
<div class="abs ct n" style="left:567px;top:654px;width:56px;height:14px"><span>3</span></div>
<div class="abs ct n" style="left:681px;top:654px;width:56px;height:14px"><span>10</span></div>
<div class="abs ct n" style="left:738px;top:654px;width:56px;height:14px"><span>5</span></div>
<div class="abs ct n" style="left:795px;top:654px;width:56px;height:14px"><span>12</span></div>
<div class="abs ct n" style="left:852px;top:654px;width:56px;height:14px"><span>1</span></div>
<div class="abs ct n" style="left:909px;top:654px;width:56px;height:14px"><span>4</span></div>
<div class="abs ct n" style="left:966px;top:654px;width:56px;height:14px"><span>9</span></div>
<div class="abs ct n" style="left:1080px;top:654px;width:56px;height:14px"><span>6</span></div>
<div class="abs ct n" style="left:1137px;top:654px;width:56px;height:14px"><span>7</span></div>
<div class="abs ct n" style="left:1194px;top:654px;width:56px;height:14px"><span>14</span></div>
<div class="abs ct n" style="left:1251px;top:654px;width:56px;height:14px"><span>11</span></div>
<div class="abs ct n" style="left:339px;top:683px;width:56px;height:14px"><span>15ab</span></div>
<div class="abs ct n" style="left:453px;top:683px;width:56px;height:14px"><span>15ab</span></div>
<div class="abs ct n" style="left:567px;top:683px;width:56px;height:14px"><span>15ab</span></div>
<div class="abs ct n" style="left:738px;top:683px;width:56px;height:14px"><span>15ab</span></div>
<div class="abs ct n" style="left:852px;top:683px;width:56px;height:14px"><span>15ab</span></div>
<div class="abs ct n" style="left:966px;top:683px;width:56px;height:14px"><span>15ab</span></div>
<div class="abs ct n" style="left:1137px;top:683px;width:56px;height:14px"><span>15ab</span></div>
<div class="abs ct n" style="left:1251px;top:683px;width:56px;height:14px"><span>15ab</span></div>
<div class="abs ct n" style="left:339px;top:712px;width:56px;height:14px"><span>15c</span></div>
<div class="abs ct n" style="left:453px;top:712px;width:56px;height:14px"><span>15c</span></div>
<div class="abs ct n" style="left:567px;top:712px;width:56px;height:14px"><span>15c</span></div>
<div class="abs ct n" style="left:738px;top:712px;width:56px;height:14px"><span>15c</span></div>
<div class="abs ct n" style="left:852px;top:712px;width:56px;height:14px"><span>15c</span></div>
<div class="abs ct n" style="left:966px;top:712px;width:56px;height:14px"><span>15c</span></div>
<div class="abs ct n" style="left:1137px;top:712px;width:56px;height:14px"><span>15c</span></div>
<div class="abs ct n" style="left:1251px;top:712px;width:56px;height:14px"><span>15c</span></div>
<div class="abs ct i" style="left:282px;top:175px;width:56px;height:14px"><span><u>Info</u> C</span></div>
<div class="abs ct i" style="left:339px;top:175px;width:56px;height:14px"><span><u>Info</u> B</span></div>
<div class="abs ct i" style="left:396px;top:175px;width:56px;height:14px"><span><u>Info</u> B</span></div>
<div class="abs ct i" style="left:453px;top:175px;width:56px;height:14px"><span><u>Info</u> A</span></div>
<div class="abs ct i" style="left:510px;top:175px;width:56px;height:14px"><span><u>Info</u> B</span></div>
<div class="abs ct i" style="left:567px;top:175px;width:56px;height:14px"><span><u>Info</u> A</span></div>
<div class="abs ct i" style="left:681px;top:175px;width:56px;height:14px"><span><u>Info</u> C</span></div>
<div class="abs ct i" style="left:738px;top:175px;width:56px;height:14px"><span><u>Info</u> B</span></div>
<div class="abs ct i" style="left:795px;top:175px;width:56px;height:14px"><span><u>Info</u> A</span></div>
<div class="abs ct i" style="left:852px;top:175px;width:56px;height:14px"><span><u>Info</u> C</span></div>
<div class="abs ct i" style="left:909px;top:175px;width:56px;height:14px"><span><u>Info</u> B</span></div>
<div class="abs ct i" style="left:966px;top:175px;width:56px;height:14px"><span><u>Info</u> A</span></div>
<div class="abs ct i" style="left:1080px;top:175px;width:56px;height:14px"><span><u>Info</u> C</span></div>
<div class="abs ct i" style="left:1137px;top:175px;width:56px;height:14px"><span><u>Info</u> B</span></div>
<div class="abs ct i" style="left:1194px;top:175px;width:56px;height:14px"><span><u>Info</u> A</span></div>
<div class="abs ct i" style="left:1251px;top:175px;width:56px;height:14px"><span><u>Info</u> C</span></div>
<div class="abs ct i" style="left:282px;top:189px;width:56px;height:14px"><span><u>Info</u> A</span></div>
<div class="abs ct i" style="left:339px;top:189px;width:56px;height:14px"><span><u>Info</u> C</span></div>
<div class="abs ct i" style="left:453px;top:189px;width:56px;height:14px"><span><u>Info</u> C</span></div>
<div class="abs ct i" style="left:567px;top:189px;width:56px;height:14px"><span><u>Info</u> B</span></div>
<div class="abs ct i" style="left:681px;top:189px;width:56px;height:14px"><span><u>Info</u> A</span></div>
<div class="abs ct i" style="left:738px;top:189px;width:56px;height:14px"><span><u>Info</u> C</span></div>
<div class="abs ct i" style="left:852px;top:189px;width:56px;height:14px"><span><u>Info</u> A</span></div>
<div class="abs ct i" style="left:966px;top:189px;width:56px;height:14px"><span><u>Info</u> B</span></div>
<div class="abs ct i" style="left:1137px;top:189px;width:56px;height:14px"><span><u>Info</u> C</span></div>
<div class="abs ct i" style="left:1251px;top:189px;width:56px;height:14px"><span><u>Info</u> A</span></div>
<div class="abs ct n" style="left:282px;top:741px;width:56px;height:14px"><span>11a*</span></div>
<div class="abs ct n" style="left:339px;top:741px;width:56px;height:14px"><span>7a*</span></div>
<div class="abs ct n" style="left:396px;top:741px;width:56px;height:14px"><span>8c*</span></div>
<div class="abs ct n" style="left:453px;top:741px;width:56px;height:14px"><span>3a*</span></div>
<div class="abs ct n" style="left:510px;top:741px;width:56px;height:14px"><span>6a*</span></div>
<div class="abs ct n" style="left:681px;top:741px;width:56px;height:14px"><span>13a*</span></div>
<div class="abs ct n" style="left:738px;top:741px;width:56px;height:14px"><span>10b*</span></div>
<div class="abs ct n" style="left:795px;top:741px;width:56px;height:14px"><span>2a*</span></div>
<div class="abs ct n" style="left:852px;top:741px;width:56px;height:14px"><span>15a*</span></div>
<div class="abs ct n" style="left:909px;top:741px;width:56px;height:14px"><span>1a*</span></div>
<div class="abs ct n" style="left:1080px;top:741px;width:56px;height:14px"><span>4a*</span></div>
<div class="abs ct n" style="left:1137px;top:741px;width:56px;height:14px"><span>12b</span></div>
<div class="abs ct n" style="left:1194px;top:741px;width:56px;height:14px"><span>3c</span></div>
<div class="abs ct n" style="left:1251px;top:741px;width:56px;height:14px"><span>11a</span></div>
<div class="abs ct n" style="left:282px;top:755px;width:56px;height:14px"><span>11b*</span></div>
<div class="abs ct n" style="left:339px;top:755px;width:56px;height:14px"><span>7b*</span></div>
<div class="abs ct n" style="left:396px;top:755px;width:56px;height:14px"><span>9a*</span></div>
<div class="abs ct n" style="left:453px;top:755px;width:56px;height:14px"><span>3b*</span></div>
<div class="abs ct n" style="left:510px;top:755px;width:56px;height:14px"><span>6b*</span></div>
<div class="abs ct n" style="left:681px;top:755px;width:56px;height:14px"><span>13b*</span></div>
<div class="abs ct n" style="left:738px;top:755px;width:56px;height:14px"><span>10c*</span></div>
<div class="abs ct n" style="left:795px;top:755px;width:56px;height:14px"><span>2b*</span></div>
<div class="abs ct n" style="left:852px;top:755px;width:56px;height:14px"><span>15b*</span></div>
<div class="abs ct n" style="left:909px;top:755px;width:56px;height:14px"><span>1b*</span></div>
<div class="abs ct n" style="left:1080px;top:755px;width:56px;height:14px"><span>4b*</span></div>
<div class="abs ct n" style="left:1137px;top:755px;width:56px;height:14px"><span>6a</span></div>
<div class="abs ct n" style="left:1194px;top:755px;width:56px;height:14px"><span>5a</span></div>
<div class="abs ct n" style="left:1251px;top:755px;width:56px;height:14px"><span>11b</span></div>
<div class="abs ct n" style="left:282px;top:769px;width:56px;height:14px"><span>11c*</span></div>
<div class="abs ct n" style="left:339px;top:769px;width:56px;height:14px"><span>8a*</span></div>
<div class="abs ct n" style="left:396px;top:769px;width:56px;height:14px"><span>9b*</span></div>
<div class="abs ct n" style="left:453px;top:769px;width:56px;height:14px"><span>3c*</span></div>
<div class="abs ct n" style="left:510px;top:769px;width:56px;height:14px"><span>6c*</span></div>
<div class="abs ct n" style="left:681px;top:769px;width:56px;height:14px"><span>14b*</span></div>
<div class="abs ct n" style="left:738px;top:769px;width:56px;height:14px"><span>12b*</span></div>
<div class="abs ct n" style="left:795px;top:769px;width:56px;height:14px"><span>2c*</span></div>
<div class="abs ct n" style="left:852px;top:769px;width:56px;height:14px"><span>15c*</span></div>
<div class="abs ct n" style="left:909px;top:769px;width:56px;height:14px"><span>1c*</span></div>
<div class="abs ct n" style="left:1080px;top:769px;width:56px;height:14px"><span>4c*</span></div>
<div class="abs ct n" style="left:1137px;top:769px;width:56px;height:14px"><span>6b</span></div>
<div class="abs ct n" style="left:1194px;top:769px;width:56px;height:14px"><span>5b</span></div>
<div class="abs ct n" style="left:1251px;top:769px;width:56px;height:14px"><span>11c</span></div>
<div class="abs ct n" style="left:282px;top:783px;width:56px;height:14px"><span>12a*</span></div>
<div class="abs ct n" style="left:339px;top:783px;width:56px;height:14px"><span>8b*</span></div>
<div class="abs ct n" style="left:396px;top:783px;width:56px;height:14px"><span>9c*</span></div>
<div class="abs ct n" style="left:453px;top:783px;width:56px;height:14px"><span>5a*</span></div>
<div class="abs ct n" style="left:510px;top:783px;width:56px;height:14px"><span>10a*</span></div>
<div class="abs ct n" style="left:681px;top:783px;width:56px;height:14px"><span>14c*</span></div>
<div class="abs ct n" style="left:738px;top:783px;width:56px;height:14px"><span>12c*</span></div>
<div class="abs ct n" style="left:795px;top:783px;width:56px;height:14px"><span>5b*</span></div>
<div class="abs ct n" style="left:852px;top:783px;width:56px;height:14px"><span>14b*</span></div>
<div class="abs ct n" style="left:909px;top:783px;width:56px;height:14px"><span>13c*</span></div>
<div class="abs ct n" style="left:1080px;top:783px;width:56px;height:14px"><span>5c*</span></div>
<div class="abs ct n" style="left:1137px;top:783px;width:56px;height:14px"><span>6c</span></div>
<div class="abs ct n" style="left:1194px;top:783px;width:56px;height:14px"><span>5c</span></div>
<div class="abs ct n" style="left:1251px;top:783px;width:56px;height:14px"><span>12a</span></div>
<div class="abs" style="left:130px;top:810px;width:678px;height:10px;background:#fff"></div>
<div class="abs note" style="left:130px;top:809px;height:11px;width:800px"><span>* : <u>La</u> <u>première</u> <u>colle</u> <u>de</u> <u>français</u> <u>est</u> <u>une</u> <u>colle</u> <u>effectuée</u> <u>par</u> <u>groupe</u> <u>de</u> 4 <u>élèves</u> <u>sur</u> <u>tout</u> <u>le</u> <u>créneau</u> <b>17H-19H</b>, <u>chaque</u> <u>élève</u> <u>indiqué</u> <u>dans</u> <u>la</u> <u>colonne</u> <u>doit</u> <u>donc</u> <u>être</u></span></div>
<div class="abs" style="left:0;top:141px;width:1536px;height:20px;background:#7c7c7c"></div>
<div class="abs hdr" style="left:2px;top:143px;width:32px;height:17px"></div>
<div class="abs hdr" style="left:35px;top:143px;width:94px;height:17px">A</div>
<div class="abs hdr" style="left:130px;top:143px;width:94px;height:17px">B</div>
<div class="abs hdr sel" style="left:224px;top:143px;width:58px;height:18px">C</div>
<div class="abs hdr" style="left:282px;top:143px;width:56px;height:17px">D</div>
<div class="abs hdr" style="left:339px;top:143px;width:56px;height:17px">E</div>
<div class="abs hdr" style="left:396px;top:143px;width:56px;height:17px">F</div>
<div class="abs hdr" style="left:453px;top:143px;width:56px;height:17px">G</div>
<div class="abs hdr" style="left:510px;top:143px;width:56px;height:17px">H</div>
<div class="abs hdr" style="left:567px;top:143px;width:56px;height:17px">I</div>
<div class="abs hdr" style="left:624px;top:143px;width:56px;height:17px">J</div>
<div class="abs hdr" style="left:681px;top:143px;width:56px;height:17px">K</div>
<div class="abs hdr" style="left:738px;top:143px;width:56px;height:17px">L</div>
<div class="abs hdr" style="left:795px;top:143px;width:56px;height:17px">M</div>
<div class="abs hdr" style="left:852px;top:143px;width:56px;height:17px">N</div>
<div class="abs hdr" style="left:909px;top:143px;width:56px;height:17px">O</div>
<div class="abs hdr" style="left:966px;top:143px;width:56px;height:17px">P</div>
<div class="abs hdr" style="left:1023px;top:143px;width:56px;height:17px">Q</div>
<div class="abs hdr" style="left:1080px;top:143px;width:56px;height:17px">R</div>
<div class="abs hdr" style="left:1137px;top:143px;width:56px;height:17px">S</div>
<div class="abs hdr" style="left:1194px;top:143px;width:56px;height:17px">T</div>
<div class="abs hdr" style="left:1251px;top:143px;width:56px;height:17px">U</div>
<div class="abs hdr" style="left:1308px;top:143px;width:56px;height:17px">V</div>
<div class="abs hdr" style="left:1365px;top:143px;width:56px;height:17px">W</div>
<div class="abs hdr" style="left:1422px;top:143px;width:56px;height:17px">X</div>
<div class="abs hdr" style="left:1479px;top:143px;width:56px;height:17px">Y</div>
<div class="abs" style="left:0;top:160px;width:35px;height:660px;background:#8c8c8c"></div>
<div class="abs rh" style="left:2px;top:161px;width:32px;height:14px"><span>4</span></div>
<div class="abs rh" style="left:2px;top:176px;width:32px;height:13px"><span>5</span></div>
<div class="abs rh" style="left:2px;top:190px;width:32px;height:13px"><span>6</span></div>
<div class="abs rh" style="left:2px;top:204px;width:32px;height:14px"><span>7</span></div>
<div class="abs rh" style="left:2px;top:219px;width:32px;height:13px"><span>8</span></div>
<div class="abs rh" style="left:2px;top:233px;width:32px;height:13px"><span>9</span></div>
<div class="abs rh" style="left:2px;top:247px;width:32px;height:13px"><span>10</span></div>
<div class="abs rh" style="left:2px;top:261px;width:32px;height:13px"><span>11</span></div>
<div class="abs rh" style="left:2px;top:275px;width:32px;height:13px"><span>12</span></div>
<div class="abs rh" style="left:2px;top:289px;width:32px;height:13px"><span>13</span></div>
<div class="abs rh" style="left:2px;top:303px;width:32px;height:13px"><span>14</span></div>
<div class="abs rh" style="left:2px;top:317px;width:32px;height:13px"><span>15</span></div>
<div class="abs rh" style="left:2px;top:331px;width:32px;height:13px"><span>16</span></div>
<div class="abs rh" style="left:2px;top:345px;width:32px;height:13px"><span>17</span></div>
<div class="abs rh" style="left:2px;top:359px;width:32px;height:13px"><span>18</span></div>
<div class="abs rh" style="left:2px;top:373px;width:32px;height:13px"><span>19</span></div>
<div class="abs rh" style="left:2px;top:387px;width:32px;height:13px"><span>20</span></div>
<div class="abs rh sel" style="left:2px;top:400px;width:33px;height:15px"><span>21</span></div>
<div class="abs rh" style="left:2px;top:415px;width:32px;height:13px"><span>22</span></div>
<div class="abs rh" style="left:2px;top:429px;width:32px;height:14px"><span>23</span></div>
<div class="abs rh" style="left:2px;top:444px;width:32px;height:13px"><span>24</span></div>
<div class="abs rh" style="left:2px;top:458px;width:32px;height:13px"><span>25</span></div>
<div class="abs rh" style="left:2px;top:472px;width:32px;height:13px"><span>26</span></div>
<div class="abs rh" style="left:2px;top:486px;width:32px;height:13px"><span>27</span></div>
<div class="abs rh" style="left:2px;top:500px;width:32px;height:13px"><span>28</span></div>
<div class="abs rh" style="left:2px;top:514px;width:32px;height:13px"><span>29</span></div>
<div class="abs rh" style="left:2px;top:528px;width:32px;height:13px"><span>30</span></div>
<div class="abs rh" style="left:2px;top:542px;width:32px;height:13px"><span>31</span></div>
<div class="abs rh" style="left:2px;top:556px;width:32px;height:14px"><span>32</span></div>
<div class="abs rh" style="left:2px;top:571px;width:32px;height:13px"><span>33</span></div>
<div class="abs rh" style="left:2px;top:585px;width:32px;height:13px"><span>34</span></div>
<div class="abs rh" style="left:2px;top:599px;width:32px;height:13px"><span>35</span></div>
<div class="abs rh" style="left:2px;top:613px;width:32px;height:13px"><span>36</span></div>
<div class="abs rh" style="left:2px;top:627px;width:32px;height:13px"><span>37</span></div>
<div class="abs rh" style="left:2px;top:641px;width:32px;height:13px"><span>38</span></div>
<div class="abs rh" style="left:2px;top:655px;width:32px;height:13px"><span>39</span></div>
<div class="abs rh" style="left:2px;top:669px;width:32px;height:14px"><span>40</span></div>
<div class="abs rh" style="left:2px;top:684px;width:32px;height:13px"><span>41</span></div>
<div class="abs rh" style="left:2px;top:698px;width:32px;height:14px"><span>42</span></div>
<div class="abs rh" style="left:2px;top:713px;width:32px;height:13px"><span>43</span></div>
<div class="abs rh" style="left:2px;top:727px;width:32px;height:14px"><span>44</span></div>
<div class="abs rh" style="left:2px;top:742px;width:32px;height:13px"><span>45</span></div>
<div class="abs rh" style="left:2px;top:756px;width:32px;height:13px"><span>46</span></div>
<div class="abs rh" style="left:2px;top:770px;width:32px;height:13px"><span>47</span></div>
<div class="abs rh" style="left:2px;top:784px;width:32px;height:13px"><span>48</span></div>
<div class="abs rh" style="left:2px;top:798px;width:32px;height:11px"><span>49</span></div>
<div class="abs rh" style="left:2px;top:810px;width:32px;height:10px"><span>50</span></div>
<div class="abs" style="left:223px;top:399px;width:60px;height:17px;border:3px solid #000"></div>
<div class="abs" style="left:280px;top:413px;width:6px;height:6px;background:#fff"></div>
<div class="abs" style="left:281px;top:414px;width:5px;height:5px;background:#000"></div>
</div>
<div class="abs" style="left:0px;top:0px;width:1600px;height:47px;background:#fff"></div>
<svg class="abs" style="left:4px;top:4px" width="15" height="15" viewBox="0 0 16 16">
<path d="M2.5 1.5h8l3.5 3.5v9.5h-11.5z" fill="#fff" stroke="#1d2f4a" stroke-width="1"/>
<path d="M2.5 1.5v13h11.5" fill="none" stroke="#0d1b30" stroke-width="1.4"/>
<path d="M10.5 1.5v3.5h3.5" fill="#dfe7ee" stroke="#5a6d80" stroke-width=".8"/>
<rect x="6" y="7" width="7.5" height="7" fill="#8fbf21" stroke="#5d8a10" stroke-width=".8"/>
<rect x="7.2" y="8.2" width="2.2" height="2" fill="#e4f3a8"/><rect x="10.4" y="8.2" width="2.2" height="2" fill="#e4f3a8"/>
<rect x="7.2" y="11.2" width="2.2" height="2" fill="#e4f3a8"/><rect x="10.4" y="11.2" width="2.2" height="2" fill="#e4f3a8"/>
<path d="M0.5 7.5c3-1.5 5-4.5 10-5.5c-3 2-5 4.5-10 6.5z" fill="#a9bfd0" stroke="#7f97ab" stroke-width=".5" opacity=".9"/>
</svg>
<div class="abs title" style="left:23px;top:4px;">colloscope.ods - OpenOffice Calc</div>
<svg class="abs" style="left:1478px;top:4px" width="110" height="14" viewBox="0 0 110 14"><path d="M1 6.500h10" stroke="#000" stroke-width="1"/><path d="M46.500 3.500h7.500v7.500h-7.500z M48.500 3.500v-2h7.500v7.500h-2" fill="none" stroke="#000" stroke-width="1.100"/><path d="M92 1l10 10M102 1l-10 10" stroke="#000" stroke-width="1.100"/></svg>
<div class="abs menu" style="left:6px;top:27px;"><u>F</u>ichier</div>
<div class="abs menu" style="left:53px;top:27px;">É<u>d</u>ition</div>
<div class="abs menu" style="left:102px;top:27px;"><u>A</u>ffichage</div>
<div class="abs menu" style="left:165px;top:27px;"><u>I</u>nsertion</div>
<div class="abs menu" style="left:223px;top:27px;">Forma<u>t</u></div>
<div class="abs menu" style="left:273px;top:27px;"><u>O</u>utils</div>
<div class="abs menu" style="left:316px;top:27px;">Donnée<u>s</u></div>
<div class="abs menu" style="left:374px;top:27px;">Fe<u>n</u>être</div>
<div class="abs menu" style="left:425px;top:27px;">Aid<u>e</u></div>
<svg class="abs" style="left:1583px;top:29px" width="10" height="10" viewBox="0 0 10 10"><path d="M1.500 1.500l7 7M8.500 1.500l-7 7" stroke="#4f5963" stroke-width="1.700"/></svg>
<div class="abs" style="left:0px;top:46px;width:1600px;height:1px;background:#dcdcdc"></div>
<div class="abs" style="left:0px;top:47px;width:1600px;height:60px;background:#fff"></div>
<div class="abs" style="left:0px;top:76px;width:1001px;height:1px;background:#dadada"></div>
<div class="abs" style="left:820px;top:47px;width:1px;height:29px;background:#dadada"></div>
<div class="abs" style="left:1000px;top:47px;width:1px;height:30px;background:#dadada"></div>
<div class="abs" style="left:827px;top:77px;width:1px;height:30px;background:#dadada"></div>
<div class="abs" style="left:4px;top:53px;width:1px;height:1.5px;background:#707070"></div>
<div class="abs" style="left:4px;top:57px;width:1px;height:1.5px;background:#707070"></div>
<div class="abs" style="left:4px;top:61px;width:1px;height:1.5px;background:#707070"></div>
<div class="abs" style="left:4px;top:65px;width:1px;height:1.5px;background:#707070"></div>
<div class="abs" style="left:4px;top:69px;width:1px;height:1.5px;background:#707070"></div>
<div class="abs" style="left:4px;top:83px;width:1px;height:1.5px;background:#707070"></div>
<div class="abs" style="left:4px;top:87px;width:1px;height:1.5px;background:#707070"></div>
<div class="abs" style="left:4px;top:91px;width:1px;height:1.5px;background:#707070"></div>
<div class="abs" style="left:4px;top:95px;width:1px;height:1.5px;background:#707070"></div>
<div class="abs" style="left:4px;top:99px;width:1px;height:1.5px;background:#707070"></div>
<div class="abs" style="left:826px;top:53px;width:1px;height:1.5px;background:#707070"></div>
<div class="abs" style="left:826px;top:57px;width:1px;height:1.5px;background:#707070"></div>
<div class="abs" style="left:826px;top:61px;width:1px;height:1.5px;background:#707070"></div>
<div class="abs" style="left:826px;top:65px;width:1px;height:1.5px;background:#707070"></div>
<div class="abs" style="left:826px;top:69px;width:1px;height:1.5px;background:#707070"></div>
<svg class="abs" style="left:15px;top:53px" width="16" height="16" viewBox="0 0 16 16">
<path d="M2.5 1.5h8l3.5 3.5v9.5h-11.5z" fill="#fff" stroke="#1d2f4a" stroke-width="1"/>
<path d="M2.5 1.5v13h11.5" fill="none" stroke="#0d1b30" stroke-width="1.4"/>
<path d="M10.5 1.5v3.5h3.5" fill="#dfe7ee" stroke="#5a6d80" stroke-width=".8"/>
<rect x="6" y="7" width="7.5" height="7" fill="#8fbf21" stroke="#5d8a10" stroke-width=".8"/>
<rect x="7.2" y="8.2" width="2.2" height="2" fill="#e4f3a8"/><rect x="10.4" y="8.2" width="2.2" height="2" fill="#e4f3a8"/>
<rect x="7.2" y="11.2" width="2.2" height="2" fill="#e4f3a8"/><rect x="10.4" y="11.2" width="2.2" height="2" fill="#e4f3a8"/>
<path d="M0.5 7.5c3-1.5 5-4.5 10-5.5c-3 2-5 4.5-10 6.5z" fill="#a9bfd0" stroke="#7f97ab" stroke-width=".5" opacity=".9"/>
</svg>
<svg class="abs" style="left:38.5px;top:59px" width="6" height="3.5" viewBox="0 0 6 3.500"><path d="M0 0h6l-3 3.500z" fill="#000"/></svg>
<svg class="abs" style="left:51px;top:53px" width="16" height="16" viewBox="0 0 16 16">
<path d="M1.5 14.5v-11h4l1.2 1.5h5.8v2.5" fill="#f9c74a" stroke="#9c5400" stroke-width="1"/>
<path d="M1.5 14.5l2.8-6h10.2l-2.8 6z" fill="#f7a51d" stroke="#9c5400" stroke-width="1" stroke-linejoin="round"/>
<path d="M4.8 9.3h8.6" stroke="#fde29a" stroke-width=".8"/>
<path d="M8 7.5l4-4" stroke="#c7360c" stroke-width="2.6"/>
<path d="M9.3 1.2h5.5v5.5z" fill="#e0481a" stroke="#9b2200" stroke-width=".7"/>
<path d="M8.6 7l3.6-3.6" stroke="#f58a4e" stroke-width="1"/>
</svg>
<svg class="abs" style="left:74.5px;top:59px" width="6" height="3.5" viewBox="0 0 6 3.500"><path d="M0 0h6l-3 3.500z" fill="#000"/></svg>
<svg class="abs" style="left:88px;top:53px" width="16" height="16" viewBox="0 0 16 16">
<path d="M1.5 1.5h13v13h-13z" fill="#dcdcdc" stroke="#c4c4c4" stroke-width="1" stroke-linejoin="round"/>
<rect x="3.5" y="1.5" width="9" height="6" fill="#f4f4f4" stroke="#cfcfcf" stroke-width=".6"/>
<rect x="4" y="10" width="8" height="4.5" fill="#c9c9c9"/>
<rect x="5" y="11" width="2.4" height="3.5" fill="#ececec"/><rect x="8.6" y="11" width="2.4" height="3.5" fill="#ececec"/>
</svg>
<svg class="abs" style="left:113px;top:53px" width="16" height="16" viewBox="0 0 16 16">
<rect x=".7" y="3.2" width="11" height="7.6" fill="#e3ebf3" stroke="#62778f" stroke-width="1"/>
<path d="M.9 3.4l5.3 4.4l5.3-4.4" fill="none" stroke="#7b8fa5" stroke-width=".9"/>
<path d="M.9 10.6l3.8-3.4M11.5 10.6l-3.8-3.4" stroke="#a8b7c6" stroke-width=".7"/>
<path d="M8.2 10.2h3.6v-2.2l3.7 3.5l-3.7 3.5v-2.2h-3.6z" fill="#f8ab1e" stroke="#a05a00" stroke-width=".8" stroke-linejoin="round"/>
</svg>
<div class="abs" style="left:137px;top:54px;width:1px;height:15px;background:#c8c8c8"></div>
<div class="abs" style="left:142px;top:48px;width:26px;height:27px;background:#cce4f7;border:1px solid #99cbf0"></div>
<svg class="abs" style="left:147px;top:53px" width="16" height="16" viewBox="0 0 16 16">
<path d="M1.5 1.5h9v13h-9z" fill="#fbfbfb" stroke="#4a5560" stroke-width="1"/>
<path d="M1.5 1.5h9v3h-9z" fill="#dde3e9"/>
<path d="M3 7.5h4M3 9.5h5M3 11.5h3" stroke="#3d5a78" stroke-width="1"/>
<path d="M5.5 12.5l1-3.2l6.2-6.6l2.2 2.2l-6.2 6.6z" fill="#f6c534" stroke="#8a6400" stroke-width=".7" stroke-linejoin="round"/>
<path d="M12.7 2.7l1.2-1.2l2 2l-1.1 1.3z" fill="#ee8fa8" stroke="#a8475f" stroke-width=".6"/>
<path d="M5.5 12.5l.6-1.9l1.3 1.3z" fill="#222"/>
</svg>
<div class="abs" style="left:170px;top:54px;width:1px;height:15px;background:#c8c8c8"></div>
<svg class="abs" style="left:180px;top:53px" width="16" height="16" viewBox="0 0 16 16">
<path d="M2.5 1h8l3 3v11h-11z" fill="#fff" stroke="#9aa3ad" stroke-width=".9"/>
<path d="M10.5 1l3 3h-3z" fill="#d93025" stroke="#a21a12" stroke-width=".5"/>
<path d="M4.5 4.5h4M4.5 6.5h6" stroke="#4f81bd" stroke-width="1"/>
<rect x="2" y="9" width="12" height="6" fill="#c9211e" stroke="#8e1310" stroke-width=".6"/>
<text x="8" y="13.9" font-family="Liberation Sans, sans-serif" font-weight="bold" font-size="5.4" text-anchor="middle" fill="#fff">PDF</text>
</svg>
<svg class="abs" style="left:204px;top:53px" width="16" height="16" viewBox="0 0 16 16">
<rect x="3.500" y=".500" width="9" height="8" fill="#fff" stroke="#6c7d90" stroke-width=".8"/>
<path d="M5.300 3h5.400M5.300 5.300h5.400" stroke="#3f7ec6" stroke-width=".9"/>
<path d="M1 8.5c0-1 .6-1.5 1.5-1.5h11c.9 0 1.5.5 1.5 1.5v4.5h-14z" fill="#c9cdd1" stroke="#3a3f45" stroke-width=".9"/>
<rect x="1" y="10.5" width="14" height="3.8" rx=".8" fill="#55595e" stroke="#26292c" stroke-width=".8"/>
<rect x="11.5" y="11.6" width="2" height="1.1" fill="#86d13a"/>
</svg>
<svg class="abs" style="left:229px;top:53px" width="16" height="16" viewBox="0 0 16 16">
<path d="M1.5 4.5h7v10h-7z" fill="#f3f3f3" stroke="#8a8f95" stroke-width="1"/>
<path d="M6 4.5h2.5v2.5" fill="none" stroke="#b7bcc2" stroke-width=".7"/>
<circle cx="8.6" cy="5.3" r="3.9" fill="#cfe4f5" stroke="#6f7f8f" stroke-width="1.1"/>
<path d="M6.6 4.3a2.5 2.5 0 0 1 3-1.3" fill="none" stroke="#fff" stroke-width=".9"/>
<path d="M11.4 8.2l3.4 3.6" stroke="#8a6a1a" stroke-width="2.6" stroke-linecap="round"/>
<path d="M11.6 8.4l3 3.2" stroke="#f2c64e" stroke-width="1.3" stroke-linecap="round"/>
</svg>
<div class="abs" style="left:253px;top:54px;width:1px;height:15px;background:#c8c8c8"></div>
<svg class="abs" style="left:262px;top:53px" width="16" height="16" viewBox="0 0 16 16">
<text x="8" y="6.2" font-family="Liberation Sans, sans-serif" font-weight="bold" font-size="7.8" text-anchor="middle" fill="#1b2a4a" textLength="16" lengthAdjust="spacingAndGlyphs">ABC</text>
<path d="M4.300 10.800l2.900 3.200l6.600-6.800" fill="none" stroke="#1f4d8a" stroke-width="3.200" stroke-linecap="round" stroke-linejoin="round"/>
<path d="M4.300 10.800l2.900 3.200l6.600-6.800" fill="none" stroke="#5aa5ee" stroke-width="1.600" stroke-linecap="round" stroke-linejoin="round"/>
</svg>
<div class="abs" style="left:283px;top:48px;width:26px;height:27px;background:#cce4f7;border:1px solid #99cbf0"></div>
<svg class="abs" style="left:288px;top:53px" width="16" height="16" viewBox="0 0 16 16">
<text x="8" y="8.2" font-family="Liberation Sans, sans-serif" font-weight="bold" font-size="8" text-anchor="middle" fill="#1b2a4a" textLength="16" lengthAdjust="spacingAndGlyphs">ABC</text>
<path d="M1.2 12.6c1.6-2.4 3.2-2.4 4.8 0s3.2 2.4 4.8 0s2.4-2 4 .2" fill="none" stroke="#d2201e" stroke-width="2.1" stroke-linecap="round"/>
</svg>
<div class="abs" style="left:311px;top:54px;width:1px;height:15px;background:#c8c8c8"></div>
<svg class="abs" style="left:320px;top:53px" width="16" height="16" viewBox="0 0 16 16">
<path d="M2.2.8l7.6 9.4" stroke="#7d858c" stroke-width="1.8" stroke-linecap="round"/>
<path d="M13.8.8l-7.6 9.4" stroke="#9aa2a9" stroke-width="1.8" stroke-linecap="round"/>
<path d="M2.6 1.2l6.6 8.2M13.4 1.2l-6.6 8.2" stroke="#e1e5e8" stroke-width=".6"/>
<ellipse cx="3.7" cy="12" rx="3" ry="2.3" transform="rotate(-35 3.7 12)" fill="none" stroke="#e3811a" stroke-width="1.9"/>
<ellipse cx="12.3" cy="12" rx="3" ry="2.3" transform="rotate(35 12.3 12)" fill="none" stroke="#e3811a" stroke-width="1.9"/>
<ellipse cx="3.7" cy="12" rx="3.9" ry="3.2" transform="rotate(-35 3.7 12)" fill="none" stroke="#8f4a05" stroke-width=".5"/>
<ellipse cx="12.3" cy="12" rx="3.9" ry="3.2" transform="rotate(35 12.3 12)" fill="none" stroke="#8f4a05" stroke-width=".5"/>
</svg>
<svg class="abs" style="left:345px;top:53px" width="16" height="16" viewBox="0 0 16 16">
<path d="M1.5 1.5h5l2 2v6.5h-7z" fill="#fff" stroke="#51606f" stroke-width="1"/>
<path d="M3 4.800h3.500M3 7.200h3.500" stroke="#4a7eb5" stroke-width=".7"/>
<path d="M7 6h5l2.5 2.5v6h-7.5z" fill="#fff" stroke="#51606f" stroke-width="1"/>
<path d="M12 6v2.5h2.5" fill="#dfe7ee" stroke="#51606f" stroke-width=".7"/>
<path d="M8.600 10h4.300M8.600 12.400h4.300" stroke="#4a7eb5" stroke-width=".7"/>
</svg>
<svg class="abs" style="left:370px;top:53px" width="16" height="16" viewBox="0 0 16 16">
<path d="M1.5 3.5h10v10.5h-10z" fill="#e4e4e4" stroke="#cfcfcf" stroke-width="1"/>
<path d="M4 3.5l1.2-2h2.6l1.2 2z" fill="#d6d6d6" stroke="#c8c8c8" stroke-width=".7"/>
<path d="M7.5 7h4.5l2.5 2.5v5.5h-7z" fill="#f4f4f4" stroke="#d0d0d0" stroke-width="1"/>
<path d="M9 11h4M9 13h4" stroke="#dadada" stroke-width=".9"/>
</svg>
<svg class="abs" style="left:395px;top:53px" width="16" height="16" viewBox="0 0 16 16">
<path d="M10.2 5.2l3.8-4.2l1.4 1.3l-3.7 4.3z" fill="#f2c14b" stroke="#94691a" stroke-width=".7"/>
<path d="M8.6 4.6l3.4 3.2l-1 1.4l-3.8-3.4z" fill="#dfe4ea" stroke="#5d6a78" stroke-width=".7"/>
<path d="M7 5.6l4 3.8l-4.5 5.2c-2-.2-4.600-2.200-5.600-4.700z" fill="#4f94df" stroke="#1c4e8c" stroke-width=".9" stroke-linejoin="round"/>
<path d="M3 10.500l2.500 2.600M4.400 9.200l2.700 2.700M5.900 7.800l2.700 2.700" stroke="#a6cdf5" stroke-width=".7"/>
</svg>
<div class="abs" style="left:419px;top:54px;width:1px;height:15px;background:#c8c8c8"></div>
<svg class="abs" style="left:427px;top:53px" width="16" height="16" viewBox="0 0 16 16">
<path d="M1.300 1.800v6.200h6.200l-2.100-2.100c2.300-1.500 5.300-.2 5.300 2.800c0 2.400-2.100 3.500-4.300 3.300v2.600c4.100.3 7.300-2.100 7.300-5.900c0-5.400-6-7.600-10.200-4.700z" fill="#8db7dc" stroke="#2f5f8f" stroke-width="1" stroke-linejoin="round"/>
</svg>
<svg class="abs" style="left:450.5px;top:59px" width="6" height="3.5" viewBox="0 0 6 3.500"><path d="M0 0h6l-3 3.500z" fill="#000"/></svg>
<svg class="abs" style="left:463px;top:53px" width="16" height="16" viewBox="0 0 16 16">
<path d="M14.700 1.800v6.200h-6.200l2.100-2.100c-2.300-1.500-5.300-.2-5.300 2.800c0 2.400 2.100 3.500 4.300 3.300v2.600c-4.100.3-7.300-2.100-7.300-5.900c0-5.400 6-7.600 10.200-4.700z" fill="#e6e6e6" stroke="#cccccc" stroke-width="1" stroke-linejoin="round"/>
</svg>
<svg class="abs" style="left:486.5px;top:59px" width="6" height="3.5" viewBox="0 0 6 3.500"><path d="M0 0h6l-3 3.500z" fill="#a8a8a8"/></svg>
<div class="abs" style="left:499px;top:54px;width:1px;height:15px;background:#c8c8c8"></div>
<svg class="abs" style="left:508px;top:53px" width="16" height="16" viewBox="0 0 16 16">
<circle cx="8" cy="8" r="7.2" fill="#86bd4a" stroke="#1e2a33" stroke-width="1.2"/>
<path d="M3 4.500c2-2.500 4-3 6-2.800c-1 1.500 0 2.500-1.500 3.500s-3 .5-4.500 2.500z" fill="#4a90d9"/>
<path d="M10.500 3.500c1.500 0 3 1.500 3.500 3l-1.500 2.500l-2-1.500z" fill="#4a90d9"/>
<path d="M8 3v6" stroke="#dff0ff" stroke-width="1"/>
<rect x="2" y="9.300" width="12" height="4.200" rx="2.100" fill="#27313a"/>
<rect x="3.300" y="10.300" width="4" height="2.200" rx="1.100" fill="none" stroke="#e8eef3" stroke-width=".9"/>
<rect x="8.700" y="10.300" width="4" height="2.200" rx="1.100" fill="none" stroke="#e8eef3" stroke-width=".9"/>
<path d="M6 11.400h4" stroke="#e8eef3" stroke-width=".9"/>
</svg>
<svg class="abs" style="left:533px;top:53px" width="16" height="16" viewBox="0 0 16 16">
<text x="4" y="7" font-family="Liberation Sans, sans-serif" font-weight="bold" font-size="8" text-anchor="middle" fill="#1b62b5">A</text>
<text x="4" y="15.600" font-family="Liberation Sans, sans-serif" font-weight="bold" font-size="8" text-anchor="middle" fill="#60696f">Z</text>
<path d="M10.700 2h1.800v7.200h2.400l-3.300 4.600l-3.300-4.600h2.400z" fill="#f26a3a" stroke="#b5300a" stroke-width=".9" stroke-linejoin="round"/>
</svg>
<svg class="abs" style="left:558px;top:53px" width="16" height="16" viewBox="0 0 16 16">
<text x="4" y="7" font-family="Liberation Sans, sans-serif" font-weight="bold" font-size="8" text-anchor="middle" fill="#1b62b5">Z</text>
<text x="4" y="15.600" font-family="Liberation Sans, sans-serif" font-weight="bold" font-size="8" text-anchor="middle" fill="#60696f">A</text>
<path d="M10.700 2h1.800v7.200h2.400l-3.300 4.600l-3.300-4.600h2.400z" fill="#f26a3a" stroke="#b5300a" stroke-width=".9" stroke-linejoin="round"/>
</svg>
<div class="abs" style="left:582px;top:54px;width:1px;height:15px;background:#c8c8c8"></div>
<svg class="abs" style="left:591px;top:53px" width="16" height="16" viewBox="0 0 16 16">
<path d="M1.500 1v14h14" fill="none" stroke="#4d5964" stroke-width="1"/>
<rect x="3.500" y="5.500" width="3.600" height="7.500" fill="#3f7fbf" stroke="#1c4574" stroke-width=".8"/>
<rect x="7.100" y="1.500" width="3.800" height="11.500" fill="#ef6a22" stroke="#9b3800" stroke-width=".8"/>
<rect x="10.900" y="7.500" width="3.600" height="5.500" fill="#f7c531" stroke="#a67a00" stroke-width=".8"/>
</svg>
<svg class="abs" style="left:616px;top:53px" width="16" height="16" viewBox="0 0 16 16">
<path d="M.8 7.500c1.500-2.500 4-2.500 3.500 0s-3 4.500-.5 5s2.500-.5 4-.5" fill="none" stroke="#3f7fd0" stroke-width="1.300" stroke-linecap="round"/>
<path d="M4.800 13l.9-3l7-7l2.200 2.200l-7 7z" fill="#f6cf3a" stroke="#8a6400" stroke-width=".7" stroke-linejoin="round"/>
<path d="M12.700 3l1.300-1.300l2.100 2.100l-1.200 1.400z" fill="#e85d75" stroke="#9c2c45" stroke-width=".6"/>
<path d="M4.800 13l.5-1.800l1.300 1.300z" fill="#222"/>
</svg>
<div class="abs" style="left:640px;top:54px;width:1px;height:15px;background:#c8c8c8"></div>
<svg class="abs" style="left:649px;top:53px" width="16" height="16" viewBox="0 0 16 16">
<path d="M2.500 2.500h3.500v3h-3.500zM10 2.500h3.500v3h-3.500z" fill="#3b3f44" stroke="#111" stroke-width=".7"/>
<path d="M2 5.500h4.500l.8 9h-6.600zM9.500 5.500h4.500l1.300 9h-6.600z" fill="#4a4f55" stroke="#0c0c0c" stroke-width=".9" stroke-linejoin="round"/>
<rect x="6.300" y="5" width="3.400" height="4" fill="#2a2d31" stroke="#0c0c0c" stroke-width=".6"/>
<path d="M1 12.500h6M9 12.500h6" stroke="#9a9fa5" stroke-width="1"/>
<path d="M3 7v4M11 7v4" stroke="#7f858c" stroke-width=".8"/>
</svg>
<svg class="abs" style="left:674px;top:53px" width="16" height="16" viewBox="0 0 16 16">
<circle cx="8" cy="8" r="7" fill="#f6f8fa" stroke="#4a5058" stroke-width="1.300"/>
<circle cx="8" cy="8" r="5.600" fill="none" stroke="#c8ced4" stroke-width=".6"/>
<path d="M12.200 3.200l-2.800 6.200l-2.800-2.800z" fill="#2a5fd0" stroke="#163a86" stroke-width=".4"/>
<path d="M3.800 12.800l2.800-6.200l2.800 2.800z" fill="#e02a2a" stroke="#8f1010" stroke-width=".4"/>
<path d="M8 1.600v1.600M8 12.800v1.600M1.600 8h1.600M12.800 8h1.600" stroke="#5a626b" stroke-width=".8"/>
</svg>
<svg class="abs" style="left:699px;top:53px" width="16" height="16" viewBox="0 0 16 16">
<path d="M5.500 3l2.500-2.300l2.500 2.300" fill="none" stroke="#9aa0a6" stroke-width=".8"/>
<rect x="1" y="3" width="14" height="11.500" fill="#f0a52b" stroke="#8b4e00" stroke-width="1"/>
<rect x="3" y="5" width="10" height="7.500" fill="#8fc7f2" stroke="#7a4a10" stroke-width=".7"/>
<path d="M3.300 12.200v-2.200l3-2.300l2.200 1.700l2-1.200l2.200 1.600v2.400z" fill="#4c9a2a"/>
<path d="M3.300 12.200v-1l9.400-.2v1.200z" fill="#2e6e12"/>
</svg>
<svg class="abs" style="left:724px;top:53px" width="16" height="16" viewBox="0 0 16 16">
<path d="M2 3.500v9c0 1.400 2.700 2.500 6 2.500s6-1.100 6-2.500v-9" fill="#c7c9cb" stroke="#6b6f73" stroke-width=".9"/>
<ellipse cx="8" cy="3.500" rx="6" ry="2.500" fill="#eceeef" stroke="#6b6f73" stroke-width=".9"/>
<path d="M2 6.500c0 1.400 2.700 2.500 6 2.500s6-1.100 6-2.500M2 9.500c0 1.400 2.700 2.500 6 2.500s6-1.100 6-2.500" fill="none" stroke="#6b6f73" stroke-width=".9"/>
<path d="M2.600 7.800c1 .9 3 1.500 5.400 1.500s4.400-.6 5.400-1.500M2.600 10.800c1 .9 3 1.500 5.400 1.500s4.400-.6 5.400-1.500" fill="none" stroke="#f2f3f4" stroke-width=".7"/>
</svg>
<svg class="abs" style="left:749px;top:53px" width="16" height="16" viewBox="0 0 16 16">
<circle cx="6.300" cy="6.300" r="5.200" fill="#cfe6f7" stroke="#6a7886" stroke-width="1.300"/>
<path d="M3.300 5.500a3.300 3.300 0 0 1 3.500-2.600" fill="none" stroke="#fff" stroke-width="1.100"/>
<path d="M10.300 10.300l4.500 4.500" stroke="#7a5c12" stroke-width="3" stroke-linecap="round"/>
<path d="M10.600 10.600l4 4" stroke="#f0c44a" stroke-width="1.500" stroke-linecap="round"/>
</svg>
<div class="abs" style="left:773px;top:54px;width:1px;height:15px;background:#c8c8c8"></div>
<svg class="abs" style="left:782px;top:53px" width="16" height="16" viewBox="0 0 16 16">
<circle cx="8" cy="8" r="7.500" fill="#2a55b8" stroke="#142c6e" stroke-width="1"/>
<path d="M2.500 6a6 6 0 0 1 11 0c-3-1.800-8-1.800-11 0z" fill="#6f93e0" opacity=".8"/>
<text x="8" y="12.800" font-family="Liberation Sans, sans-serif" font-weight="bold" font-size="13" text-anchor="middle" fill="#fff">?</text>
</svg>
<div class="abs" style="left:809px;top:49px;width:10px;height:25px;background:linear-gradient(#ffffff,#d0d0d0 45%,#8f8f8f)"></div>
<svg class="abs" style="left:811.0px;top:66px" width="6" height="4" viewBox="0 0 6 4"><path d="M0 0h6l-3 4z" fill="#000"/></svg>
<div class="abs" style="left:833px;top:50px;width:100px;height:23px;background:#fff;border:1px solid #adadad"></div>
<div class="abs" style="left:914px;top:52px;width:17px;height:19px;background:#e1e1e1;border:1px solid #adadad"></div>
<svg class="abs" style="left:918px;top:58.5px" width="9" height="6" viewBox="0 0 9 6"><path d="M.500 .800l4 4l4-4" fill="none" stroke="#444" stroke-width="1.100"/></svg>
<div class="abs ui" style="left:837px;top:53.5px;font-size:12px;line-height:16px;color:#8a8a8a;letter-spacing:-0.2px">Rechercher</div>
<svg class="abs" style="left:938px;top:53px" width="16" height="16" viewBox="0 0 16 16">
<path d="M5.800 1.200h2.600v7.300h3.800l-5.100 6.300l-5.100-6.300h3.800z" fill="#a9cdee" stroke="#2a5f96" stroke-width="1.100" stroke-linejoin="round"/>
</svg>
<svg class="abs" style="left:963px;top:53px" width="16" height="16" viewBox="0 0 16 16">
<path d="M5.800 14.800h2.600v-7.300h3.800l-5.100-6.300l-5.100 6.300h3.800z" fill="#a9cdee" stroke="#2a5f96" stroke-width="1.100" stroke-linejoin="round"/>
</svg>
<div class="abs" style="left:989px;top:49px;width:10px;height:25px;background:linear-gradient(#ffffff,#d0d0d0 45%,#8f8f8f)"></div>
<svg class="abs" style="left:991.0px;top:66px" width="6" height="4" viewBox="0 0 6 4"><path d="M0 0h6l-3 4z" fill="#000"/></svg>
<svg class="abs" style="left:16px;top:84px" width="16" height="16" viewBox="0 0 16 16">
<path d="M4.500 1.500h10.500v8.500l-3 3h-7.500z" fill="#eef1f4" stroke="#8d98a4" stroke-width=".9"/>
<path d="M12 13v-3h3" fill="#d5dbe1" stroke="#8d98a4" stroke-width=".7"/>
<rect x="1.200" y="4.500" width="8.300" height="10" fill="#dfe4ea" stroke="#55606c" stroke-width="1"/>
<path d="M3.300 7.500h4M5.300 7.500v5" stroke="#2b3440" stroke-width="1.100"/>
<path d="M4.300 12.500h2" stroke="#2b3440" stroke-width=".9"/>
</svg>
<div class="abs" style="left:45px;top:81px;width:167px;height:23px;background:#fff;border:1px solid #adadad"></div>
<div class="abs" style="left:193px;top:83px;width:17px;height:19px;background:#e1e1e1;border:1px solid #adadad"></div>
<svg class="abs" style="left:197px;top:89.5px" width="9" height="6" viewBox="0 0 9 6"><path d="M.500 .800l4 4l4-4" fill="none" stroke="#444" stroke-width="1.100"/></svg>
<div class="abs ui" style="left:49px;top:84.5px;font-size:12px;line-height:16px;color:#000;letter-spacing:-0.2px">Adobe Devanagari</div>
<div class="abs" style="left:220px;top:81px;width:67px;height:23px;background:#fff;border:1px solid #adadad"></div>
<div class="abs" style="left:268px;top:83px;width:17px;height:19px;background:#e1e1e1;border:1px solid #adadad"></div>
<svg class="abs" style="left:272px;top:89.5px" width="9" height="6" viewBox="0 0 9 6"><path d="M.500 .800l4 4l4-4" fill="none" stroke="#444" stroke-width="1.100"/></svg>
<div class="abs ui" style="left:224px;top:84.5px;font-size:12px;line-height:16px;color:#000;letter-spacing:-0.2px">11</div>
<div class="abs tbt" style="left:301.5px;top:83px;font-weight:bold;font-size:16.5px;line-height:18px;transform:scaleX(.7);transform-origin:0 0;-webkit-text-stroke:0.8px #15181f">G</div>
<div class="abs tbt" style="left:328px;top:82.5px;font-style:italic;font-family:'Liberation Serif',serif;font-size:18.5px;line-height:20px;transform:scaleX(1.15);transform-origin:0 0">I</div>
<div class="abs tbt" style="left:352px;top:81px;font-size:16.5px;line-height:18px;transform:scaleX(.72);transform-origin:0 0">S</div>
<div class="abs" style="left:352px;top:97px;width:9px;height:1px;background:#15181f"></div>
<div class="abs" style="left:373px;top:85px;width:1px;height:15px;background:#c8c8c8"></div>
<svg class="abs" style="left:382px;top:84px" width="16" height="16" viewBox="0 0 16 16"><path d="M2 4.5h12" stroke="#15181c" stroke-width="1"/><path d="M2 6.5h9" stroke="#15181c" stroke-width="1"/><path d="M2 8.5h12" stroke="#15181c" stroke-width="1"/><path d="M2 10.5h9" stroke="#15181c" stroke-width="1"/><path d="M2 12.5h12" stroke="#15181c" stroke-width="1"/></svg>
<svg class="abs" style="left:407px;top:84px" width="16" height="16" viewBox="0 0 16 16"><path d="M2 4.5h12" stroke="#15181c" stroke-width="1"/><path d="M4 6.5h8" stroke="#15181c" stroke-width="1"/><path d="M2 8.5h12" stroke="#15181c" stroke-width="1"/><path d="M4 10.5h8" stroke="#15181c" stroke-width="1"/><path d="M2 12.5h12" stroke="#15181c" stroke-width="1"/></svg>
<svg class="abs" style="left:432px;top:84px" width="16" height="16" viewBox="0 0 16 16"><path d="M2 4.5h12" stroke="#15181c" stroke-width="1"/><path d="M5 6.5h9" stroke="#15181c" stroke-width="1"/><path d="M2 8.5h12" stroke="#15181c" stroke-width="1"/><path d="M5 10.5h9" stroke="#15181c" stroke-width="1"/><path d="M2 12.5h12" stroke="#15181c" stroke-width="1"/></svg>
<svg class="abs" style="left:457px;top:84px" width="16" height="16" viewBox="0 0 16 16"><path d="M2 4.5h12" stroke="#15181c" stroke-width="1"/><path d="M2 6.5h12" stroke="#15181c" stroke-width="1"/><path d="M2 8.5h12" stroke="#15181c" stroke-width="1"/><path d="M2 10.5h12" stroke="#15181c" stroke-width="1"/><path d="M2 12.5h12" stroke="#15181c" stroke-width="1"/></svg>
<svg class="abs" style="left:482px;top:84px" width="16" height="16" viewBox="0 0 16 16">
<rect x=".7" y="1.700" width="14.600" height="12" fill="#f6f6f6" stroke="#dcdcdc" stroke-width=".9"/>
<path d="M.7 4.700h14.600M.7 7.700h14.600M.7 10.700h14.600M5.500 1.700v12M10.500 1.700v12" stroke="#dcdcdc" stroke-width=".9"/>
<rect x="1.200" y="5.200" width="9" height="2.200" fill="#e9e9e9"/>
</svg>
<div class="abs" style="left:506px;top:85px;width:1px;height:15px;background:#c8c8c8"></div>
<svg class="abs" style="left:515px;top:84px" width="16" height="16" viewBox="0 0 16 16"><ellipse cx="3.200" cy="13.800" rx="2.800" ry="1.300" fill="#f7c841" stroke="#9a6a00" stroke-width=".7"/><ellipse cx="12.8" cy="14" rx="2.800" ry="1.300" fill="#f7c841" stroke="#9a6a00" stroke-width=".7"/><ellipse cx="12.8" cy="12" rx="2.800" ry="1.300" fill="#f7c841" stroke="#9a6a00" stroke-width=".7"/><ellipse cx="12.8" cy="10" rx="2.800" ry="1.300" fill="#f7c841" stroke="#9a6a00" stroke-width=".7"/><ellipse cx="12.8" cy="8" rx="2.800" ry="1.300" fill="#f7c841" stroke="#9a6a00" stroke-width=".7"/><ellipse cx="8.3" cy="13.5" rx="2.800" ry="1.300" fill="#f7c841" stroke="#9a6a00" stroke-width=".7"/><ellipse cx="8.3" cy="11.5" rx="2.800" ry="1.300" fill="#f7c841" stroke="#9a6a00" stroke-width=".7"/><ellipse cx="8.3" cy="9.5" rx="2.800" ry="1.300" fill="#f7c841" stroke="#9a6a00" stroke-width=".7"/><ellipse cx="8.3" cy="7.5" rx="2.800" ry="1.300" fill="#f7c841" stroke="#9a6a00" stroke-width=".7"/><ellipse cx="8.3" cy="5.5" rx="2.800" ry="1.300" fill="#f7c841" stroke="#9a6a00" stroke-width=".7"/><ellipse cx="8.3" cy="3.5" rx="2.800" ry="1.300" fill="#f7c841" stroke="#9a6a00" stroke-width=".7"/><ellipse cx="8.3" cy="1.8" rx="2.800" ry="1.300" fill="#f7c841" stroke="#9a6a00" stroke-width=".7"/></svg>
<svg class="abs" style="left:539px;top:84px" width="16" height="16" viewBox="0 0 16 16">
<text x="8" y="14" font-family="Liberation Sans, sans-serif" font-weight="bold" font-size="14.500" text-anchor="middle" fill="#15233f" textLength="13" lengthAdjust="spacingAndGlyphs">%</text>
</svg>
<svg class="abs" style="left:565px;top:84px" width="16" height="16" viewBox="0 0 16 16">
<text x="3.300" y="8" font-family="Liberation Sans, sans-serif" font-weight="bold" font-size="8.500" text-anchor="middle" fill="#15233f">$</text>
<text x="11.300" y="8.500" font-family="Liberation Sans, sans-serif" font-weight="bold" font-size="9.500" text-anchor="middle" fill="#15233f" textLength="8.500" lengthAdjust="spacingAndGlyphs">%</text>
<path d="M6.500 8.800l-.5 2" stroke="#15233f" stroke-width="1"/>
<path d="M14 11h-5.500v-2.200l-4 3.400l4 3.400v-2.200h5.500z" fill="#5fa2e6" stroke="#1b4f8f" stroke-width=".8" stroke-linejoin="round"/>
</svg>
<svg class="abs" style="left:590px;top:84px" width="16" height="16" viewBox="0 0 16 16">
<path d="M1.200 3.700h2.300v-2.300h2.200v2.300h2.300v2.200h-2.300v2.300h-2.200v-2.300h-2.300z" fill="#5cb82e" stroke="#2a6e08" stroke-width=".7"/>
<text x="12.500" y="8.300" font-family="Liberation Sans, sans-serif" font-weight="bold" font-size="7.500" text-anchor="middle" fill="#2f6fc4">0</text>
<text x="8.700" y="15.500" font-family="Liberation Sans, sans-serif" font-weight="bold" font-size="7.500" text-anchor="middle" fill="#15233f" textLength="14" lengthAdjust="spacingAndGlyphs">.000</text>
</svg>
<svg class="abs" style="left:615px;top:84px" width="16" height="16" viewBox="0 0 16 16">
<text x="2.800" y="8.300" font-family="Liberation Sans, sans-serif" font-weight="bold" font-size="7.500" text-anchor="middle" fill="#15233f">0</text>
<text x="8" y="15.500" font-family="Liberation Sans, sans-serif" font-weight="bold" font-size="7.500" text-anchor="middle" fill="#15233f" textLength="14" lengthAdjust="spacingAndGlyphs">.000</text>
<path d="M6.500 2l7.500 7.500M14 2l-7.500 7.500" stroke="#9e0f0f" stroke-width="3.400" stroke-linecap="round"/>
<path d="M6.500 2l7.500 7.500M14 2l-7.500 7.500" stroke="#ee3a3a" stroke-width="2" stroke-linecap="round"/>
<text x="14" y="15.500" font-family="Liberation Sans, sans-serif" font-weight="bold" font-size="7.500" text-anchor="middle" fill="#2f6fc4">0</text>
</svg>
<div class="abs" style="left:640px;top:85px;width:1px;height:15px;background:#c8c8c8"></div>
<svg class="abs" style="left:648px;top:84px" width="16" height="16" viewBox="0 0 16 16"><path d="M7.500 6.200h-3.500v-2.200l-3.700 3.800l3.700 3.800v-2.200h3.500z" fill="#f0641e" stroke="#9e3000" stroke-width=".8" stroke-linejoin="round"/>
<path d="M8.500 1.200v13.600" stroke="#303840" stroke-width=".9" stroke-dasharray="1.500 1"/>
<path d="M9.500 3.500h6M9.500 6.200h5M9.500 9h6M9.500 11.800h5" stroke="#2f6fc4" stroke-width="1.300"/>
</svg>
<svg class="abs" style="left:673px;top:84px" width="16" height="16" viewBox="0 0 16 16"><path d="M.5 6.200h3.500v-2.200l3.700 3.800l-3.700 3.800v-2.200h-3.500z" fill="#f0641e" stroke="#9e3000" stroke-width=".8" stroke-linejoin="round"/>
<path d="M8.500 1.200v13.600" stroke="#303840" stroke-width=".9" stroke-dasharray="1.500 1"/>
<path d="M9.500 3.500h6M9.500 6.200h5M9.500 9h6M9.500 11.800h5" stroke="#2f6fc4" stroke-width="1.300"/>
</svg>
<div class="abs" style="left:697px;top:85px;width:1px;height:15px;background:#c8c8c8"></div>
<svg class="abs" style="left:705px;top:84px" width="16" height="16" viewBox="0 0 16 16">
<rect x="1.500" y="1.500" width="13" height="13" fill="#eef2f6" stroke="#20262d" stroke-width="1.200"/>
<rect x="2.800" y="2.800" width="10.400" height="10.400" fill="none" stroke="#c8d1da" stroke-width=".8"/>
</svg>
<svg class="abs" style="left:728.5px;top:89.5px" width="6" height="3.5" viewBox="0 0 6 3.500"><path d="M0 0h6l-3 3.500z" fill="#000"/></svg>
<svg class="abs" style="left:740px;top:84px" width="16" height="16" viewBox="0 0 16 16">
<rect x="0" y="13" width="16" height="3" fill="#d5dde4"/>
<path d="M3.500 4.500l5-3l5 6.500l-5.500 4z" fill="#e4e8ec" stroke="#5a636c" stroke-width=".9" stroke-linejoin="round"/>
<ellipse cx="6" cy="3.300" rx="3" ry="1.500" transform="rotate(-28 6 3.300)" fill="#f6f7f8" stroke="#5a636c" stroke-width=".8"/>
<path d="M9.500 6c3-1.500 5.500-.5 5.500 2.500c0 1.500-.5 3-1 4h-2.500c0-2.500-.5-4.500-2-6.500z" fill="#4b97e0" stroke="#1c4e8c" stroke-width=".7"/>
<path d="M3 6.500c-.8 1-.8 2 .2 2.800" fill="none" stroke="#5a636c" stroke-width=".8"/>
</svg>
<svg class="abs" style="left:764.5px;top:89.5px" width="6" height="3.5" viewBox="0 0 6 3.500"><path d="M0 0h6l-3 3.500z" fill="#000"/></svg>
<svg class="abs" style="left:777px;top:84px" width="16" height="16" viewBox="0 0 16 16">
<text x="8" y="10.800" font-family="Liberation Sans, sans-serif" font-weight="bold" font-size="13.500" text-anchor="middle" fill="#8fb8e0" stroke="#173f6e" stroke-width="1">A</text>
<rect x="0" y="12.300" width="16" height="3.700" fill="#000"/>
</svg>
<svg class="abs" style="left:800.5px;top:89.5px" width="6" height="3.5" viewBox="0 0 6 3.500"><path d="M0 0h6l-3 3.500z" fill="#000"/></svg>
<div class="abs" style="left:816px;top:80px;width:10px;height:25px;background:linear-gradient(#ffffff,#d0d0d0 45%,#8f8f8f)"></div>
<svg class="abs" style="left:818.0px;top:97px" width="6" height="4" viewBox="0 0 6 4"><path d="M0 0h6l-3 4z" fill="#000"/></svg>
<div class="abs" style="left:0px;top:107px;width:1600px;height:35px;background:#f0f0f0;border-top:1px solid #a9a9a9"></div>
<div class="abs" style="left:0px;top:108px;width:1553px;height:1px;background:#fff"></div>
<div class="abs" style="left:6px;top:114px;width:125px;height:23px;background:#fff;border:1px solid #adadad"></div>
<div class="abs" style="left:112px;top:116px;width:17px;height:19px;background:#e1e1e1;border:1px solid #adadad"></div>
<svg class="abs" style="left:116px;top:122.5px" width="9" height="6" viewBox="0 0 9 6"><path d="M.500 .800l4 4l4-4" fill="none" stroke="#444" stroke-width="1.100"/></svg>
<div class="abs ui" style="left:11px;top:117.5px;font-size:12px;line-height:16px;color:#000;letter-spacing:-0.2px">C21</div>
<svg class="abs" style="left:144px;top:116px" width="16" height="16" viewBox="0 0 16 16">
<text x="7" y="14" font-family="Liberation Serif, serif" font-style="italic" font-weight="bold" font-size="15" text-anchor="middle" fill="#27313c">f</text>
<text x="12" y="14.500" font-family="Liberation Sans, sans-serif" font-weight="bold" font-size="9" text-anchor="middle" fill="#27313c">x</text>
<path d="M3 .5l.6 1.300l1.400.2l-1 1l.2 1.400l-1.200-.7l-1.200.7l.2-1.400l-1-1l1.400-.2z" fill="#f3c530" stroke="#b08400" stroke-width=".3"/>
<path d="M8.500 0l.4.900l1 .1l-.7.700l.2 1l-.9-.5l-.9.500l.2-1l-.7-.7l1-.1z" fill="#f3c530"/>
<path d="M14 3.500l.4.900l1 .1l-.7.700l.2 1l-.9-.5l-.9.500l.2-1l-.7-.7l1-.1z" fill="#f3c530"/>
</svg>
<svg class="abs" style="left:169px;top:117px" width="14" height="15" viewBox="0 0 16 16">
<path d="M1.500 1.200h12v3.600h-2.200v-1h-5.300l3.800 4.200l-3.800 4.200h5.300v-1h2.200v3.600h-12v-2l4.300-4.800l-4.300-4.800z" fill="#2f9ae0" stroke="#123f6b" stroke-width="1" stroke-linejoin="round"/>
</svg>
<div class="abs" style="left:197px;top:123.5px;width:11px;height:1.5px;background:#333"></div>
<div class="abs" style="left:197px;top:127px;width:11px;height:1.5px;background:#333"></div>
<div class="abs" style="left:222px;top:113px;width:1328px;height:25px;background:#fff;border:1px solid #e3e3e3;border-top:2px solid #6a6a6a;border-left:2px solid #6a6a6a"></div>
<div class="abs ui" style="left:228px;top:118px;font-size:12px;line-height:16px">I043</div>
<div class="abs" style="left:1553px;top:107px;width:47px;height:735px;background:#f0f0f0"></div>
<div class="abs" style="left:1554px;top:108px;width:1px;height:732px;background:#cfcfcf"></div>
<div class="abs" style="left:1560px;top:108px;width:1px;height:732px;background:#b0b0b0"></div>
<div class="abs" style="left:1561px;top:108px;width:38px;height:732px;background:#efefef;border-right:1px solid #c0c0c0;border-bottom:1px solid #c0c0c0"></div>
<svg class="abs" style="left:1575px;top:123.5px" width="12" height="11" viewBox="0 0 12 11"><path d="M1 1.500h7M1 4h7M1 6.500h5" stroke="#222" stroke-width="1.200"/><path d="M6.500 7.500h5l-2.500 3z" fill="#222"/></svg>
<div class="abs" style="left:1564px;top:151px;width:31px;height:31px;background:#f3f3f3;border:1px solid #b5b5b5;border-radius:3px"></div>
<div class="abs" style="left:1566px;top:147px;width:29px;height:1px;background:#dcdcdc"></div>
<svg class="abs" style="left:1568px;top:155px" width="24" height="24" viewBox="0 0 24 24">
<ellipse cx="12" cy="22.500" rx="9" ry="1.500" fill="#000" opacity=".18"/>
<path d="M3 6l5-2.500l5 2.500v6l-5 2.500l-5-2.500z" fill="#2f9de0" stroke="#1467a8" stroke-width=".6"/>
<path d="M3 6l5 2.500l5-2.500M8 8.500v6" stroke="#bfe4fb" stroke-width=".8" fill="none"/>
<path d="M11 4.500l5-2.500l5 2.500v6l-5 2.500l-5-2.500z" fill="#3fa9e8" stroke="#1467a8" stroke-width=".6"/>
<path d="M11 4.500l5 2.500l5-2.500M16 7v6" stroke="#cdeafc" stroke-width=".8" fill="none"/>
<path d="M3 13l5-2.500l5 2.500v6l-5 2.500l-5-2.500z" fill="#2f9de0" stroke="#1467a8" stroke-width=".6"/>
<path d="M3 13l5 2.500l5-2.500M8 15.500v6" stroke="#bfe4fb" stroke-width=".8" fill="none"/>
<path d="M11 12l5-2.500l5 2.500v6.500l-5 2.500l-5-2.500z" fill="#7ed321" stroke="#4a9a0a" stroke-width=".6"/>
<path d="M11 12l5 2.500l5-2.500M16 14.500v6.500" stroke="#d6f5a8" stroke-width=".8" fill="none"/>
</svg>
<svg class="abs" style="left:1568px;top:189px" width="24" height="24" viewBox="0 0 24 24">
<ellipse cx="12" cy="22.500" rx="9" ry="1.500" fill="#000" opacity=".18"/>
<path d="M7 21l-2.500-10l10 4.500z" fill="#2f8fe0" stroke="#155a9c" stroke-width=".6"/>
<path d="M5 7c2-3.500 6-4 8.500-1.500s4 4.500 2 8s-3 1.500-5.500.5s-7-3-5-7z" fill="#152b45"/>
<path d="M4.500 5.500c1.500-2 4-2.500 5.500-1.500l-1.500 3z" fill="#f28a1c"/>
<path d="M13 12c2.500 0 4 2 3.500 5.500c-2.500.5-4.500-.5-5.500-2.500z" fill="#5cb82e"/>
<path d="M12.500 1l.9 1.900l2.100.3l-1.500 1.500l.4 2.100l-1.900-1l-1.900 1l.4-2.100l-1.500-1.500l2.100-.3z" fill="#c05bd8"/>
<path d="M19 2.500l1 2.100l2.300.3l-1.700 1.600l.4 2.300l-2-1.100l-2 1.100l.4-2.300l-1.700-1.600l2.300-.3z" fill="#f5cf2e"/>
<path d="M3.500 9l.8 1.700l1.900.3l-1.400 1.300l.3 1.900l-1.600-.9l-1.600.9l.3-1.900l-1.400-1.300l1.900-.3z" fill="#ef4f8b"/>
<path d="M20.500 10.500l.8 1.700l1.900.3l-1.400 1.300l.3 1.900l-1.600-.9l-1.600.9l.3-1.900l-1.400-1.300l1.900-.3z" fill="#ef4f5f"/>
</svg>
<svg class="abs" style="left:1568px;top:224px" width="24" height="24" viewBox="0 0 24 24">
<ellipse cx="13" cy="22.500" rx="9" ry="1.500" fill="#000" opacity=".18"/>
<path d="M5 8l15-2l2 12l-15 2z" fill="#e9eef2" stroke="#aab4bd" stroke-width=".6"/>
<path d="M2 6.500l15-5l5 13.500l-15 5z" fill="#fff" stroke="#a6b0ba" stroke-width=".7"/>
<path d="M4.200 7.500l12-4l3.600 10.200l-12 4z" fill="#9fd0f5"/>
<path d="M7.800 17.700l-1.400-4l3.300-3.500l2.300 1.700l3.500-2.800l2.700 1.200l1.600 3.400z" fill="#4c9a2a"/>
<path d="M7 11.500l3-3l2.500 2v3.500l-4.500 1.500z" fill="#f4f4f4" stroke="#39424b" stroke-width=".9"/>
<path d="M6.500 11.500l3.500-3.500l3 2.300" fill="none" stroke="#39424b" stroke-width="1.200"/>
</svg>
<svg class="abs" style="left:1568px;top:260px" width="24" height="24" viewBox="0 0 24 24">
<ellipse cx="12" cy="22.500" rx="8" ry="1.500" fill="#000" opacity=".18"/>
<circle cx="12" cy="12" r="10" fill="#fdfdfd" stroke="#f0a21f" stroke-width="2.600"/>
<circle cx="12" cy="12" r="11.200" fill="none" stroke="#b36b00" stroke-width=".6"/>
<path d="M18 5.500l-4 8.500l-4-4z" fill="#2a5fd0"/>
<path d="M6 18.500l4-8.500l4 4z" fill="#e02a2a"/>
<text x="12" y="6.500" font-family="Liberation Sans, sans-serif" font-weight="bold" font-size="5.500" text-anchor="middle" fill="#222">N</text>
</svg>
<svg class="abs" style="left:1568px;top:295px" width="24" height="24" viewBox="0 0 24 24">
<ellipse cx="13" cy="22.800" rx="8" ry="1.300" fill="#000" opacity=".18"/>
<path d="M6.500 1.500h10l5 5v14.500h-15z" fill="#e3f0fb" stroke="#4e96d6" stroke-width=".9"/>
<path d="M16.500 1.500v5h5" fill="#fff" stroke="#4e96d6" stroke-width=".8"/>
<text x="8.500" y="19.500" font-family="Liberation Serif, serif" font-style="italic" font-size="22" text-anchor="middle" fill="#1d3f70">f</text>
<text x="15.800" y="19" font-family="Liberation Sans, sans-serif" font-size="12" text-anchor="middle" fill="#1d3f70">x</text>
</svg>
<svg class="abs" style="left:1555px;top:455px" width="4" height="36" viewBox="0 0 4 36"><path d="M.500 0l3 2l-3 2z M.500 30l3 2l-3 2z" fill="#777"/><path d="M1 9h2M1 12h2M1 15h2M1 18h2M1 21h2M1 24h2" stroke="#888" stroke-width="1"/></svg>
<div class="abs" style="left:1536px;top:142px;width:17px;height:678px;background:#f0f0f0"></div>
<div class="abs" style="left:1536px;top:142px;width:17px;height:4px;background:#000"></div>
<svg class="abs" style="left:1540px;top:151px" width="9" height="6" viewBox="0 0 9 6"><path d="M.700 5l3.800-3.800l3.800 3.800" fill="none" stroke="#505050" stroke-width="1.500"/></svg>
<div class="abs" style="left:1537px;top:182px;width:15px;height:303px;background:#cdcdcd"></div>
<svg class="abs" style="left:1540px;top:808px" width="9" height="6" viewBox="0 0 9 6"><path d="M.700 1l3.800 3.800l3.800-3.800" fill="none" stroke="#505050" stroke-width="1.500"/></svg>
<div class="abs" style="left:0px;top:820px;width:1553px;height:19px;background:#f0f0f0"></div>
<div class="abs" style="left:0px;top:820px;width:2px;height:17px;background:#9a9a9a"></div>
<div class="abs" style="left:3px;top:821px;width:15px;height:15px;background:#e1e1e1;border:1px solid #adadad"></div>
<svg class="abs" style="left:5px;top:823px" width="11" height="11" viewBox="0 0 11 11"><path d="M2.500 1.500v8" stroke="#000" stroke-width="1.400"/><path d="M9 1.500v8l-5-4z" fill="#000"/></svg>
<div class="abs" style="left:20px;top:821px;width:15px;height:15px;background:#e1e1e1;border:1px solid #adadad"></div>
<svg class="abs" style="left:22px;top:823px" width="11" height="11" viewBox="0 0 11 11"><path d="M8 1.500v8l-5-4z" fill="#000"/></svg>
<div class="abs" style="left:37px;top:821px;width:15px;height:15px;background:#e1e1e1;border:1px solid #adadad"></div>
<svg class="abs" style="left:39px;top:823px" width="11" height="11" viewBox="0 0 11 11"><path d="M3.500 1.500v8l5-4z" fill="#000"/></svg>
<div class="abs" style="left:54px;top:821px;width:15px;height:15px;background:#e1e1e1;border:1px solid #adadad"></div>
<svg class="abs" style="left:56px;top:823px" width="11" height="11" viewBox="0 0 11 11"><path d="M9 1.500v8" stroke="#000" stroke-width="1.400"/><path d="M2.500 1.500v8l5-4z" fill="#000"/></svg>
<svg class="abs" style="left:68px;top:820px" width="204" height="19" viewBox="0 0 204 19">
<path d="M115 1.500h83" stroke="#8a8a8a" stroke-width="1"/>
<path d="M58 16.500l7-15.500h50l-7 15.500z" fill="#f0f0f0" stroke="#333" stroke-width="1"/>
<path d="M2 .500l7.500 16h47l7-16" fill="#fff" stroke="#000" stroke-width="1.200"/>
<rect x="197.500" y="1.500" width="5" height="16" fill="#f0f0f0" stroke="#8a8a8a" stroke-width="1"/>
</svg>
<div class="abs ui" style="left:80px;top:822px;font-weight:bold;font-size:12px;line-height:14px;letter-spacing:-0.45px">Feuille1</div>
<div class="abs ui" style="left:133px;top:822px;font-size:12px;line-height:14px;letter-spacing:-0.15px">Feuille2</div>
<svg class="abs" style="left:277px;top:824px" width="6" height="9" viewBox="0 0 6 9"><path d="M5 .700l-3.800 3.800l3.800 3.800" fill="none" stroke="#505050" stroke-width="1.500"/></svg>
<div class="abs" style="left:288px;top:821px;width:590px;height:15px;background:#cdcdcd"></div>
<svg class="abs" style="left:1522px;top:824px" width="6" height="9" viewBox="0 0 6 9"><path d="M1 .700l3.800 3.800l-3.800 3.800" fill="none" stroke="#505050" stroke-width="1.500"/></svg>
<div class="abs" style="left:1533px;top:820px;width:3px;height:17px;background:#000"></div>
<div class="abs" style="left:0px;top:838px;width:1600px;height:22px;background:#f0f0f0"></div>
<div class="abs" style="left:432px;top:842px;width:1px;height:16px;background:#a0a0a0"></div>
<div class="abs" style="left:433px;top:842px;width:1px;height:16px;background:#fff"></div>
<div class="abs" style="left:853px;top:842px;width:1px;height:16px;background:#a0a0a0"></div>
<div class="abs" style="left:854px;top:842px;width:1px;height:16px;background:#fff"></div>
<div class="abs" style="left:907px;top:842px;width:1px;height:16px;background:#a0a0a0"></div>
<div class="abs" style="left:908px;top:842px;width:1px;height:16px;background:#fff"></div>
<div class="abs" style="left:940px;top:842px;width:1px;height:16px;background:#a0a0a0"></div>
<div class="abs" style="left:941px;top:842px;width:1px;height:16px;background:#fff"></div>
<div class="abs" style="left:956px;top:842px;width:1px;height:16px;background:#a0a0a0"></div>
<div class="abs" style="left:957px;top:842px;width:1px;height:16px;background:#fff"></div>
<div class="abs" style="left:985px;top:842px;width:1px;height:16px;background:#a0a0a0"></div>
<div class="abs" style="left:986px;top:842px;width:1px;height:16px;background:#fff"></div>
<div class="abs" style="left:1407px;top:842px;width:1px;height:16px;background:#a0a0a0"></div>
<div class="abs" style="left:1408px;top:842px;width:1px;height:16px;background:#fff"></div>
<div class="abs" style="left:1560px;top:842px;width:1px;height:16px;background:#a0a0a0"></div>
<div class="abs" style="left:1561px;top:842px;width:1px;height:16px;background:#fff"></div>
<div class="abs st" style="left:10px;top:843px;">Feuille 1 / 2</div>
<div class="abs st" style="left:438px;top:843px;">Par défaut</div>
<div class="abs st" style="left:912px;top:843px;">STD</div>
<div class="abs st" style="left:1168px;top:843px;">Somme=0</div>
<div class="abs st" style="left:1565px;top:843px;">71 %</div>
<svg class="abs" style="left:1410px;top:842px" width="146" height="17" viewBox="0 0 146 17">
<path d="M20 8.500h114" stroke="#8c8c8c" stroke-width="1"/>
<path d="M72.500 4v9" stroke="#8c8c8c" stroke-width="1"/>
<circle cx="8.500" cy="8.500" r="5" fill="#dbe9f7" stroke="#3b6ea5" stroke-width="1.100"/><path d="M5.800 8.500h5.400" stroke="#2a4f7c" stroke-width="1.300"/>
<circle cx="136.500" cy="8.500" r="5" fill="#dbe9f7" stroke="#3b6ea5" stroke-width="1.100"/><path d="M133.800 8.500h5.400M136.500 5.800v5.400" stroke="#2a4f7c" stroke-width="1.300"/>
<circle cx="52" cy="8.500" r="4" fill="#6f93b8" stroke="#2f4f70" stroke-width="1"/>
</svg>
<div class="abs" style="left:0px;top:860px;width:1600px;height:40px;background:#1c2b33"></div>
<svg class="abs" style="left:16px;top:872px" width="16" height="16" viewBox="0 0 16 16"><path d="M0 2.300l6.500-.900v6.200h-6.500zM7.300 1.300l8.700-1.300v7.600h-8.700zM0 8.400h6.500v6.200l-6.500-.900zM7.300 8.400h8.700v7.600l-8.700-1.300z" fill="#fff"/></svg>
<div class="abs" style="left:48px;top:860px;width:344px;height:40px;background:#f3f3f3;border:1px solid #d4d4d4;border-bottom:none"></div>
<svg class="abs" style="left:59px;top:871px" width="18" height="18" viewBox="0 0 18 18"><circle cx="11" cy="6.500" r="5" fill="none" stroke="#222" stroke-width="1.400"/><path d="M7.300 10.200l-6 6" stroke="#222" stroke-width="1.500"/></svg>
<div class="abs ui" style="left:88px;top:872px;font-size:15px;line-height:18px;color:#3c3c3c;letter-spacing:-0.13px">Taper ici pour rechercher</div>
<svg class="abs" style="left:406px;top:870px" width="20" height="20" viewBox="0 0 20 20"><circle cx="10" cy="10" r="6.800" fill="none" stroke="#fff" stroke-width="2.200"/></svg>
<svg class="abs" style="left:455px;top:871px" width="18" height="18" viewBox="0 0 18 18"><path d="M.500 1.500h1M.500 16.500h1M13 1.500h.500M13 16.500h.500" stroke="#fff" stroke-width="1"/><path d="M1.500 1.500h11M1.500 16.500h11" stroke="#fff" stroke-width="1.200"/><rect x="1.700" y="4.700" width="10.600" height="8.600" fill="none" stroke="#fff" stroke-width="1.400"/><path d="M15.500 4v3M15.500 8.500v5" stroke="#fff" stroke-width="1.600"/></svg>
<svg class="abs" style="left:503px;top:869px" width="24" height="21" viewBox="0 0 24 21">
<path d="M1 2.500h7.500l2 2h12.500v4h-22z" fill="#e9a825"/>
<path d="M1 5.500h22v14h-22z" fill="#f7cf52"/>
<path d="M1 9h22v10.500h-22z" fill="#fbd966"/>
<path d="M6.500 12h11v7.500h-11z" fill="#3f9be8"/><path d="M9.500 15.500h5v4h-5z" fill="#f7cf52"/>
</svg>
<svg class="abs" style="left:552px;top:867px" width="25" height="26" viewBox="0 0 25 26">
<circle cx="12.500" cy="14" r="11" fill="#ff9500"/>
<path d="M12.500 3c3 1 5 0 6-2c2 3 5 6 5 12a11 11 0 0 1-22 1c0-3 1-5 2.500-7c0 2 .5 3 1.500 3.500c-.5-3 2-6 4-7c-.5 1.500 1 2 3-.5z" fill="#ff6a1a"/>
<path d="M16 2c3 2 7 5 7.500 11c-1-3-3-5-5.500-6c-1.500-1.500-2-3-2-5z" fill="#ffcf2e"/>
<path d="M2 11c1 6 4 12 10.500 14c-7 0-11-5-11-11c0-1 .2-2 .5-3z" fill="#e0225f"/>
<circle cx="13" cy="14" r="5.300" fill="#6a2fd0"/>
<path d="M8 10c2-1 4-.5 5 1c2 0 3 1 3 2.500s-2 3-4.500 2.500s-4-3-3.500-6z" fill="#ff8a1c"/>
<path d="M13 10a4.500 4.500 0 1 1-4 6c2 2 6 1.500 6.500-1.500c.3-2-1-3.500-2.500-4.500z" fill="#9059ff"/>
</svg>
<svg class="abs" style="left:602px;top:869px" width="22" height="21" viewBox="0 0 22 21">
<rect x="0" y="0" width="22" height="21" rx="3.500" fill="#b30b00"/>
<path d="M4 16c2-4 5-8.500 5.500-11.500c.2-1.500 2-1.500 2 0c0 3-1.500 5-.5 7s4 3.500 6.500 3.500c1.300 0 1.300-1.800 0-1.800c-4 0-9 1.500-12 3.800c-1 .8-2 0-1.500-1z" fill="none" stroke="#fff" stroke-width="1.500" stroke-linejoin="round"/>
</svg>
<svg class="abs" style="left:649px;top:867px" width="25" height="24" viewBox="0 0 25 24">
<path d="M7 2l13 1.500l3 16l-15 2.500z" fill="#c9b48a"/>
<path d="M6 1.500l13 1.500l-4 19l-13.500-2.500z" fill="#9fd3e6" stroke="#6aa7c0" stroke-width=".6"/>
<path d="M7 3l11 1.300l-.8 3.200l-11-1.500z" fill="#d7eef6"/>
<path d="M5 9l10.500 1.600M4.300 12l10.500 1.600M3.600 15l10.500 1.600" stroke="#7fbdd6" stroke-width=".9"/>
<path d="M15 22l4-19l1.500 .5l2.500 16z" fill="#e6ddc6"/>
</svg>
<svg class="abs" style="left:699px;top:868px" width="24" height="24" viewBox="0 0 24 24">
<rect x="11" y="1" width="11" height="9" fill="#d8d8d8" stroke="#555" stroke-width=".8"/><rect x="12.500" y="2.500" width="8" height="6" fill="#1c2fd8"/>
<path d="M9.500 11.500h14l-1 2h-12z" fill="#c8c8c8" stroke="#555" stroke-width=".6"/>
<rect x="1.500" y="12" width="11" height="9" fill="#d8d8d8" stroke="#555" stroke-width=".8"/><rect x="3" y="13.500" width="8" height="6" fill="#1c2fd8"/>
<path d="M0 22h14l-1 2h-12z" fill="#c8c8c8" stroke="#555" stroke-width=".6"/>
<path d="M13 7l-5 4.500h3.500l-3.500 5l7-5.500h-3.500z" fill="#ffe92e" stroke="#a68a00" stroke-width=".5"/>
</svg>
<div class="abs" style="left:736px;top:860px;width:48px;height:40px;background:#3b4a52"></div>
<svg class="abs" style="left:748px;top:868px" width="25" height="25" viewBox="0 0 16 16">
<path d="M2.5 1.5h8l3.5 3.5v9.5h-11.5z" fill="#fff" stroke="#1d2f4a" stroke-width="1"/>
<path d="M2.5 1.5v13h11.5" fill="none" stroke="#0d1b30" stroke-width="1.4"/>
<path d="M10.5 1.5v3.5h3.5" fill="#dfe7ee" stroke="#5a6d80" stroke-width=".8"/>
<rect x="6" y="7" width="7.5" height="7" fill="#8fbf21" stroke="#5d8a10" stroke-width=".8"/>
<rect x="7.2" y="8.2" width="2.2" height="2" fill="#e4f3a8"/><rect x="10.4" y="8.2" width="2.2" height="2" fill="#e4f3a8"/>
<rect x="7.2" y="11.2" width="2.2" height="2" fill="#e4f3a8"/><rect x="10.4" y="11.2" width="2.2" height="2" fill="#e4f3a8"/>
<path d="M0.5 7.5c3-1.5 5-4.5 10-5.5c-3 2-5 4.5-10 6.5z" fill="#a9bfd0" stroke="#7f97ab" stroke-width=".5" opacity=".9"/>
</svg>
<div class="abs" style="left:495px;top:898px;width:40px;height:2px;background:#76b9ed"></div>
<div class="abs" style="left:544px;top:898px;width:40px;height:2px;background:#76b9ed"></div>
<div class="abs" style="left:642px;top:898px;width:40px;height:2px;background:#76b9ed"></div>
<div class="abs" style="left:691px;top:898px;width:40px;height:2px;background:#76b9ed"></div>
<div class="abs" style="left:736px;top:898px;width:48px;height:2px;background:#76b9ed"></div>
<svg class="abs" style="left:1164px;top:869px" width="22" height="22" viewBox="0 0 22 22"><path d="M11.500 1c2.500 2.500 3.300 6 1.800 9.200s-4.800 5.300-8.300 5.300c-1.500 0-2.800-.3-4-1c1.800 4 5.800 6.500 10.200 6c5.300-.6 9.300-5.200 8.800-10.500c-.4-4.500-3.800-8.200-8.500-9z" fill="#f6c21c"/></svg>
<div class="abs ui" style="left:1195px;top:872px;font-size:15px;line-height:18px;color:#fff;letter-spacing:-0.9px">19°C</div>
<div class="abs ui" style="left:1233px;top:872px;font-size:15px;line-height:18px;color:#fff;letter-spacing:-0.7px">Temps dégagé</div>
<svg class="abs" style="left:1339px;top:874px" width="14" height="10" viewBox="0 0 14 10"><path d="M1 8.500l6-6.500l6 6.500" fill="none" stroke="#fff" stroke-width="1.400"/></svg>
<svg class="abs" style="left:1361px;top:869px" width="16" height="22" viewBox="0 0 16 22"><path d="M3 3c1-1.800 3-2.300 5-2.300s4 .5 5 2.300M3 19c1 1.800 3 2.300 5 2.300s4-.5 5-2.300" fill="none" stroke="#fff" stroke-width="1.100"/><rect x="1.500" y="6.500" width="9" height="9" rx="1.500" fill="none" stroke="#fff" stroke-width="1.300"/><path d="M10.500 10l4-2.500v7l-4-2.500z" fill="none" stroke="#fff" stroke-width="1.200"/></svg>
<svg class="abs" style="left:1384px;top:872px" width="19" height="14" viewBox="0 0 19 14"><rect x="5" y="3.500" width="12" height="8" fill="none" stroke="#fff" stroke-width="1.300"/><rect x="7" y="5.500" width="8" height="4" fill="#fff"/><path d="M17.500 6v3" stroke="#fff" stroke-width="1.500"/><path d="M1 2v3.500c0 1.500 1 2.500 2.500 2.500s2.500-1 2.500-2.500v-3.500zM2 0v2M5 0v2M3.500 8v3h2" fill="none" stroke="#fff" stroke-width="1.100"/></svg>
<svg class="abs" style="left:1408px;top:873px" width="20" height="13" viewBox="0 0 20 13"><path d="M5 12.500c-2.500 0-4.500-1.500-4.500-4s2-4 4-3.800c1-2.500 3-4.200 6-4.200c3.500 0 5.500 2.500 5.500 5c2 0 3.500 1.500 3.500 3.500s-1.500 3.500-3.500 3.500z" fill="#fff"/><path d="M4.500 4.700c2.500 0 4 1 7 3.500s5 2.500 7.500 1.800" fill="none" stroke="#b9c0c4" stroke-width="1"/></svg>
<svg class="abs" style="left:1434px;top:873px" width="17" height="15" viewBox="0 0 17 15"><path d="M1 14c0-7.500 6-13 14.500-13" fill="none" stroke="#fff" stroke-width="1.300"/><path d="M5 14c0-5 4.500-9.200 10.500-9.200" fill="none" stroke="#fff" stroke-width="1.300"/><path d="M9 14c0-3 2.800-5.300 6.500-5.300" fill="none" stroke="#fff" stroke-width="1.300"/><circle cx="14" cy="13" r="1.700" fill="#fff"/></svg>
<svg class="abs" style="left:1455px;top:871px" width="19" height="17" viewBox="0 0 19 17"><path d="M1 5.500h3l4-4v14l-4-4h-3z" fill="none" stroke="#fff" stroke-width="1.200" stroke-linejoin="round"/><path d="M10.500 5.500c1.200 1.500 1.200 4.500 0 6" fill="none" stroke="#fff" stroke-width="1.100"/><path d="M13 3.500c2 2.500 2 7.500 0 10" fill="none" stroke="#a9b2b7" stroke-width="1.100"/><path d="M15.500 1.500c3 3.500 3 10.500 0 14" fill="none" stroke="#6f7b82" stroke-width="1.100"/></svg>
<div class="abs ui" style="left:1481px;top:864px;font-size:12px;line-height:15px;color:#fff;width:60px;text-align:center;letter-spacing:-0.2px">21:38</div>
<div class="abs ui" style="left:1481px;top:882px;font-size:12px;line-height:15px;color:#fff;width:60px;text-align:center;letter-spacing:-0.2px">23/09/2021</div>
<svg class="abs" style="left:1558px;top:871px" width="26" height="26" viewBox="0 0 26 26"><path d="M1 1h16v12h-11l-3 3v-3h-2z" fill="#fff"/><path d="M4 4.500h10M4 7h10M4 9.500h7" stroke="#1c2b33" stroke-width="1"/><circle cx="16.500" cy="16.500" r="8" fill="#1c2b33" stroke="#9aa3a8" stroke-width="1.300"/><text x="16.300" y="21" font-family="Liberation Sans, sans-serif" font-size="12.500" font-weight="bold" text-anchor="middle" fill="#fff">1</text></svg>
<div class="abs" style="left:1595px;top:860px;width:1px;height:40px;background:#5a676e"></div>
</div>
</body></html>
